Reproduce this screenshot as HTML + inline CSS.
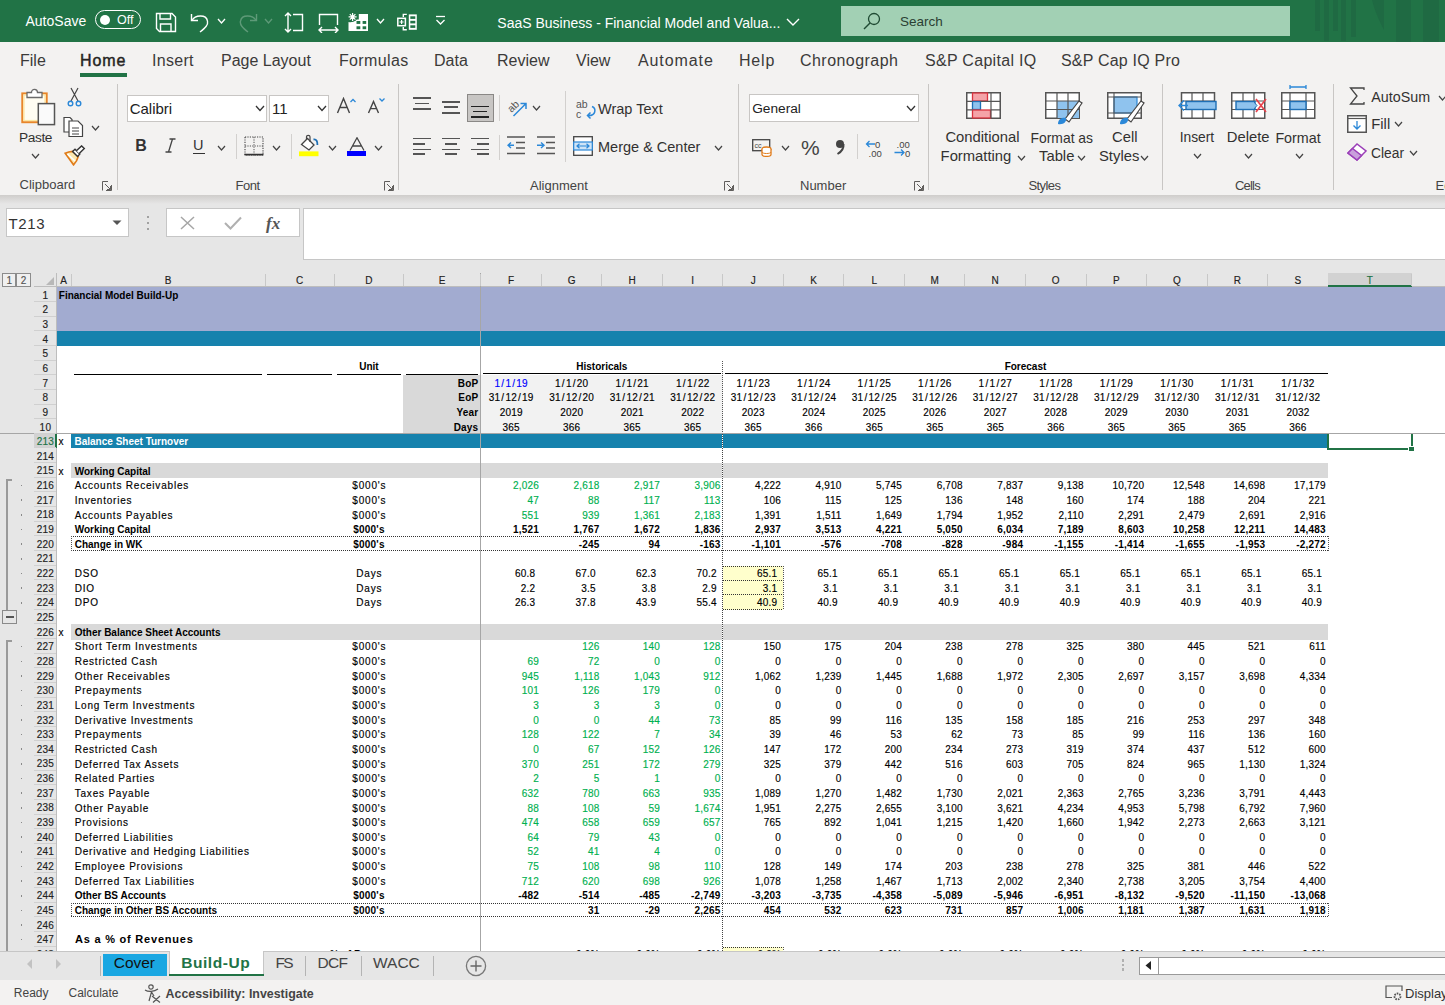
<!DOCTYPE html><html><head><meta charset="utf-8"><style>html,body{margin:0;padding:0;}body{width:1445px;height:1005px;overflow:hidden;position:relative;background:#e6e6e6;font-family:"Liberation Sans", sans-serif;}div{box-sizing:border-box;}</style></head><body>
<div style="position:absolute;left:0px;top:0px;width:1445px;height:42px;background:#217346;"></div>
<div style="position:absolute;left:25.5px;top:12.83px;font-size:14px;line-height:16.10px;color:#fff;font-weight:400;white-space:nowrap;">AutoSave</div>
<div style="position:absolute;left:95px;top:10px;width:46px;height:19px;border:1.3px solid #fff;border-radius:10px;"></div>
<div style="position:absolute;left:100px;top:14.5px;width:10px;height:10px;background:#fff;border-radius:50%;"></div>
<div style="position:absolute;left:117px;top:13.19px;font-size:12.5px;line-height:14.37px;color:#fff;font-weight:400;white-space:nowrap;">Off</div>
<svg style="position:absolute;left:155px;top:12px;" width="22" height="21" viewBox="0 0 22 21"><path d="M1.5 1.5 H17 L20.5 5 V19.5 H4.5 L1.5 16.5 Z" fill="none" stroke="#fff" stroke-width="1.4"/><path d="M5 1.5 V7 H15.5 V1.5" fill="none" stroke="#fff" stroke-width="1.4"/><path d="M5.5 19.5 V12 H16 V19.5" fill="none" stroke="#fff" stroke-width="1.4"/></svg>
<svg style="position:absolute;left:189px;top:12px;" width="22" height="21" viewBox="0 0 22 21"><path d="M2.5 2 V8.5 H9" fill="none" stroke="#fff" stroke-width="1.4"/><path d="M3 8.5 C6 3 17 2 18.5 9 C19.5 13 16 16 11 20" fill="none" stroke="#fff" stroke-width="1.4"/></svg>
<svg style="position:absolute;left:217px;top:18px;" width="9" height="6" viewBox="0 0 9 6"><path d="M1 1 L4.5 5 L8 1" fill="none" stroke="#fff" stroke-width="1.3"/></svg>
<svg style="position:absolute;left:237px;top:12px;" width="22" height="21" viewBox="0 0 22 21"><path d="M19.5 2 V8.5 H13" fill="none" stroke="#5e9a78" stroke-width="1.4"/><path d="M19 8.5 C16 3 5 2 3.5 9 C2.5 13 6 16 11 20" fill="none" stroke="#5e9a78" stroke-width="1.4"/></svg>
<svg style="position:absolute;left:264px;top:18px;" width="9" height="6" viewBox="0 0 9 6"><path d="M1 1 L4.5 5 L8 1" fill="none" stroke="#5e9a78" stroke-width="1.3"/></svg>
<svg style="position:absolute;left:283px;top:12px;" width="22" height="21" viewBox="0 0 22 21"><path d="M5 1 V20 M2 4 L5 1 L8 4 M2 17 L5 20 L8 17" fill="none" stroke="#fff" stroke-width="1.4"/><path d="M10 2.5 H19.5 V18.5 H10" fill="none" stroke="#fff" stroke-width="1.4"/></svg>
<svg style="position:absolute;left:318px;top:12px;" width="21" height="21" viewBox="0 0 21 21"><path d="M1.5 13 V2.5 H19.5 V13" fill="none" stroke="#fff" stroke-width="1.4"/><path d="M1 18 H20 M4 15 L1 18 L4 21 M17 15 L20 18 L17 21" fill="none" stroke="#fff" stroke-width="1.4"/></svg>
<svg style="position:absolute;left:348px;top:12px;" width="21" height="21" viewBox="0 0 21 21"><path d="M10.8 1.9 H20 V19 H0.5 V9.9 C3 10.5 6 10 7.5 7.5 H10.8 Z" fill="#fff"/><rect x="8.5" y="9" width="3.8" height="2.9" fill="#217346"/><rect x="14.6" y="9" width="3.6" height="2.9" fill="#217346"/><rect x="8.5" y="14.3" width="3.8" height="2.9" fill="#217346"/><rect x="14.6" y="14.3" width="3.6" height="2.9" fill="#217346"/><circle cx="4.6" cy="4.9" r="4.8" fill="#217346"/><path d="M4.6 0.9 V8.9 M0.6 4.9 H8.6 M1.8 2.1 L7.4 7.7 M7.4 2.1 L1.8 7.7" stroke="#fff" stroke-width="1.2"/></svg>
<svg style="position:absolute;left:376px;top:18px;" width="9" height="6" viewBox="0 0 9 6"><path d="M1 1 L4.5 5 L8 1" fill="none" stroke="#fff" stroke-width="1.3"/></svg>
<svg style="position:absolute;left:397px;top:12px;" width="21" height="21" viewBox="0 0 21 21"><rect x="0.8" y="6.3" width="7.6" height="7.4" fill="none" stroke="#fff" stroke-width="1.5"/><path d="M4.6 8 V12 M2.6 10 H6.6" stroke="#fff" stroke-width="1.2"/><path d="M9.8 2.4 H6.3 V5 M9.8 17.8 H6.3 V15" fill="none" stroke="#fff" stroke-width="1.4"/><rect x="11.8" y="2.4" width="8" height="15.4" fill="#fff"/><rect x="13.3" y="4.3" width="5" height="2.6" fill="#217346"/><rect x="13.3" y="8.8" width="5" height="2.6" fill="#217346"/><rect x="13.3" y="13.3" width="5" height="2.6" fill="#217346"/></svg>
<svg style="position:absolute;left:435px;top:15px;" width="11" height="12" viewBox="0 0 11 12"><path d="M1 1.5 H10" stroke="#fff" stroke-width="1.3"/><path d="M1.5 5 L5.5 9 L9.5 5" fill="none" stroke="#fff" stroke-width="1.3"/></svg>
<div style="position:absolute;left:497.3px;top:14.93px;font-size:14px;line-height:16.10px;color:#fff;font-weight:400;white-space:nowrap;">SaaS Business - Financial Model and Valua...</div>
<svg style="position:absolute;left:786px;top:18px;" width="14" height="8" viewBox="0 0 14 8"><path d="M1 1 L7.0 7 L13 1" fill="none" stroke="#fff" stroke-width="1.4"/></svg>
<div style="position:absolute;left:841px;top:6px;width:449px;height:30px;background:#a2d0b4;"></div>
<svg style="position:absolute;left:862px;top:12px;" width="20" height="18" viewBox="0 0 20 18"><circle cx="12" cy="7" r="5.5" fill="none" stroke="#1f4a33" stroke-width="1.3"/><path d="M8 11 L2 17" stroke="#1f4a33" stroke-width="1.4"/></svg>
<div style="position:absolute;left:900px;top:14.38px;font-size:13.5px;line-height:15.52px;color:#2a3f33;font-weight:400;white-space:nowrap;">Search</div>
<div style="position:absolute;left:1314.8px;top:0px;width:5.2000000000000455px;height:30.8px;background:#1f6a43;"></div>
<div style="position:absolute;left:1324px;top:0px;width:5px;height:40.5px;background:#1f6a43;"></div>
<div style="position:absolute;left:1332.8px;top:0px;width:4.900000000000091px;height:30.8px;background:#1f6a43;"></div>
<div style="position:absolute;left:1340.8px;top:0px;width:5.2000000000000455px;height:41px;background:#1f6a43;"></div>
<div style="position:absolute;left:1350.6px;top:0px;width:5.0px;height:37px;background:#1f6a43;"></div>
<div style="position:absolute;left:1396px;top:0px;width:15px;height:42px;background:#1f6a43;"></div>
<div style="position:absolute;left:1423px;top:0px;width:16px;height:42px;background:#1f6a43;"></div>
<svg style="position:absolute;left:1370px;top:0px;" width="16" height="31" viewBox="0 0 16 31"><path d="M2 0 H14 V30 C10 22 5 12 2 0 Z" fill="#1f6a43"/></svg>
<div style="position:absolute;left:0px;top:42px;width:1445px;height:153px;background:#f3f2f1;"></div>
<div style="position:absolute;left:20px;top:52.02px;font-size:16px;line-height:18.40px;color:#3b3a39;font-weight:400;white-space:nowrap;">File</div>
<div style="position:absolute;left:80px;top:52.02px;font-size:16px;line-height:18.40px;color:#252423;font-weight:400;white-space:nowrap;letter-spacing:0.9px;-webkit-text-stroke:0.45px;">Home</div>
<div style="position:absolute;left:152px;top:52.02px;font-size:16px;line-height:18.40px;color:#3b3a39;font-weight:400;white-space:nowrap;letter-spacing:0.3px;">Insert</div>
<div style="position:absolute;left:221px;top:52.02px;font-size:16px;line-height:18.40px;color:#3b3a39;font-weight:400;white-space:nowrap;">Page Layout</div>
<div style="position:absolute;left:339px;top:52.02px;font-size:16px;line-height:18.40px;color:#3b3a39;font-weight:400;white-space:nowrap;letter-spacing:0.35px;">Formulas</div>
<div style="position:absolute;left:434px;top:52.02px;font-size:16px;line-height:18.40px;color:#3b3a39;font-weight:400;white-space:nowrap;">Data</div>
<div style="position:absolute;left:497px;top:52.02px;font-size:16px;line-height:18.40px;color:#3b3a39;font-weight:400;white-space:nowrap;">Review</div>
<div style="position:absolute;left:576px;top:52.02px;font-size:16px;line-height:18.40px;color:#3b3a39;font-weight:400;white-space:nowrap;">View</div>
<div style="position:absolute;left:638px;top:52.02px;font-size:16px;line-height:18.40px;color:#3b3a39;font-weight:400;white-space:nowrap;letter-spacing:0.9px;">Automate</div>
<div style="position:absolute;left:739px;top:52.02px;font-size:16px;line-height:18.40px;color:#3b3a39;font-weight:400;white-space:nowrap;letter-spacing:0.8px;">Help</div>
<div style="position:absolute;left:800px;top:52.02px;font-size:16px;line-height:18.40px;color:#3b3a39;font-weight:400;white-space:nowrap;letter-spacing:0.45px;">Chronograph</div>
<div style="position:absolute;left:925px;top:52.02px;font-size:16px;line-height:18.40px;color:#3b3a39;font-weight:400;white-space:nowrap;letter-spacing:0.3px;">S&amp;P Capital IQ</div>
<div style="position:absolute;left:1061px;top:52.02px;font-size:16px;line-height:18.40px;color:#3b3a39;font-weight:400;white-space:nowrap;letter-spacing:0.2px;">S&amp;P Cap IQ Pro</div>
<div style="position:absolute;left:80px;top:73px;width:47px;height:4px;background:#217346;"></div>
<div style="position:absolute;left:116.6px;top:84px;width:1px;height:106px;background:#c8c6c4;"></div>
<div style="position:absolute;left:398px;top:84px;width:1px;height:106px;background:#c8c6c4;"></div>
<div style="position:absolute;left:738.4px;top:84px;width:1px;height:106px;background:#c8c6c4;"></div>
<div style="position:absolute;left:928px;top:84px;width:1px;height:106px;background:#c8c6c4;"></div>
<div style="position:absolute;left:1161.6px;top:84px;width:1px;height:106px;background:#c8c6c4;"></div>
<div style="position:absolute;left:1333px;top:84px;width:1px;height:106px;background:#c8c6c4;"></div>
<svg style="position:absolute;left:20px;top:87px;" width="36" height="40" viewBox="0 0 36 40"><rect x="2.3" y="6.4" width="24.4" height="28.8" fill="#fffdf2" stroke="#e8862a" stroke-width="2"/><rect x="4" y="8" width="21" height="25.5" fill="none" stroke="#fde7a0" stroke-width="1.2"/><path d="M7 10.5 V5.5 H11.5 C11.5 1.3 17.5 1.3 17.5 5.5 H22 V10.5 Z" fill="#fff" stroke="#6b6b6b" stroke-width="1.3"/><rect x="18.3" y="16.6" width="16.2" height="21" fill="#fafafa" stroke="#555" stroke-width="1.5"/></svg>
<div style="position:absolute;left:19px;top:129.60px;font-size:13.7px;line-height:15.75px;color:#323130;font-weight:400;white-space:nowrap;letter-spacing:-0.4px;">Paste</div>
<svg style="position:absolute;left:31px;top:153px;" width="9" height="6" viewBox="0 0 9 6"><path d="M1 1 L4.5 5 L8 1" fill="none" stroke="#444" stroke-width="1.2"/></svg>
<svg style="position:absolute;left:67px;top:87px;" width="15" height="21" viewBox="0 0 15 21"><path d="M4 1 L11 14 M11 1 L4 14" stroke="#444" stroke-width="1.2"/><circle cx="3.5" cy="16.5" r="2.3" fill="none" stroke="#2b88d8" stroke-width="1.4"/><circle cx="11.5" cy="16.5" r="2.3" fill="none" stroke="#2b88d8" stroke-width="1.4"/></svg>
<svg style="position:absolute;left:63px;top:116px;" width="22" height="22" viewBox="0 0 22 22"><path d="M1 1.5 H7 L9 3.5 V16 H1 Z" fill="#fff" stroke="#444" stroke-width="1.2"/><path d="M6 5 H15 L19.5 9.5 V20.5 H6 Z" fill="#fff" stroke="#444" stroke-width="1.2"/><path d="M9 12 H16 M9 15 H16 M9 18 H16" stroke="#444" stroke-width="1"/></svg>
<svg style="position:absolute;left:91px;top:125px;" width="9" height="6" viewBox="0 0 9 6"><path d="M1 1 L4.5 5 L8 1" fill="none" stroke="#444" stroke-width="1.2"/></svg>
<svg style="position:absolute;left:64px;top:145px;" width="22" height="21" viewBox="0 0 22 21"><path d="M1.2 8.2 C4 7 6.5 6.6 8.8 6.4 L14.2 11.6 C13.5 14.5 11.8 17.5 9.5 19.8 Z" fill="#fde9b0" stroke="#e07b1a" stroke-width="1.7"/><path d="M3.5 9 L11 16" stroke="#fff" stroke-width="1.6"/><path d="M8.6 6.4 L11 4.2 L15.8 9 L13.6 11.4 Z" fill="#fff" stroke="#333" stroke-width="1.4"/><path d="M12.4 5.8 L17.6 0.9 L20.3 3.6 L15.2 8.6" fill="#fff" stroke="#333" stroke-width="1.4"/></svg>
<div style="position:absolute;left:19.6px;top:177.83px;font-size:13px;line-height:14.95px;color:#444;font-weight:400;white-space:nowrap;">Clipboard</div>
<svg style="position:absolute;left:102px;top:180.5px;" width="10" height="10" viewBox="0 0 10 10"><path d="M0.5 9.5 V0.5 H6 M9.5 4 V9.5 H4 M3 3 L8.5 8.5 M8.5 5 V8.5 H5" fill="none" stroke="#605e5c" stroke-width="1"/></svg>
<div style="position:absolute;left:127px;top:94.5px;width:140px;height:27px;background:#fff;border:1px solid #c8c6c4;"></div>
<div style="position:absolute;left:129.7px;top:99.62px;font-size:15px;line-height:17.25px;color:#222;font-weight:400;white-space:nowrap;">Calibri</div>
<svg style="position:absolute;left:255px;top:105px;" width="10" height="6.5" viewBox="0 0 10 6.5"><path d="M1 1 L5.0 5.5 L9 1" fill="none" stroke="#333" stroke-width="1.3"/></svg>
<div style="position:absolute;left:269.4px;top:94.5px;width:60px;height:27px;background:#fff;border:1px solid #c8c6c4;"></div>
<div style="position:absolute;left:272px;top:99.62px;font-size:15px;line-height:17.25px;color:#222;font-weight:400;white-space:nowrap;">11</div>
<svg style="position:absolute;left:317px;top:105px;" width="10" height="6.5" viewBox="0 0 10 6.5"><path d="M1 1 L5.0 5.5 L9 1" fill="none" stroke="#333" stroke-width="1.3"/></svg>
<svg style="position:absolute;left:336px;top:97px;" width="22" height="17" viewBox="0 0 22 17"><path d="M1.5 16 L7.5 1.5 L13.5 16 M3.8 10.5 H11.2" fill="none" stroke="#444" stroke-width="1.4"/><path d="M14.5 5 L17 2.5 L19.5 5" fill="none" stroke="#2b88d8" stroke-width="1.3"/></svg>
<svg style="position:absolute;left:367px;top:97px;" width="20" height="17" viewBox="0 0 20 17"><path d="M1.5 16 L6.5 4.5 L11.5 16 M3.4 11.6 H9.6" fill="none" stroke="#444" stroke-width="1.4"/><path d="M12.5 1.5 L15 4 L17.5 1.5" fill="none" stroke="#2b88d8" stroke-width="1.3"/></svg>
<div style="position:absolute;left:135.3px;top:136.92px;font-size:16px;line-height:18.40px;color:#333;font-weight:700;white-space:nowrap;">B</div>
<svg style="position:absolute;left:165px;top:138px;" width="11" height="15" viewBox="0 0 11 15"><path d="M4.5 1 H10.5 M0.5 14 H6.5 M7.5 1 L3.5 14" fill="none" stroke="#444" stroke-width="1.3"/></svg>
<div style="position:absolute;left:193px;top:137.38px;font-size:14.5px;line-height:16.67px;color:#333;font-weight:400;white-space:nowrap;">U</div>
<div style="position:absolute;left:193px;top:152.5px;width:11.5px;height:1.3px;background:#333;"></div>
<svg style="position:absolute;left:217px;top:145px;" width="9" height="6" viewBox="0 0 9 6"><path d="M1 1 L4.5 5 L8 1" fill="none" stroke="#444" stroke-width="1.2"/></svg>
<div style="position:absolute;left:235.6px;top:134.4px;width:1px;height:24.599999999999994px;background:#d2d0ce;"></div>
<svg style="position:absolute;left:244px;top:136px;" width="20" height="20" viewBox="0 0 20 20"><path d="M1 1 H19 V19 H1 Z" fill="none" stroke="#444" stroke-width="1.1" stroke-dasharray="1.2 1.2"/><path d="M10 1 V19 M1 10 H19" stroke="#555" stroke-width="1" stroke-dasharray="1.2 1.2"/><path d="M0.5 18.6 H19.5" stroke="#333" stroke-width="1.7"/></svg>
<svg style="position:absolute;left:272px;top:145px;" width="9" height="6" viewBox="0 0 9 6"><path d="M1 1 L4.5 5 L8 1" fill="none" stroke="#444" stroke-width="1.2"/></svg>
<div style="position:absolute;left:290.6px;top:134.4px;width:1px;height:24.599999999999994px;background:#d2d0ce;"></div>
<svg style="position:absolute;left:299px;top:134px;" width="20" height="24" viewBox="0 0 20 24"><path d="M2.5 10.5 L8.5 4.5 L15 11 L10 16 Z" fill="#fff" stroke="#444" stroke-width="1.3"/><path d="M7.5 5.5 V2.8 C7.5 0.8 11 0.8 11 2.8 V8" fill="none" stroke="#444" stroke-width="1.2"/><path d="M14.5 5.5 C17.5 5 18.6 7.5 18.4 11" fill="none" stroke="#1f6fb5" stroke-width="1.8"/><rect x="0" y="17.4" width="19.5" height="4.8" fill="#ffff00"/></svg>
<svg style="position:absolute;left:328px;top:145px;" width="9" height="6" viewBox="0 0 9 6"><path d="M1 1 L4.5 5 L8 1" fill="none" stroke="#444" stroke-width="1.2"/></svg>
<svg style="position:absolute;left:346.5px;top:136.5px;" width="20" height="14" viewBox="0 0 20 14"><path d="M3 13.5 L10 0.8 L17 13.5 M5.8 9 H14.2" fill="none" stroke="#444" stroke-width="1.3"/></svg>
<div style="position:absolute;left:346.7px;top:151px;width:19.5px;height:5px;background:#0000ff;"></div>
<svg style="position:absolute;left:374px;top:145px;" width="9" height="6" viewBox="0 0 9 6"><path d="M1 1 L4.5 5 L8 1" fill="none" stroke="#444" stroke-width="1.2"/></svg>
<div style="position:absolute;left:235.6px;top:178.94px;font-size:13px;line-height:14.95px;color:#444;font-weight:400;white-space:nowrap;letter-spacing:-0.5px;">Font</div>
<svg style="position:absolute;left:384px;top:180.7px;" width="10" height="10" viewBox="0 0 10 10"><path d="M0.5 9.5 V0.5 H6 M9.5 4 V9.5 H4 M3 3 L8.5 8.5 M8.5 5 V8.5 H5" fill="none" stroke="#605e5c" stroke-width="1"/></svg>
<div style="position:absolute;left:413px;top:97px;width:18px;height:1.6px;background:#555;"></div>
<div style="position:absolute;left:415px;top:102.6px;width:14px;height:1.6px;background:#555;"></div>
<div style="position:absolute;left:413px;top:108.2px;width:18px;height:1.6px;background:#555;"></div>
<div style="position:absolute;left:442px;top:101px;width:18px;height:1.6px;background:#555;"></div>
<div style="position:absolute;left:444px;top:106.4px;width:14px;height:1.6px;background:#555;"></div>
<div style="position:absolute;left:442px;top:112px;width:18px;height:1.6px;background:#555;"></div>
<div style="position:absolute;left:467px;top:94px;width:27px;height:27.7px;background:#c8c6c4;border:1px solid #8a8886;"></div>
<div style="position:absolute;left:471px;top:105.8px;width:18px;height:1.6px;background:#222;"></div>
<div style="position:absolute;left:473px;top:110.9px;width:14px;height:1.6px;background:#222;"></div>
<div style="position:absolute;left:471px;top:116px;width:18px;height:1.6px;background:#222;"></div>
<div style="position:absolute;left:498.6px;top:95px;width:1px;height:25.700000000000003px;background:#d2d0ce;"></div>
<svg style="position:absolute;left:505px;top:95px;" width="24" height="24" viewBox="0 0 24 24"><text x="2" y="15" font-size="10.5" font-family="Liberation Sans" fill="#555" transform="rotate(-45 8 11)">ab</text><path d="M8.5 21 L21 8.5 M15.5 8.5 H21 V14" fill="none" stroke="#2b88d8" stroke-width="1.5"/></svg>
<svg style="position:absolute;left:532px;top:105px;" width="9" height="6" viewBox="0 0 9 6"><path d="M1 1 L4.5 5 L8 1" fill="none" stroke="#444" stroke-width="1.2"/></svg>
<div style="position:absolute;left:564.5px;top:91px;width:1px;height:71px;background:#d2d0ce;"></div>
<svg style="position:absolute;left:575px;top:99px;" width="22" height="21" viewBox="0 0 22 21"><text x="1" y="9" font-size="10.5" font-family="Liberation Sans" fill="#555">ab</text><text x="1" y="19" font-size="10.5" font-family="Liberation Sans" fill="#555">c</text><path d="M17 7.5 C21.5 9.5 21 17 13 16.5 M15.5 13.5 L12.5 16.5 L15.5 19.5" fill="none" stroke="#2b88d8" stroke-width="1.5"/></svg>
<div style="position:absolute;left:598px;top:101.08px;font-size:14.5px;line-height:16.67px;color:#323130;font-weight:400;white-space:nowrap;">Wrap Text</div>
<div style="position:absolute;left:413px;top:137.5px;width:18px;height:1.6px;background:#555;"></div>
<div style="position:absolute;left:413px;top:143px;width:12px;height:1.6px;background:#555;"></div>
<div style="position:absolute;left:413px;top:148.5px;width:18px;height:1.6px;background:#555;"></div>
<div style="position:absolute;left:413px;top:153px;width:12px;height:1.6px;background:#555;"></div>
<div style="position:absolute;left:442px;top:137.5px;width:18px;height:1.6px;background:#555;"></div>
<div style="position:absolute;left:445px;top:143px;width:12px;height:1.6px;background:#555;"></div>
<div style="position:absolute;left:442px;top:148.5px;width:18px;height:1.6px;background:#555;"></div>
<div style="position:absolute;left:445px;top:153px;width:12px;height:1.6px;background:#555;"></div>
<div style="position:absolute;left:471px;top:137.5px;width:18px;height:1.6px;background:#555;"></div>
<div style="position:absolute;left:477px;top:143px;width:12px;height:1.6px;background:#555;"></div>
<div style="position:absolute;left:471px;top:148.5px;width:18px;height:1.6px;background:#555;"></div>
<div style="position:absolute;left:477px;top:153px;width:12px;height:1.6px;background:#555;"></div>
<div style="position:absolute;left:498.6px;top:134.5px;width:1px;height:25.5px;background:#d2d0ce;"></div>
<svg style="position:absolute;left:507px;top:136px;" width="19" height="19" viewBox="0 0 19 19"><path d="M0 1 H18 M9 6.5 H18 M9 12 H18 M0 17.5 H18" stroke="#555" stroke-width="1.6"/><path d="M7 9.3 H1 M4 6.5 L1 9.3 L4 12" fill="none" stroke="#2b88d8" stroke-width="1.4"/></svg>
<svg style="position:absolute;left:536.5px;top:136px;" width="19" height="19" viewBox="0 0 19 19"><path d="M0 1 H18 M9 6.5 H18 M9 12 H18 M0 17.5 H18" stroke="#555" stroke-width="1.6"/><path d="M0 9.3 H7 M4 6.5 L7 9.3 L4 12" fill="none" stroke="#2b88d8" stroke-width="1.4"/></svg>
<svg style="position:absolute;left:573px;top:136px;" width="20" height="20" viewBox="0 0 20 20"><rect x="0.7" y="0.7" width="18.6" height="18.6" fill="#fff" stroke="#444" stroke-width="1.3"/><rect x="0.7" y="6" width="18.6" height="8" fill="#cfe4f7" stroke="#2b88d8" stroke-width="1.2"/><path d="M4 10 H16 M6.5 7.8 L4 10 L6.5 12.2 M13.5 7.8 L16 10 L13.5 12.2" fill="none" stroke="#2b88d8" stroke-width="1.2"/></svg>
<div style="position:absolute;left:598px;top:139.18px;font-size:14.5px;line-height:16.67px;color:#323130;font-weight:400;white-space:nowrap;">Merge &amp; Center</div>
<svg style="position:absolute;left:714px;top:145px;" width="9" height="6" viewBox="0 0 9 6"><path d="M1 1 L4.5 5 L8 1" fill="none" stroke="#444" stroke-width="1.2"/></svg>
<div style="position:absolute;left:530px;top:178.94px;font-size:13px;line-height:14.95px;color:#444;font-weight:400;white-space:nowrap;">Alignment</div>
<svg style="position:absolute;left:724px;top:180.7px;" width="10" height="10" viewBox="0 0 10 10"><path d="M0.5 9.5 V0.5 H6 M9.5 4 V9.5 H4 M3 3 L8.5 8.5 M8.5 5 V8.5 H5" fill="none" stroke="#605e5c" stroke-width="1"/></svg>
<div style="position:absolute;left:749.4px;top:94px;width:169.3px;height:27.5px;background:#fff;border:1px solid #c8c6c4;"></div>
<div style="position:absolute;left:752.2px;top:100.90px;font-size:13.7px;line-height:15.75px;color:#222;font-weight:400;white-space:nowrap;">General</div>
<svg style="position:absolute;left:906px;top:105px;" width="10" height="6.5" viewBox="0 0 10 6.5"><path d="M1 1 L5.0 5.5 L9 1" fill="none" stroke="#333" stroke-width="1.3"/></svg>
<svg style="position:absolute;left:752px;top:139px;" width="22" height="18" viewBox="0 0 22 18"><rect x="0.7" y="0.7" width="17" height="11" fill="none" stroke="#444" stroke-width="1.3"/><text x="2.5" y="9" font-size="7" font-family="Liberation Sans" fill="#444">cc</text><ellipse cx="14.5" cy="10" rx="4.5" ry="2" fill="#fff" stroke="#e07b1a" stroke-width="1.3"/><path d="M10 10 V15.5 C10 18 19 18 19 15.5 V10" fill="#fff" stroke="#e07b1a" stroke-width="1.3"/><path d="M10 13 C10 15 19 15 19 13" fill="none" stroke="#e07b1a" stroke-width="1"/></svg>
<svg style="position:absolute;left:781px;top:145px;" width="9" height="6" viewBox="0 0 9 6"><path d="M1 1 L4.5 5 L8 1" fill="none" stroke="#444" stroke-width="1.2"/></svg>
<div style="position:absolute;left:801px;top:135.50px;font-size:21px;line-height:24.15px;color:#444;font-weight:400;white-space:nowrap;">%</div>
<svg style="position:absolute;left:835px;top:139px;" width="11" height="16" viewBox="0 0 11 16"><circle cx="5" cy="5" r="4" fill="#444"/><path d="M8.5 5 C9 10 6 13 2.5 15" fill="none" stroke="#444" stroke-width="2"/></svg>
<div style="position:absolute;left:857.4px;top:134px;width:1px;height:25.400000000000006px;background:#d2d0ce;"></div>
<svg style="position:absolute;left:865px;top:140px;" width="21" height="17" viewBox="0 0 21 17"><text x="10" y="8" font-size="9.5" font-family="Liberation Sans" fill="#444">0</text><text x="3.5" y="16.5" font-size="9.5" font-family="Liberation Sans" fill="#444">.00</text><path d="M10 4 H1.5 M4.5 1 L1.5 4 L4.5 7" fill="none" stroke="#2b88d8" stroke-width="1.3"/></svg>
<svg style="position:absolute;left:894px;top:140px;" width="21" height="17" viewBox="0 0 21 17"><text x="2.5" y="8" font-size="9.5" font-family="Liberation Sans" fill="#444">.00</text><text x="11" y="16.5" font-size="9.5" font-family="Liberation Sans" fill="#444">0</text><path d="M0.5 12.5 H10 M7 9.5 L10 12.5 L7 15.5" fill="none" stroke="#2b88d8" stroke-width="1.3"/></svg>
<div style="position:absolute;left:800px;top:178.94px;font-size:13px;line-height:14.95px;color:#444;font-weight:400;white-space:nowrap;">Number</div>
<svg style="position:absolute;left:914px;top:180.7px;" width="10" height="10" viewBox="0 0 10 10"><path d="M0.5 9.5 V0.5 H6 M9.5 4 V9.5 H4 M3 3 L8.5 8.5 M8.5 5 V8.5 H5" fill="none" stroke="#605e5c" stroke-width="1"/></svg>
<svg style="position:absolute;left:966px;top:92px;" width="35" height="27" viewBox="0 0 35 27"><rect x="0.75" y="0.75" width="33.5" height="25.5" fill="#fff" stroke="#555" stroke-width="1.5"/><rect x="6.5" y="1" width="15" height="8" fill="#f4a3a8" stroke="#d9333f" stroke-width="1.3"/><rect x="6.5" y="9.5" width="8" height="8" fill="#8fc3ee" stroke="#1f6fb5" stroke-width="1.3"/><rect x="6.5" y="18" width="18" height="8" fill="#f4a3a8" stroke="#d9333f" stroke-width="1.3"/><path d="M25 1 V26 M1 9.3 H6.5 M1 17.8 H6.5 M14.5 9.3 H34 M25 17.8 H34" stroke="#555" stroke-width="1.2"/></svg>
<div style="position:absolute;left:945.4px;top:129.11px;font-size:14.8px;line-height:17.02px;color:#323130;font-weight:400;white-space:nowrap;">Conditional</div>
<div style="position:absolute;left:940.6px;top:148.11px;font-size:14.8px;line-height:17.02px;color:#323130;font-weight:400;white-space:nowrap;">Formatting</div>
<svg style="position:absolute;left:1016.5px;top:155px;" width="9" height="6" viewBox="0 0 9 6"><path d="M1 1 L4.5 5 L8 1" fill="none" stroke="#444" stroke-width="1.2"/></svg>
<svg style="position:absolute;left:1045px;top:92px;" width="38" height="33" viewBox="0 0 38 33"><rect x="0.75" y="0.75" width="33.5" height="25.5" fill="#fff" stroke="#555" stroke-width="1.5"/><rect x="12" y="9" width="22" height="17" fill="#8fc3ee"/><path d="M12 1 V26 M23 1 V26 M1 9 H34 M1 17.5 H34" stroke="#555" stroke-width="1.2"/><path d="M20 27 L34 9 L37 11 L24 30 Z" fill="#fff" stroke="#444" stroke-width="1.2"/><path d="M13 32 C13 27 17 25 21 26 C22 30 18 33 13 32 Z" fill="#2b88d8"/></svg>
<div style="position:absolute;left:1030.5px;top:129.92px;font-size:13.9px;line-height:15.98px;color:#323130;font-weight:400;white-space:nowrap;">Format as</div>
<div style="position:absolute;left:1039px;top:148.11px;font-size:14.8px;line-height:17.02px;color:#323130;font-weight:400;white-space:nowrap;">Table</div>
<svg style="position:absolute;left:1076.5px;top:155px;" width="9" height="6" viewBox="0 0 9 6"><path d="M1 1 L4.5 5 L8 1" fill="none" stroke="#444" stroke-width="1.2"/></svg>
<svg style="position:absolute;left:1106.7px;top:92px;" width="38" height="33" viewBox="0 0 38 33"><rect x="0.75" y="0.75" width="33.5" height="25.5" fill="#fff" stroke="#555" stroke-width="1.5"/><rect x="7" y="5" width="23" height="16" fill="#8fc3ee" stroke="#2b88d8" stroke-width="1.2"/><path d="M7 1 V26 M1 5 H34 M1 21 H34" stroke="#555" stroke-width="1.1"/><path d="M20 27 L34 9 L37 11 L24 30 Z" fill="#fff" stroke="#444" stroke-width="1.2"/><path d="M13 32 C13 27 17 25 21 26 C22 30 18 33 13 32 Z" fill="#2b88d8"/></svg>
<div style="position:absolute;left:1112px;top:129.11px;font-size:14.8px;line-height:17.02px;color:#323130;font-weight:400;white-space:nowrap;">Cell</div>
<div style="position:absolute;left:1099px;top:148.11px;font-size:14.8px;line-height:17.02px;color:#323130;font-weight:400;white-space:nowrap;">Styles</div>
<svg style="position:absolute;left:1139.5px;top:155px;" width="9" height="6" viewBox="0 0 9 6"><path d="M1 1 L4.5 5 L8 1" fill="none" stroke="#444" stroke-width="1.2"/></svg>
<div style="position:absolute;left:1028.5px;top:178.94px;font-size:13px;line-height:14.95px;color:#444;font-weight:400;white-space:nowrap;letter-spacing:-0.6px;">Styles</div>
<svg style="position:absolute;left:1178px;top:92px;" width="39" height="27" viewBox="0 0 39 27"><rect x="3.5" y="0.75" width="33" height="25.5" fill="#fff" stroke="#555" stroke-width="1.5"/><path d="M14 1 V26 M25 1 V26 M3 9 H37 M3 17.5 H37" stroke="#555" stroke-width="1.2"/><rect x="8" y="9.5" width="30" height="8" fill="#8fc3ee" stroke="#1f6fb5" stroke-width="1.4"/><path d="M10 13.5 H1.5 M6 8.5 L1 13.5 L6 18.5" fill="none" stroke="#2b88d8" stroke-width="1.4"/></svg>
<svg style="position:absolute;left:1231px;top:92px;" width="36" height="27" viewBox="0 0 36 27"><rect x="0.75" y="0.75" width="33" height="25.5" fill="#fff" stroke="#555" stroke-width="1.5"/><path d="M12 1 V26 M23 1 V26 M1 9 H34 M1 17.5 H34" stroke="#555" stroke-width="1.2"/><rect x="5" y="9.5" width="19" height="8" fill="#8fc3ee" stroke="#1f6fb5" stroke-width="1.4"/><path d="M22 9 L26 13.5 L22 18" fill="#8fc3ee" stroke="#1f6fb5" stroke-width="1"/><path d="M25 7 L35 20 M35 7 L25 20" stroke="#e8414b" stroke-width="1.6"/></svg>
<svg style="position:absolute;left:1281.4px;top:85px;" width="35" height="34" viewBox="0 0 35 34"><path d="M9 2 H25 M9 0 V4 M25 0 V4" stroke="#2b88d8" stroke-width="1.3"/><rect x="0.75" y="7.75" width="33" height="25.5" fill="#fff" stroke="#555" stroke-width="1.5"/><path d="M9 8 V33 M25 8 V33 M1 16 H34 M1 24.5 H34" stroke="#555" stroke-width="1.2"/><rect x="9" y="16.5" width="16" height="8" fill="#8fc3ee" stroke="#1f6fb5" stroke-width="1.4"/></svg>
<div style="position:absolute;left:1179.7px;top:130.11px;font-size:13.8px;line-height:15.87px;color:#323130;font-weight:400;white-space:nowrap;">Insert</div>
<div style="position:absolute;left:1226.8px;top:129.21px;font-size:14.8px;line-height:17.02px;color:#323130;font-weight:400;white-space:nowrap;">Delete</div>
<div style="position:absolute;left:1275.4px;top:129.66px;font-size:14.3px;line-height:16.45px;color:#323130;font-weight:400;white-space:nowrap;">Format</div>
<svg style="position:absolute;left:1192.5px;top:153px;" width="9" height="6" viewBox="0 0 9 6"><path d="M1 1 L4.5 5 L8 1" fill="none" stroke="#444" stroke-width="1.2"/></svg>
<svg style="position:absolute;left:1243.5px;top:153px;" width="9" height="6" viewBox="0 0 9 6"><path d="M1 1 L4.5 5 L8 1" fill="none" stroke="#444" stroke-width="1.2"/></svg>
<svg style="position:absolute;left:1294.5px;top:153px;" width="9" height="6" viewBox="0 0 9 6"><path d="M1 1 L4.5 5 L8 1" fill="none" stroke="#444" stroke-width="1.2"/></svg>
<div style="position:absolute;left:1235px;top:178.94px;font-size:13px;line-height:14.95px;color:#444;font-weight:400;white-space:nowrap;letter-spacing:-0.8px;">Cells</div>
<svg style="position:absolute;left:1349px;top:87px;" width="16" height="18" viewBox="0 0 16 18"><path d="M15 3 V1 H1.5 L8 9 L1.5 17 H15 V15" fill="none" stroke="#444" stroke-width="1.3"/></svg>
<div style="position:absolute;left:1371.3px;top:88.56px;font-size:14.3px;line-height:16.45px;color:#323130;font-weight:400;white-space:nowrap;">AutoSum</div>
<svg style="position:absolute;left:1438px;top:95px;" width="9" height="6" viewBox="0 0 9 6"><path d="M1 1 L4.5 5 L8 1" fill="none" stroke="#444" stroke-width="1.2"/></svg>
<svg style="position:absolute;left:1347px;top:115px;" width="20" height="18" viewBox="0 0 20 18"><rect x="0.75" y="0.75" width="18.5" height="16.5" fill="#fff" stroke="#555" stroke-width="1.5"/><path d="M1 3.5 H19" stroke="#555" stroke-width="1.2"/><path d="M10 6 V14 M6.5 10.5 L10 14 L13.5 10.5" fill="none" stroke="#2b88d8" stroke-width="1.3"/></svg>
<div style="position:absolute;left:1371.3px;top:115.91px;font-size:14.8px;line-height:17.02px;color:#323130;font-weight:400;white-space:nowrap;">Fill</div>
<svg style="position:absolute;left:1393.5px;top:121px;" width="9" height="6" viewBox="0 0 9 6"><path d="M1 1 L4.5 5 L8 1" fill="none" stroke="#444" stroke-width="1.2"/></svg>
<svg style="position:absolute;left:1347px;top:142px;" width="20" height="20" viewBox="0 0 20 20"><path d="M1 11 L10 2 L19 9 L10 18 Z" fill="#fff" stroke="#9b3fb8" stroke-width="1.5"/><path d="M1 11 L5.5 6.5 L14.5 13.5 L10 18 Z" fill="#c9a0dc" stroke="#9b3fb8" stroke-width="1.5"/></svg>
<div style="position:absolute;left:1371px;top:145.81px;font-size:13.8px;line-height:15.87px;color:#323130;font-weight:400;white-space:nowrap;">Clear</div>
<svg style="position:absolute;left:1409px;top:150px;" width="9" height="6" viewBox="0 0 9 6"><path d="M1 1 L4.5 5 L8 1" fill="none" stroke="#444" stroke-width="1.2"/></svg>
<div style="position:absolute;left:1435.5px;top:178.94px;font-size:13px;line-height:14.95px;color:#444;font-weight:400;white-space:nowrap;">Editing</div>
<div style="position:absolute;left:0px;top:194.8px;width:1445px;height:9px;background:linear-gradient(#cfcdcb,#e6e6e6);"></div>
<div style="position:absolute;left:6.2px;top:208.3px;width:123.3px;height:29px;background:#fff;border:1px solid #c6c6c6;"></div>
<div style="position:absolute;left:8.4px;top:214.73px;font-size:15px;line-height:17.25px;color:#333;font-weight:400;white-space:nowrap;letter-spacing:0.7px;">T213</div>
<svg style="position:absolute;left:112px;top:220px;" width="10" height="6" viewBox="0 0 10 6"><path d="M0.5 0.5 H9.5 L5 5 Z" fill="#555"/></svg>
<div style="position:absolute;left:147px;top:216px;width:2.2px;height:2.2px;background:#8a8a8a;border-radius:1px;"></div>
<div style="position:absolute;left:147px;top:222px;width:2.2px;height:2.2px;background:#8a8a8a;border-radius:1px;"></div>
<div style="position:absolute;left:147px;top:228px;width:2.2px;height:2.2px;background:#8a8a8a;border-radius:1px;"></div>
<div style="position:absolute;left:166px;top:208.3px;width:133.6px;height:29px;background:#fff;border:1px solid #c6c6c6;"></div>
<svg style="position:absolute;left:180px;top:216px;" width="15" height="14" viewBox="0 0 15 14"><path d="M1 1 L14 13 M14 1 L1 13" stroke="#a6a6a6" stroke-width="1.5"/></svg>
<svg style="position:absolute;left:224px;top:216px;" width="18" height="14" viewBox="0 0 18 14"><path d="M1 7 L6.5 12.5 L17 1.5" fill="none" stroke="#b0b0b0" stroke-width="2"/></svg>
<div style="position:absolute;left:266px;top:214.12px;font-size:17px;line-height:19.55px;color:#555;font-weight:700;white-space:nowrap;font-family:'Liberation Serif',serif;"><i>fx</i></div>
<div style="position:absolute;left:303px;top:208px;width:1160px;height:52.4px;background:#fff;border:1px solid #c6c6c6;"></div>
<div style="position:absolute;left:0;top:263px;width:1445px;height:688.2px;overflow:hidden;">
<div style="position:absolute;left:0px;top:9.5px;width:1445px;height:14.8px;background:#e6e6e6;"></div>
<div style="position:absolute;left:34.3px;top:23.30000000000001px;width:1445px;height:1px;background:#bdbdbd;"></div>
<div style="position:absolute;left:56px;top:9.5px;width:1px;height:678.5px;background:#bdbdbd;"></div>
<div style="position:absolute;left:57px;top:24.30000000000001px;width:1445px;height:663.7px;background:#fff;"></div>
<div style="position:absolute;left:57px;top:24.30000000000001px;width:1445px;height:43.95px;background:#a2abd0;"></div>
<div style="position:absolute;left:57px;top:68.25px;width:1445px;height:14.65px;background:#1682ad;"></div>
<div style="position:absolute;left:58.8px;top:26.75px;font-size:10px;line-height:11.50px;color:#000;font-weight:700;white-space:nowrap;">Financial Model Build-Up</div>
<div style="position:absolute;left:73.8px;top:110.60000000000002px;width:188.7px;height:1.5px;background:#000;"></div>
<div style="position:absolute;left:267.4px;top:110.60000000000002px;width:64.20000000000005px;height:1.5px;background:#000;"></div>
<div style="position:absolute;left:337.2px;top:110.60000000000002px;width:63.80000000000001px;height:1.5px;background:#000;"></div>
<div style="position:absolute;left:406px;top:110.60000000000002px;width:72.19999999999999px;height:1.5px;background:#000;"></div>
<div style="position:absolute;left:483px;top:110.10000000000002px;width:238.39999999999998px;height:1.3px;background:#000;"></div>
<div style="position:absolute;left:725px;top:110.10000000000002px;width:603.0999999999999px;height:1.3px;background:#000;"></div>
<div style="position:absolute;left:334.4px;top:98.00px;font-size:10px;line-height:11.50px;color:#000;font-weight:700;white-space:nowrap;width:69.0px;text-align:center;">Unit</div>
<div style="position:absolute;left:480.8px;top:98.00px;font-size:10px;line-height:11.50px;color:#000;font-weight:700;white-space:nowrap;width:242.1px;text-align:center;">Historicals</div>
<div style="position:absolute;left:722.9px;top:98.00px;font-size:10px;line-height:11.50px;color:#000;font-weight:700;white-space:nowrap;width:605.2px;text-align:center;">Forecast</div>
<div style="position:absolute;left:403.4px;top:112.20000000000005px;width:77.4px;height:58.6px;background:#d9d9d9;"></div>
<div style="position:absolute;left:480.8px;top:112.20000000000005px;width:242.1px;height:58.6px;background:#f2f2f2;"></div>
<div style="position:absolute;left:278.4px;top:114.65px;font-size:10px;line-height:11.50px;color:#000;font-weight:700;white-space:nowrap;letter-spacing:0.2px;width:200px;text-align:right;">BoP</div>
<div style="position:absolute;left:278.4px;top:129.30px;font-size:10px;line-height:11.50px;color:#000;font-weight:700;white-space:nowrap;letter-spacing:0.2px;width:200px;text-align:right;">EoP</div>
<div style="position:absolute;left:278.4px;top:143.95px;font-size:10px;line-height:11.50px;color:#000;font-weight:700;white-space:nowrap;letter-spacing:0.2px;width:200px;text-align:right;">Year</div>
<div style="position:absolute;left:278.4px;top:158.60px;font-size:10px;line-height:11.50px;color:#000;font-weight:700;white-space:nowrap;letter-spacing:0.2px;width:200px;text-align:right;">Days</div>
<div style="position:absolute;left:480.90000000000003px;top:114.65px;font-size:10px;line-height:11.50px;color:#0000ff;font-weight:400;white-space:nowrap;letter-spacing:0.2px;width:60.52000000000004px;text-align:center;-webkit-text-stroke:0.15px;">1<span style="margin:0 1.1px">/</span>1<span style="margin:0 1.1px">/</span>19</div>
<div style="position:absolute;left:480.90000000000003px;top:129.30px;font-size:10px;line-height:11.50px;color:#000;font-weight:400;white-space:nowrap;letter-spacing:0.2px;width:60.52000000000004px;text-align:center;-webkit-text-stroke:0.15px;">31<span style="margin:0 1.1px">/</span>12<span style="margin:0 1.1px">/</span>19</div>
<div style="position:absolute;left:480.90000000000003px;top:143.95px;font-size:10px;line-height:11.50px;color:#000;font-weight:400;white-space:nowrap;letter-spacing:0.2px;width:60.52000000000004px;text-align:center;-webkit-text-stroke:0.15px;">2019</div>
<div style="position:absolute;left:480.90000000000003px;top:158.60px;font-size:10px;line-height:11.50px;color:#000;font-weight:400;white-space:nowrap;letter-spacing:0.2px;width:60.52000000000004px;text-align:center;-webkit-text-stroke:0.15px;">365</div>
<div style="position:absolute;left:541.4200000000001px;top:114.65px;font-size:10px;line-height:11.50px;color:#000;font-weight:400;white-space:nowrap;letter-spacing:0.2px;width:60.51999999999998px;text-align:center;-webkit-text-stroke:0.15px;">1<span style="margin:0 1.1px">/</span>1<span style="margin:0 1.1px">/</span>20</div>
<div style="position:absolute;left:541.4200000000001px;top:129.30px;font-size:10px;line-height:11.50px;color:#000;font-weight:400;white-space:nowrap;letter-spacing:0.2px;width:60.51999999999998px;text-align:center;-webkit-text-stroke:0.15px;">31<span style="margin:0 1.1px">/</span>12<span style="margin:0 1.1px">/</span>20</div>
<div style="position:absolute;left:541.4200000000001px;top:143.95px;font-size:10px;line-height:11.50px;color:#000;font-weight:400;white-space:nowrap;letter-spacing:0.2px;width:60.51999999999998px;text-align:center;-webkit-text-stroke:0.15px;">2020</div>
<div style="position:absolute;left:541.4200000000001px;top:158.60px;font-size:10px;line-height:11.50px;color:#000;font-weight:400;white-space:nowrap;letter-spacing:0.2px;width:60.51999999999998px;text-align:center;-webkit-text-stroke:0.15px;">366</div>
<div style="position:absolute;left:601.94px;top:114.65px;font-size:10px;line-height:11.50px;color:#000;font-weight:400;white-space:nowrap;letter-spacing:0.2px;width:60.51999999999998px;text-align:center;-webkit-text-stroke:0.15px;">1<span style="margin:0 1.1px">/</span>1<span style="margin:0 1.1px">/</span>21</div>
<div style="position:absolute;left:601.94px;top:129.30px;font-size:10px;line-height:11.50px;color:#000;font-weight:400;white-space:nowrap;letter-spacing:0.2px;width:60.51999999999998px;text-align:center;-webkit-text-stroke:0.15px;">31<span style="margin:0 1.1px">/</span>12<span style="margin:0 1.1px">/</span>21</div>
<div style="position:absolute;left:601.94px;top:143.95px;font-size:10px;line-height:11.50px;color:#000;font-weight:400;white-space:nowrap;letter-spacing:0.2px;width:60.51999999999998px;text-align:center;-webkit-text-stroke:0.15px;">2021</div>
<div style="position:absolute;left:601.94px;top:158.60px;font-size:10px;line-height:11.50px;color:#000;font-weight:400;white-space:nowrap;letter-spacing:0.2px;width:60.51999999999998px;text-align:center;-webkit-text-stroke:0.15px;">365</div>
<div style="position:absolute;left:662.46px;top:114.65px;font-size:10px;line-height:11.50px;color:#000;font-weight:400;white-space:nowrap;letter-spacing:0.2px;width:60.51999999999998px;text-align:center;-webkit-text-stroke:0.15px;">1<span style="margin:0 1.1px">/</span>1<span style="margin:0 1.1px">/</span>22</div>
<div style="position:absolute;left:662.46px;top:129.30px;font-size:10px;line-height:11.50px;color:#000;font-weight:400;white-space:nowrap;letter-spacing:0.2px;width:60.51999999999998px;text-align:center;-webkit-text-stroke:0.15px;">31<span style="margin:0 1.1px">/</span>12<span style="margin:0 1.1px">/</span>22</div>
<div style="position:absolute;left:662.46px;top:143.95px;font-size:10px;line-height:11.50px;color:#000;font-weight:400;white-space:nowrap;letter-spacing:0.2px;width:60.51999999999998px;text-align:center;-webkit-text-stroke:0.15px;">2022</div>
<div style="position:absolute;left:662.46px;top:158.60px;font-size:10px;line-height:11.50px;color:#000;font-weight:400;white-space:nowrap;letter-spacing:0.2px;width:60.51999999999998px;text-align:center;-webkit-text-stroke:0.15px;">365</div>
<div style="position:absolute;left:722.98px;top:114.65px;font-size:10px;line-height:11.50px;color:#000;font-weight:400;white-space:nowrap;letter-spacing:0.2px;width:60.520000000000095px;text-align:center;-webkit-text-stroke:0.15px;">1<span style="margin:0 1.1px">/</span>1<span style="margin:0 1.1px">/</span>23</div>
<div style="position:absolute;left:722.98px;top:129.30px;font-size:10px;line-height:11.50px;color:#000;font-weight:400;white-space:nowrap;letter-spacing:0.2px;width:60.520000000000095px;text-align:center;-webkit-text-stroke:0.15px;">31<span style="margin:0 1.1px">/</span>12<span style="margin:0 1.1px">/</span>23</div>
<div style="position:absolute;left:722.98px;top:143.95px;font-size:10px;line-height:11.50px;color:#000;font-weight:400;white-space:nowrap;letter-spacing:0.2px;width:60.520000000000095px;text-align:center;-webkit-text-stroke:0.15px;">2023</div>
<div style="position:absolute;left:722.98px;top:158.60px;font-size:10px;line-height:11.50px;color:#000;font-weight:400;white-space:nowrap;letter-spacing:0.2px;width:60.520000000000095px;text-align:center;-webkit-text-stroke:0.15px;">365</div>
<div style="position:absolute;left:783.5000000000001px;top:114.65px;font-size:10px;line-height:11.50px;color:#000;font-weight:400;white-space:nowrap;letter-spacing:0.2px;width:60.51999999999998px;text-align:center;-webkit-text-stroke:0.15px;">1<span style="margin:0 1.1px">/</span>1<span style="margin:0 1.1px">/</span>24</div>
<div style="position:absolute;left:783.5000000000001px;top:129.30px;font-size:10px;line-height:11.50px;color:#000;font-weight:400;white-space:nowrap;letter-spacing:0.2px;width:60.51999999999998px;text-align:center;-webkit-text-stroke:0.15px;">31<span style="margin:0 1.1px">/</span>12<span style="margin:0 1.1px">/</span>24</div>
<div style="position:absolute;left:783.5000000000001px;top:143.95px;font-size:10px;line-height:11.50px;color:#000;font-weight:400;white-space:nowrap;letter-spacing:0.2px;width:60.51999999999998px;text-align:center;-webkit-text-stroke:0.15px;">2024</div>
<div style="position:absolute;left:783.5000000000001px;top:158.60px;font-size:10px;line-height:11.50px;color:#000;font-weight:400;white-space:nowrap;letter-spacing:0.2px;width:60.51999999999998px;text-align:center;-webkit-text-stroke:0.15px;">366</div>
<div style="position:absolute;left:844.0200000000001px;top:114.65px;font-size:10px;line-height:11.50px;color:#000;font-weight:400;white-space:nowrap;letter-spacing:0.2px;width:60.51999999999998px;text-align:center;-webkit-text-stroke:0.15px;">1<span style="margin:0 1.1px">/</span>1<span style="margin:0 1.1px">/</span>25</div>
<div style="position:absolute;left:844.0200000000001px;top:129.30px;font-size:10px;line-height:11.50px;color:#000;font-weight:400;white-space:nowrap;letter-spacing:0.2px;width:60.51999999999998px;text-align:center;-webkit-text-stroke:0.15px;">31<span style="margin:0 1.1px">/</span>12<span style="margin:0 1.1px">/</span>25</div>
<div style="position:absolute;left:844.0200000000001px;top:143.95px;font-size:10px;line-height:11.50px;color:#000;font-weight:400;white-space:nowrap;letter-spacing:0.2px;width:60.51999999999998px;text-align:center;-webkit-text-stroke:0.15px;">2025</div>
<div style="position:absolute;left:844.0200000000001px;top:158.60px;font-size:10px;line-height:11.50px;color:#000;font-weight:400;white-space:nowrap;letter-spacing:0.2px;width:60.51999999999998px;text-align:center;-webkit-text-stroke:0.15px;">365</div>
<div style="position:absolute;left:904.5400000000001px;top:114.65px;font-size:10px;line-height:11.50px;color:#000;font-weight:400;white-space:nowrap;letter-spacing:0.2px;width:60.51999999999998px;text-align:center;-webkit-text-stroke:0.15px;">1<span style="margin:0 1.1px">/</span>1<span style="margin:0 1.1px">/</span>26</div>
<div style="position:absolute;left:904.5400000000001px;top:129.30px;font-size:10px;line-height:11.50px;color:#000;font-weight:400;white-space:nowrap;letter-spacing:0.2px;width:60.51999999999998px;text-align:center;-webkit-text-stroke:0.15px;">31<span style="margin:0 1.1px">/</span>12<span style="margin:0 1.1px">/</span>26</div>
<div style="position:absolute;left:904.5400000000001px;top:143.95px;font-size:10px;line-height:11.50px;color:#000;font-weight:400;white-space:nowrap;letter-spacing:0.2px;width:60.51999999999998px;text-align:center;-webkit-text-stroke:0.15px;">2026</div>
<div style="position:absolute;left:904.5400000000001px;top:158.60px;font-size:10px;line-height:11.50px;color:#000;font-weight:400;white-space:nowrap;letter-spacing:0.2px;width:60.51999999999998px;text-align:center;-webkit-text-stroke:0.15px;">365</div>
<div style="position:absolute;left:965.0600000000001px;top:114.65px;font-size:10px;line-height:11.50px;color:#000;font-weight:400;white-space:nowrap;letter-spacing:0.2px;width:60.51999999999998px;text-align:center;-webkit-text-stroke:0.15px;">1<span style="margin:0 1.1px">/</span>1<span style="margin:0 1.1px">/</span>27</div>
<div style="position:absolute;left:965.0600000000001px;top:129.30px;font-size:10px;line-height:11.50px;color:#000;font-weight:400;white-space:nowrap;letter-spacing:0.2px;width:60.51999999999998px;text-align:center;-webkit-text-stroke:0.15px;">31<span style="margin:0 1.1px">/</span>12<span style="margin:0 1.1px">/</span>27</div>
<div style="position:absolute;left:965.0600000000001px;top:143.95px;font-size:10px;line-height:11.50px;color:#000;font-weight:400;white-space:nowrap;letter-spacing:0.2px;width:60.51999999999998px;text-align:center;-webkit-text-stroke:0.15px;">2027</div>
<div style="position:absolute;left:965.0600000000001px;top:158.60px;font-size:10px;line-height:11.50px;color:#000;font-weight:400;white-space:nowrap;letter-spacing:0.2px;width:60.51999999999998px;text-align:center;-webkit-text-stroke:0.15px;">365</div>
<div style="position:absolute;left:1025.58px;top:114.65px;font-size:10px;line-height:11.50px;color:#000;font-weight:400;white-space:nowrap;letter-spacing:0.2px;width:60.51999999999998px;text-align:center;-webkit-text-stroke:0.15px;">1<span style="margin:0 1.1px">/</span>1<span style="margin:0 1.1px">/</span>28</div>
<div style="position:absolute;left:1025.58px;top:129.30px;font-size:10px;line-height:11.50px;color:#000;font-weight:400;white-space:nowrap;letter-spacing:0.2px;width:60.51999999999998px;text-align:center;-webkit-text-stroke:0.15px;">31<span style="margin:0 1.1px">/</span>12<span style="margin:0 1.1px">/</span>28</div>
<div style="position:absolute;left:1025.58px;top:143.95px;font-size:10px;line-height:11.50px;color:#000;font-weight:400;white-space:nowrap;letter-spacing:0.2px;width:60.51999999999998px;text-align:center;-webkit-text-stroke:0.15px;">2028</div>
<div style="position:absolute;left:1025.58px;top:158.60px;font-size:10px;line-height:11.50px;color:#000;font-weight:400;white-space:nowrap;letter-spacing:0.2px;width:60.51999999999998px;text-align:center;-webkit-text-stroke:0.15px;">366</div>
<div style="position:absolute;left:1086.1px;top:114.65px;font-size:10px;line-height:11.50px;color:#000;font-weight:400;white-space:nowrap;letter-spacing:0.2px;width:60.51999999999998px;text-align:center;-webkit-text-stroke:0.15px;">1<span style="margin:0 1.1px">/</span>1<span style="margin:0 1.1px">/</span>29</div>
<div style="position:absolute;left:1086.1px;top:129.30px;font-size:10px;line-height:11.50px;color:#000;font-weight:400;white-space:nowrap;letter-spacing:0.2px;width:60.51999999999998px;text-align:center;-webkit-text-stroke:0.15px;">31<span style="margin:0 1.1px">/</span>12<span style="margin:0 1.1px">/</span>29</div>
<div style="position:absolute;left:1086.1px;top:143.95px;font-size:10px;line-height:11.50px;color:#000;font-weight:400;white-space:nowrap;letter-spacing:0.2px;width:60.51999999999998px;text-align:center;-webkit-text-stroke:0.15px;">2029</div>
<div style="position:absolute;left:1086.1px;top:158.60px;font-size:10px;line-height:11.50px;color:#000;font-weight:400;white-space:nowrap;letter-spacing:0.2px;width:60.51999999999998px;text-align:center;-webkit-text-stroke:0.15px;">365</div>
<div style="position:absolute;left:1146.62px;top:114.65px;font-size:10px;line-height:11.50px;color:#000;font-weight:400;white-space:nowrap;letter-spacing:0.2px;width:60.51999999999998px;text-align:center;-webkit-text-stroke:0.15px;">1<span style="margin:0 1.1px">/</span>1<span style="margin:0 1.1px">/</span>30</div>
<div style="position:absolute;left:1146.62px;top:129.30px;font-size:10px;line-height:11.50px;color:#000;font-weight:400;white-space:nowrap;letter-spacing:0.2px;width:60.51999999999998px;text-align:center;-webkit-text-stroke:0.15px;">31<span style="margin:0 1.1px">/</span>12<span style="margin:0 1.1px">/</span>30</div>
<div style="position:absolute;left:1146.62px;top:143.95px;font-size:10px;line-height:11.50px;color:#000;font-weight:400;white-space:nowrap;letter-spacing:0.2px;width:60.51999999999998px;text-align:center;-webkit-text-stroke:0.15px;">2030</div>
<div style="position:absolute;left:1146.62px;top:158.60px;font-size:10px;line-height:11.50px;color:#000;font-weight:400;white-space:nowrap;letter-spacing:0.2px;width:60.51999999999998px;text-align:center;-webkit-text-stroke:0.15px;">365</div>
<div style="position:absolute;left:1207.1399999999999px;top:114.65px;font-size:10px;line-height:11.50px;color:#000;font-weight:400;white-space:nowrap;letter-spacing:0.2px;width:60.51999999999998px;text-align:center;-webkit-text-stroke:0.15px;">1<span style="margin:0 1.1px">/</span>1<span style="margin:0 1.1px">/</span>31</div>
<div style="position:absolute;left:1207.1399999999999px;top:129.30px;font-size:10px;line-height:11.50px;color:#000;font-weight:400;white-space:nowrap;letter-spacing:0.2px;width:60.51999999999998px;text-align:center;-webkit-text-stroke:0.15px;">31<span style="margin:0 1.1px">/</span>12<span style="margin:0 1.1px">/</span>31</div>
<div style="position:absolute;left:1207.1399999999999px;top:143.95px;font-size:10px;line-height:11.50px;color:#000;font-weight:400;white-space:nowrap;letter-spacing:0.2px;width:60.51999999999998px;text-align:center;-webkit-text-stroke:0.15px;">2031</div>
<div style="position:absolute;left:1207.1399999999999px;top:158.60px;font-size:10px;line-height:11.50px;color:#000;font-weight:400;white-space:nowrap;letter-spacing:0.2px;width:60.51999999999998px;text-align:center;-webkit-text-stroke:0.15px;">365</div>
<div style="position:absolute;left:1267.6599999999999px;top:114.65px;font-size:10px;line-height:11.50px;color:#000;font-weight:400;white-space:nowrap;letter-spacing:0.2px;width:60.539999999999964px;text-align:center;-webkit-text-stroke:0.15px;">1<span style="margin:0 1.1px">/</span>1<span style="margin:0 1.1px">/</span>32</div>
<div style="position:absolute;left:1267.6599999999999px;top:129.30px;font-size:10px;line-height:11.50px;color:#000;font-weight:400;white-space:nowrap;letter-spacing:0.2px;width:60.539999999999964px;text-align:center;-webkit-text-stroke:0.15px;">31<span style="margin:0 1.1px">/</span>12<span style="margin:0 1.1px">/</span>32</div>
<div style="position:absolute;left:1267.6599999999999px;top:143.95px;font-size:10px;line-height:11.50px;color:#000;font-weight:400;white-space:nowrap;letter-spacing:0.2px;width:60.539999999999964px;text-align:center;-webkit-text-stroke:0.15px;">2032</div>
<div style="position:absolute;left:1267.6599999999999px;top:158.60px;font-size:10px;line-height:11.50px;color:#000;font-weight:400;white-space:nowrap;letter-spacing:0.2px;width:60.539999999999964px;text-align:center;-webkit-text-stroke:0.15px;">366</div>
<div style="position:absolute;left:722.4px;top:97.55000000000001px;width:1px;height:73.25px;background:repeating-linear-gradient(to bottom,#555 0,#555 1px,transparent 1px,transparent 2px);"></div>
<div style="position:absolute;left:58.6px;top:173.25px;font-size:10px;line-height:11.50px;color:#000;font-weight:400;white-space:nowrap;-webkit-text-stroke:0.15px;">x</div>
<div style="position:absolute;left:71.2px;top:170.8px;width:1256.8999999999999px;height:14.65px;background:#1682ad;"></div>
<div style="position:absolute;left:74.5px;top:173.25px;font-size:10px;line-height:11.50px;color:#fff;font-weight:700;white-space:nowrap;">Balance Sheet Turnover</div>
<div style="position:absolute;left:58.6px;top:202.55px;font-size:10px;line-height:11.50px;color:#000;font-weight:400;white-space:nowrap;-webkit-text-stroke:0.15px;">x</div>
<div style="position:absolute;left:71.2px;top:200.10000000000002px;width:1256.8999999999999px;height:15.35px;background:#d9d9d9;"></div>
<div style="position:absolute;left:74.7px;top:202.55px;font-size:10px;line-height:11.50px;color:#000;font-weight:700;white-space:nowrap;">Working Capital</div>
<div style="position:absolute;left:58.6px;top:363.70px;font-size:10px;line-height:11.50px;color:#000;font-weight:400;white-space:nowrap;-webkit-text-stroke:0.15px;">x</div>
<div style="position:absolute;left:71.2px;top:361.25px;width:1256.8999999999999px;height:15.35px;background:#d9d9d9;"></div>
<div style="position:absolute;left:74.7px;top:363.70px;font-size:10px;line-height:11.50px;color:#000;font-weight:700;white-space:nowrap;">Other Balance Sheet Accounts</div>
<div style="position:absolute;left:722.9px;top:302.65px;width:60.5px;height:43.95px;background:#ffffcc;"></div>
<div style="position:absolute;left:722.9px;top:302.65px;width:60.5px;height:1px;background:repeating-linear-gradient(to right,#333 0,#333 1px,transparent 1px,transparent 2px);"></div>
<div style="position:absolute;left:722.9px;top:316.79999999999995px;width:60.5px;height:1px;background:repeating-linear-gradient(to right,#333 0,#333 1px,transparent 1px,transparent 2px);"></div>
<div style="position:absolute;left:722.9px;top:331.44999999999993px;width:60.5px;height:1px;background:repeating-linear-gradient(to right,#333 0,#333 1px,transparent 1px,transparent 2px);"></div>
<div style="position:absolute;left:722.9px;top:346.1px;width:60.5px;height:1px;background:repeating-linear-gradient(to right,#333 0,#333 1px,transparent 1px,transparent 2px);"></div>
<div style="position:absolute;left:783.0px;top:302.65px;width:1px;height:43.950000000000045px;background:repeating-linear-gradient(to bottom,#555 0,#555 1px,transparent 1px,transparent 2px);"></div>
<div style="position:absolute;left:74.7px;top:217.20px;font-size:10px;line-height:11.50px;color:#000;font-weight:400;white-space:nowrap;letter-spacing:0.8px;-webkit-text-stroke:0.15px;">Accounts Receivables</div>
<div style="position:absolute;left:334.79999999999995px;top:217.20px;font-size:10px;line-height:11.50px;color:#000;font-weight:400;white-space:nowrap;letter-spacing:0.8px;width:69.0px;text-align:center;-webkit-text-stroke:0.15px;">$000's</div>
<div style="position:absolute;left:339.02000000000004px;top:217.20px;font-size:10px;line-height:11.50px;color:#00b050;font-weight:400;white-space:nowrap;letter-spacing:0.2px;width:200px;text-align:right;-webkit-text-stroke:0.15px;">2,026</div>
<div style="position:absolute;left:399.54px;top:217.20px;font-size:10px;line-height:11.50px;color:#00b050;font-weight:400;white-space:nowrap;letter-spacing:0.2px;width:200px;text-align:right;-webkit-text-stroke:0.15px;">2,618</div>
<div style="position:absolute;left:460.06px;top:217.20px;font-size:10px;line-height:11.50px;color:#00b050;font-weight:400;white-space:nowrap;letter-spacing:0.2px;width:200px;text-align:right;-webkit-text-stroke:0.15px;">2,917</div>
<div style="position:absolute;left:520.58px;top:217.20px;font-size:10px;line-height:11.50px;color:#00b050;font-weight:400;white-space:nowrap;letter-spacing:0.2px;width:200px;text-align:right;-webkit-text-stroke:0.15px;">3,906</div>
<div style="position:absolute;left:581.1000000000001px;top:217.20px;font-size:10px;line-height:11.50px;color:#000;font-weight:400;white-space:nowrap;letter-spacing:0.2px;width:200px;text-align:right;-webkit-text-stroke:0.15px;">4,222</div>
<div style="position:absolute;left:641.6200000000001px;top:217.20px;font-size:10px;line-height:11.50px;color:#000;font-weight:400;white-space:nowrap;letter-spacing:0.2px;width:200px;text-align:right;-webkit-text-stroke:0.15px;">4,910</div>
<div style="position:absolute;left:702.1400000000001px;top:217.20px;font-size:10px;line-height:11.50px;color:#000;font-weight:400;white-space:nowrap;letter-spacing:0.2px;width:200px;text-align:right;-webkit-text-stroke:0.15px;">5,745</div>
<div style="position:absolute;left:762.6600000000001px;top:217.20px;font-size:10px;line-height:11.50px;color:#000;font-weight:400;white-space:nowrap;letter-spacing:0.2px;width:200px;text-align:right;-webkit-text-stroke:0.15px;">6,708</div>
<div style="position:absolute;left:823.1800000000001px;top:217.20px;font-size:10px;line-height:11.50px;color:#000;font-weight:400;white-space:nowrap;letter-spacing:0.2px;width:200px;text-align:right;-webkit-text-stroke:0.15px;">7,837</div>
<div style="position:absolute;left:883.7px;top:217.20px;font-size:10px;line-height:11.50px;color:#000;font-weight:400;white-space:nowrap;letter-spacing:0.2px;width:200px;text-align:right;-webkit-text-stroke:0.15px;">9,138</div>
<div style="position:absolute;left:944.22px;top:217.20px;font-size:10px;line-height:11.50px;color:#000;font-weight:400;white-space:nowrap;letter-spacing:0.2px;width:200px;text-align:right;-webkit-text-stroke:0.15px;">10,720</div>
<div style="position:absolute;left:1004.74px;top:217.20px;font-size:10px;line-height:11.50px;color:#000;font-weight:400;white-space:nowrap;letter-spacing:0.2px;width:200px;text-align:right;-webkit-text-stroke:0.15px;">12,548</div>
<div style="position:absolute;left:1065.26px;top:217.20px;font-size:10px;line-height:11.50px;color:#000;font-weight:400;white-space:nowrap;letter-spacing:0.2px;width:200px;text-align:right;-webkit-text-stroke:0.15px;">14,698</div>
<div style="position:absolute;left:1125.8px;top:217.20px;font-size:10px;line-height:11.50px;color:#000;font-weight:400;white-space:nowrap;letter-spacing:0.2px;width:200px;text-align:right;-webkit-text-stroke:0.15px;">17,179</div>
<div style="position:absolute;left:74.7px;top:231.85px;font-size:10px;line-height:11.50px;color:#000;font-weight:400;white-space:nowrap;letter-spacing:0.8px;-webkit-text-stroke:0.15px;">Inventories</div>
<div style="position:absolute;left:334.79999999999995px;top:231.85px;font-size:10px;line-height:11.50px;color:#000;font-weight:400;white-space:nowrap;letter-spacing:0.8px;width:69.0px;text-align:center;-webkit-text-stroke:0.15px;">$000's</div>
<div style="position:absolute;left:339.02000000000004px;top:231.85px;font-size:10px;line-height:11.50px;color:#00b050;font-weight:400;white-space:nowrap;letter-spacing:0.2px;width:200px;text-align:right;-webkit-text-stroke:0.15px;">47</div>
<div style="position:absolute;left:399.54px;top:231.85px;font-size:10px;line-height:11.50px;color:#00b050;font-weight:400;white-space:nowrap;letter-spacing:0.2px;width:200px;text-align:right;-webkit-text-stroke:0.15px;">88</div>
<div style="position:absolute;left:460.06px;top:231.85px;font-size:10px;line-height:11.50px;color:#00b050;font-weight:400;white-space:nowrap;letter-spacing:0.2px;width:200px;text-align:right;-webkit-text-stroke:0.15px;">117</div>
<div style="position:absolute;left:520.58px;top:231.85px;font-size:10px;line-height:11.50px;color:#00b050;font-weight:400;white-space:nowrap;letter-spacing:0.2px;width:200px;text-align:right;-webkit-text-stroke:0.15px;">113</div>
<div style="position:absolute;left:581.1000000000001px;top:231.85px;font-size:10px;line-height:11.50px;color:#000;font-weight:400;white-space:nowrap;letter-spacing:0.2px;width:200px;text-align:right;-webkit-text-stroke:0.15px;">106</div>
<div style="position:absolute;left:641.6200000000001px;top:231.85px;font-size:10px;line-height:11.50px;color:#000;font-weight:400;white-space:nowrap;letter-spacing:0.2px;width:200px;text-align:right;-webkit-text-stroke:0.15px;">115</div>
<div style="position:absolute;left:702.1400000000001px;top:231.85px;font-size:10px;line-height:11.50px;color:#000;font-weight:400;white-space:nowrap;letter-spacing:0.2px;width:200px;text-align:right;-webkit-text-stroke:0.15px;">125</div>
<div style="position:absolute;left:762.6600000000001px;top:231.85px;font-size:10px;line-height:11.50px;color:#000;font-weight:400;white-space:nowrap;letter-spacing:0.2px;width:200px;text-align:right;-webkit-text-stroke:0.15px;">136</div>
<div style="position:absolute;left:823.1800000000001px;top:231.85px;font-size:10px;line-height:11.50px;color:#000;font-weight:400;white-space:nowrap;letter-spacing:0.2px;width:200px;text-align:right;-webkit-text-stroke:0.15px;">148</div>
<div style="position:absolute;left:883.7px;top:231.85px;font-size:10px;line-height:11.50px;color:#000;font-weight:400;white-space:nowrap;letter-spacing:0.2px;width:200px;text-align:right;-webkit-text-stroke:0.15px;">160</div>
<div style="position:absolute;left:944.22px;top:231.85px;font-size:10px;line-height:11.50px;color:#000;font-weight:400;white-space:nowrap;letter-spacing:0.2px;width:200px;text-align:right;-webkit-text-stroke:0.15px;">174</div>
<div style="position:absolute;left:1004.74px;top:231.85px;font-size:10px;line-height:11.50px;color:#000;font-weight:400;white-space:nowrap;letter-spacing:0.2px;width:200px;text-align:right;-webkit-text-stroke:0.15px;">188</div>
<div style="position:absolute;left:1065.26px;top:231.85px;font-size:10px;line-height:11.50px;color:#000;font-weight:400;white-space:nowrap;letter-spacing:0.2px;width:200px;text-align:right;-webkit-text-stroke:0.15px;">204</div>
<div style="position:absolute;left:1125.8px;top:231.85px;font-size:10px;line-height:11.50px;color:#000;font-weight:400;white-space:nowrap;letter-spacing:0.2px;width:200px;text-align:right;-webkit-text-stroke:0.15px;">221</div>
<div style="position:absolute;left:74.7px;top:246.50px;font-size:10px;line-height:11.50px;color:#000;font-weight:400;white-space:nowrap;letter-spacing:0.8px;-webkit-text-stroke:0.15px;">Accounts Payables</div>
<div style="position:absolute;left:334.79999999999995px;top:246.50px;font-size:10px;line-height:11.50px;color:#000;font-weight:400;white-space:nowrap;letter-spacing:0.8px;width:69.0px;text-align:center;-webkit-text-stroke:0.15px;">$000's</div>
<div style="position:absolute;left:339.02000000000004px;top:246.50px;font-size:10px;line-height:11.50px;color:#00b050;font-weight:400;white-space:nowrap;letter-spacing:0.2px;width:200px;text-align:right;-webkit-text-stroke:0.15px;">551</div>
<div style="position:absolute;left:399.54px;top:246.50px;font-size:10px;line-height:11.50px;color:#00b050;font-weight:400;white-space:nowrap;letter-spacing:0.2px;width:200px;text-align:right;-webkit-text-stroke:0.15px;">939</div>
<div style="position:absolute;left:460.06px;top:246.50px;font-size:10px;line-height:11.50px;color:#00b050;font-weight:400;white-space:nowrap;letter-spacing:0.2px;width:200px;text-align:right;-webkit-text-stroke:0.15px;">1,361</div>
<div style="position:absolute;left:520.58px;top:246.50px;font-size:10px;line-height:11.50px;color:#00b050;font-weight:400;white-space:nowrap;letter-spacing:0.2px;width:200px;text-align:right;-webkit-text-stroke:0.15px;">2,183</div>
<div style="position:absolute;left:581.1000000000001px;top:246.50px;font-size:10px;line-height:11.50px;color:#000;font-weight:400;white-space:nowrap;letter-spacing:0.2px;width:200px;text-align:right;-webkit-text-stroke:0.15px;">1,391</div>
<div style="position:absolute;left:641.6200000000001px;top:246.50px;font-size:10px;line-height:11.50px;color:#000;font-weight:400;white-space:nowrap;letter-spacing:0.2px;width:200px;text-align:right;-webkit-text-stroke:0.15px;">1,511</div>
<div style="position:absolute;left:702.1400000000001px;top:246.50px;font-size:10px;line-height:11.50px;color:#000;font-weight:400;white-space:nowrap;letter-spacing:0.2px;width:200px;text-align:right;-webkit-text-stroke:0.15px;">1,649</div>
<div style="position:absolute;left:762.6600000000001px;top:246.50px;font-size:10px;line-height:11.50px;color:#000;font-weight:400;white-space:nowrap;letter-spacing:0.2px;width:200px;text-align:right;-webkit-text-stroke:0.15px;">1,794</div>
<div style="position:absolute;left:823.1800000000001px;top:246.50px;font-size:10px;line-height:11.50px;color:#000;font-weight:400;white-space:nowrap;letter-spacing:0.2px;width:200px;text-align:right;-webkit-text-stroke:0.15px;">1,952</div>
<div style="position:absolute;left:883.7px;top:246.50px;font-size:10px;line-height:11.50px;color:#000;font-weight:400;white-space:nowrap;letter-spacing:0.2px;width:200px;text-align:right;-webkit-text-stroke:0.15px;">2,110</div>
<div style="position:absolute;left:944.22px;top:246.50px;font-size:10px;line-height:11.50px;color:#000;font-weight:400;white-space:nowrap;letter-spacing:0.2px;width:200px;text-align:right;-webkit-text-stroke:0.15px;">2,291</div>
<div style="position:absolute;left:1004.74px;top:246.50px;font-size:10px;line-height:11.50px;color:#000;font-weight:400;white-space:nowrap;letter-spacing:0.2px;width:200px;text-align:right;-webkit-text-stroke:0.15px;">2,479</div>
<div style="position:absolute;left:1065.26px;top:246.50px;font-size:10px;line-height:11.50px;color:#000;font-weight:400;white-space:nowrap;letter-spacing:0.2px;width:200px;text-align:right;-webkit-text-stroke:0.15px;">2,691</div>
<div style="position:absolute;left:1125.8px;top:246.50px;font-size:10px;line-height:11.50px;color:#000;font-weight:400;white-space:nowrap;letter-spacing:0.2px;width:200px;text-align:right;-webkit-text-stroke:0.15px;">2,916</div>
<div style="position:absolute;left:74.7px;top:261.15px;font-size:10px;line-height:11.50px;color:#000;font-weight:700;white-space:nowrap;">Working Capital</div>
<div style="position:absolute;left:334.5px;top:261.15px;font-size:10px;line-height:11.50px;color:#000;font-weight:700;white-space:nowrap;letter-spacing:0.2px;width:69.0px;text-align:center;">$000's</div>
<div style="position:absolute;left:339.02000000000004px;top:261.15px;font-size:10px;line-height:11.50px;color:#000;font-weight:700;white-space:nowrap;letter-spacing:0.2px;width:200px;text-align:right;">1,521</div>
<div style="position:absolute;left:399.54px;top:261.15px;font-size:10px;line-height:11.50px;color:#000;font-weight:700;white-space:nowrap;letter-spacing:0.2px;width:200px;text-align:right;">1,767</div>
<div style="position:absolute;left:460.06px;top:261.15px;font-size:10px;line-height:11.50px;color:#000;font-weight:700;white-space:nowrap;letter-spacing:0.2px;width:200px;text-align:right;">1,672</div>
<div style="position:absolute;left:520.58px;top:261.15px;font-size:10px;line-height:11.50px;color:#000;font-weight:700;white-space:nowrap;letter-spacing:0.2px;width:200px;text-align:right;">1,836</div>
<div style="position:absolute;left:581.1000000000001px;top:261.15px;font-size:10px;line-height:11.50px;color:#000;font-weight:700;white-space:nowrap;letter-spacing:0.2px;width:200px;text-align:right;">2,937</div>
<div style="position:absolute;left:641.6200000000001px;top:261.15px;font-size:10px;line-height:11.50px;color:#000;font-weight:700;white-space:nowrap;letter-spacing:0.2px;width:200px;text-align:right;">3,513</div>
<div style="position:absolute;left:702.1400000000001px;top:261.15px;font-size:10px;line-height:11.50px;color:#000;font-weight:700;white-space:nowrap;letter-spacing:0.2px;width:200px;text-align:right;">4,221</div>
<div style="position:absolute;left:762.6600000000001px;top:261.15px;font-size:10px;line-height:11.50px;color:#000;font-weight:700;white-space:nowrap;letter-spacing:0.2px;width:200px;text-align:right;">5,050</div>
<div style="position:absolute;left:823.1800000000001px;top:261.15px;font-size:10px;line-height:11.50px;color:#000;font-weight:700;white-space:nowrap;letter-spacing:0.2px;width:200px;text-align:right;">6,034</div>
<div style="position:absolute;left:883.7px;top:261.15px;font-size:10px;line-height:11.50px;color:#000;font-weight:700;white-space:nowrap;letter-spacing:0.2px;width:200px;text-align:right;">7,189</div>
<div style="position:absolute;left:944.22px;top:261.15px;font-size:10px;line-height:11.50px;color:#000;font-weight:700;white-space:nowrap;letter-spacing:0.2px;width:200px;text-align:right;">8,603</div>
<div style="position:absolute;left:1004.74px;top:261.15px;font-size:10px;line-height:11.50px;color:#000;font-weight:700;white-space:nowrap;letter-spacing:0.2px;width:200px;text-align:right;">10,258</div>
<div style="position:absolute;left:1065.26px;top:261.15px;font-size:10px;line-height:11.50px;color:#000;font-weight:700;white-space:nowrap;letter-spacing:0.2px;width:200px;text-align:right;">12,211</div>
<div style="position:absolute;left:1125.8px;top:261.15px;font-size:10px;line-height:11.50px;color:#000;font-weight:700;white-space:nowrap;letter-spacing:0.2px;width:200px;text-align:right;">14,483</div>
<div style="position:absolute;left:74.7px;top:275.80px;font-size:10px;line-height:11.50px;color:#000;font-weight:700;white-space:nowrap;">Change in WK</div>
<div style="position:absolute;left:334.5px;top:275.80px;font-size:10px;line-height:11.50px;color:#000;font-weight:700;white-space:nowrap;letter-spacing:0.2px;width:69.0px;text-align:center;">$000's</div>
<div style="position:absolute;left:399.54px;top:275.80px;font-size:10px;line-height:11.50px;color:#000;font-weight:700;white-space:nowrap;letter-spacing:0.2px;width:200px;text-align:right;">-245</div>
<div style="position:absolute;left:460.06px;top:275.80px;font-size:10px;line-height:11.50px;color:#000;font-weight:700;white-space:nowrap;letter-spacing:0.2px;width:200px;text-align:right;">94</div>
<div style="position:absolute;left:520.58px;top:275.80px;font-size:10px;line-height:11.50px;color:#000;font-weight:700;white-space:nowrap;letter-spacing:0.2px;width:200px;text-align:right;">-163</div>
<div style="position:absolute;left:581.1000000000001px;top:275.80px;font-size:10px;line-height:11.50px;color:#000;font-weight:700;white-space:nowrap;letter-spacing:0.2px;width:200px;text-align:right;">-1,101</div>
<div style="position:absolute;left:641.6200000000001px;top:275.80px;font-size:10px;line-height:11.50px;color:#000;font-weight:700;white-space:nowrap;letter-spacing:0.2px;width:200px;text-align:right;">-576</div>
<div style="position:absolute;left:702.1400000000001px;top:275.80px;font-size:10px;line-height:11.50px;color:#000;font-weight:700;white-space:nowrap;letter-spacing:0.2px;width:200px;text-align:right;">-708</div>
<div style="position:absolute;left:762.6600000000001px;top:275.80px;font-size:10px;line-height:11.50px;color:#000;font-weight:700;white-space:nowrap;letter-spacing:0.2px;width:200px;text-align:right;">-828</div>
<div style="position:absolute;left:823.1800000000001px;top:275.80px;font-size:10px;line-height:11.50px;color:#000;font-weight:700;white-space:nowrap;letter-spacing:0.2px;width:200px;text-align:right;">-984</div>
<div style="position:absolute;left:883.7px;top:275.80px;font-size:10px;line-height:11.50px;color:#000;font-weight:700;white-space:nowrap;letter-spacing:0.2px;width:200px;text-align:right;">-1,155</div>
<div style="position:absolute;left:944.22px;top:275.80px;font-size:10px;line-height:11.50px;color:#000;font-weight:700;white-space:nowrap;letter-spacing:0.2px;width:200px;text-align:right;">-1,414</div>
<div style="position:absolute;left:1004.74px;top:275.80px;font-size:10px;line-height:11.50px;color:#000;font-weight:700;white-space:nowrap;letter-spacing:0.2px;width:200px;text-align:right;">-1,655</div>
<div style="position:absolute;left:1065.26px;top:275.80px;font-size:10px;line-height:11.50px;color:#000;font-weight:700;white-space:nowrap;letter-spacing:0.2px;width:200px;text-align:right;">-1,953</div>
<div style="position:absolute;left:1125.8px;top:275.80px;font-size:10px;line-height:11.50px;color:#000;font-weight:700;white-space:nowrap;letter-spacing:0.2px;width:200px;text-align:right;">-2,272</div>
<div style="position:absolute;left:74.7px;top:305.10px;font-size:10px;line-height:11.50px;color:#000;font-weight:400;white-space:nowrap;letter-spacing:0.8px;-webkit-text-stroke:0.15px;">DSO</div>
<div style="position:absolute;left:334.79999999999995px;top:305.10px;font-size:10px;line-height:11.50px;color:#000;font-weight:400;white-space:nowrap;letter-spacing:0.8px;width:69.0px;text-align:center;-webkit-text-stroke:0.15px;">Days</div>
<div style="position:absolute;left:335.2200000000001px;top:305.10px;font-size:10px;line-height:11.50px;color:#000;font-weight:400;white-space:nowrap;letter-spacing:0.2px;width:200px;text-align:right;-webkit-text-stroke:0.15px;">60.8</div>
<div style="position:absolute;left:395.74000000000007px;top:305.10px;font-size:10px;line-height:11.50px;color:#000;font-weight:400;white-space:nowrap;letter-spacing:0.2px;width:200px;text-align:right;-webkit-text-stroke:0.15px;">67.0</div>
<div style="position:absolute;left:456.26000000000005px;top:305.10px;font-size:10px;line-height:11.50px;color:#000;font-weight:400;white-space:nowrap;letter-spacing:0.2px;width:200px;text-align:right;-webkit-text-stroke:0.15px;">62.3</div>
<div style="position:absolute;left:516.7800000000001px;top:305.10px;font-size:10px;line-height:11.50px;color:#000;font-weight:400;white-space:nowrap;letter-spacing:0.2px;width:200px;text-align:right;-webkit-text-stroke:0.15px;">70.2</div>
<div style="position:absolute;left:577.3000000000002px;top:305.10px;font-size:10px;line-height:11.50px;color:#000;font-weight:400;white-space:nowrap;letter-spacing:0.2px;width:200px;text-align:right;-webkit-text-stroke:0.15px;">65.1</div>
<div style="position:absolute;left:637.8200000000002px;top:305.10px;font-size:10px;line-height:11.50px;color:#000;font-weight:400;white-space:nowrap;letter-spacing:0.2px;width:200px;text-align:right;-webkit-text-stroke:0.15px;">65.1</div>
<div style="position:absolute;left:698.3400000000001px;top:305.10px;font-size:10px;line-height:11.50px;color:#000;font-weight:400;white-space:nowrap;letter-spacing:0.2px;width:200px;text-align:right;-webkit-text-stroke:0.15px;">65.1</div>
<div style="position:absolute;left:758.8600000000001px;top:305.10px;font-size:10px;line-height:11.50px;color:#000;font-weight:400;white-space:nowrap;letter-spacing:0.2px;width:200px;text-align:right;-webkit-text-stroke:0.15px;">65.1</div>
<div style="position:absolute;left:819.3800000000001px;top:305.10px;font-size:10px;line-height:11.50px;color:#000;font-weight:400;white-space:nowrap;letter-spacing:0.2px;width:200px;text-align:right;-webkit-text-stroke:0.15px;">65.1</div>
<div style="position:absolute;left:879.9000000000001px;top:305.10px;font-size:10px;line-height:11.50px;color:#000;font-weight:400;white-space:nowrap;letter-spacing:0.2px;width:200px;text-align:right;-webkit-text-stroke:0.15px;">65.1</div>
<div style="position:absolute;left:940.4200000000001px;top:305.10px;font-size:10px;line-height:11.50px;color:#000;font-weight:400;white-space:nowrap;letter-spacing:0.2px;width:200px;text-align:right;-webkit-text-stroke:0.15px;">65.1</div>
<div style="position:absolute;left:1000.94px;top:305.10px;font-size:10px;line-height:11.50px;color:#000;font-weight:400;white-space:nowrap;letter-spacing:0.2px;width:200px;text-align:right;-webkit-text-stroke:0.15px;">65.1</div>
<div style="position:absolute;left:1061.46px;top:305.10px;font-size:10px;line-height:11.50px;color:#000;font-weight:400;white-space:nowrap;letter-spacing:0.2px;width:200px;text-align:right;-webkit-text-stroke:0.15px;">65.1</div>
<div style="position:absolute;left:1122.0px;top:305.10px;font-size:10px;line-height:11.50px;color:#000;font-weight:400;white-space:nowrap;letter-spacing:0.2px;width:200px;text-align:right;-webkit-text-stroke:0.15px;">65.1</div>
<div style="position:absolute;left:74.7px;top:319.75px;font-size:10px;line-height:11.50px;color:#000;font-weight:400;white-space:nowrap;letter-spacing:0.8px;-webkit-text-stroke:0.15px;">DIO</div>
<div style="position:absolute;left:334.79999999999995px;top:319.75px;font-size:10px;line-height:11.50px;color:#000;font-weight:400;white-space:nowrap;letter-spacing:0.8px;width:69.0px;text-align:center;-webkit-text-stroke:0.15px;">Days</div>
<div style="position:absolute;left:335.2200000000001px;top:319.75px;font-size:10px;line-height:11.50px;color:#000;font-weight:400;white-space:nowrap;letter-spacing:0.2px;width:200px;text-align:right;-webkit-text-stroke:0.15px;">2.2</div>
<div style="position:absolute;left:395.74000000000007px;top:319.75px;font-size:10px;line-height:11.50px;color:#000;font-weight:400;white-space:nowrap;letter-spacing:0.2px;width:200px;text-align:right;-webkit-text-stroke:0.15px;">3.5</div>
<div style="position:absolute;left:456.26000000000005px;top:319.75px;font-size:10px;line-height:11.50px;color:#000;font-weight:400;white-space:nowrap;letter-spacing:0.2px;width:200px;text-align:right;-webkit-text-stroke:0.15px;">3.8</div>
<div style="position:absolute;left:516.7800000000001px;top:319.75px;font-size:10px;line-height:11.50px;color:#000;font-weight:400;white-space:nowrap;letter-spacing:0.2px;width:200px;text-align:right;-webkit-text-stroke:0.15px;">2.9</div>
<div style="position:absolute;left:577.3000000000002px;top:319.75px;font-size:10px;line-height:11.50px;color:#000;font-weight:400;white-space:nowrap;letter-spacing:0.2px;width:200px;text-align:right;-webkit-text-stroke:0.15px;">3.1</div>
<div style="position:absolute;left:637.8200000000002px;top:319.75px;font-size:10px;line-height:11.50px;color:#000;font-weight:400;white-space:nowrap;letter-spacing:0.2px;width:200px;text-align:right;-webkit-text-stroke:0.15px;">3.1</div>
<div style="position:absolute;left:698.3400000000001px;top:319.75px;font-size:10px;line-height:11.50px;color:#000;font-weight:400;white-space:nowrap;letter-spacing:0.2px;width:200px;text-align:right;-webkit-text-stroke:0.15px;">3.1</div>
<div style="position:absolute;left:758.8600000000001px;top:319.75px;font-size:10px;line-height:11.50px;color:#000;font-weight:400;white-space:nowrap;letter-spacing:0.2px;width:200px;text-align:right;-webkit-text-stroke:0.15px;">3.1</div>
<div style="position:absolute;left:819.3800000000001px;top:319.75px;font-size:10px;line-height:11.50px;color:#000;font-weight:400;white-space:nowrap;letter-spacing:0.2px;width:200px;text-align:right;-webkit-text-stroke:0.15px;">3.1</div>
<div style="position:absolute;left:879.9000000000001px;top:319.75px;font-size:10px;line-height:11.50px;color:#000;font-weight:400;white-space:nowrap;letter-spacing:0.2px;width:200px;text-align:right;-webkit-text-stroke:0.15px;">3.1</div>
<div style="position:absolute;left:940.4200000000001px;top:319.75px;font-size:10px;line-height:11.50px;color:#000;font-weight:400;white-space:nowrap;letter-spacing:0.2px;width:200px;text-align:right;-webkit-text-stroke:0.15px;">3.1</div>
<div style="position:absolute;left:1000.94px;top:319.75px;font-size:10px;line-height:11.50px;color:#000;font-weight:400;white-space:nowrap;letter-spacing:0.2px;width:200px;text-align:right;-webkit-text-stroke:0.15px;">3.1</div>
<div style="position:absolute;left:1061.46px;top:319.75px;font-size:10px;line-height:11.50px;color:#000;font-weight:400;white-space:nowrap;letter-spacing:0.2px;width:200px;text-align:right;-webkit-text-stroke:0.15px;">3.1</div>
<div style="position:absolute;left:1122.0px;top:319.75px;font-size:10px;line-height:11.50px;color:#000;font-weight:400;white-space:nowrap;letter-spacing:0.2px;width:200px;text-align:right;-webkit-text-stroke:0.15px;">3.1</div>
<div style="position:absolute;left:74.7px;top:334.40px;font-size:10px;line-height:11.50px;color:#000;font-weight:400;white-space:nowrap;letter-spacing:0.8px;-webkit-text-stroke:0.15px;">DPO</div>
<div style="position:absolute;left:334.79999999999995px;top:334.40px;font-size:10px;line-height:11.50px;color:#000;font-weight:400;white-space:nowrap;letter-spacing:0.8px;width:69.0px;text-align:center;-webkit-text-stroke:0.15px;">Days</div>
<div style="position:absolute;left:335.2200000000001px;top:334.40px;font-size:10px;line-height:11.50px;color:#000;font-weight:400;white-space:nowrap;letter-spacing:0.2px;width:200px;text-align:right;-webkit-text-stroke:0.15px;">26.3</div>
<div style="position:absolute;left:395.74000000000007px;top:334.40px;font-size:10px;line-height:11.50px;color:#000;font-weight:400;white-space:nowrap;letter-spacing:0.2px;width:200px;text-align:right;-webkit-text-stroke:0.15px;">37.8</div>
<div style="position:absolute;left:456.26000000000005px;top:334.40px;font-size:10px;line-height:11.50px;color:#000;font-weight:400;white-space:nowrap;letter-spacing:0.2px;width:200px;text-align:right;-webkit-text-stroke:0.15px;">43.9</div>
<div style="position:absolute;left:516.7800000000001px;top:334.40px;font-size:10px;line-height:11.50px;color:#000;font-weight:400;white-space:nowrap;letter-spacing:0.2px;width:200px;text-align:right;-webkit-text-stroke:0.15px;">55.4</div>
<div style="position:absolute;left:577.3000000000002px;top:334.40px;font-size:10px;line-height:11.50px;color:#000;font-weight:400;white-space:nowrap;letter-spacing:0.2px;width:200px;text-align:right;-webkit-text-stroke:0.15px;">40.9</div>
<div style="position:absolute;left:637.8200000000002px;top:334.40px;font-size:10px;line-height:11.50px;color:#000;font-weight:400;white-space:nowrap;letter-spacing:0.2px;width:200px;text-align:right;-webkit-text-stroke:0.15px;">40.9</div>
<div style="position:absolute;left:698.3400000000001px;top:334.40px;font-size:10px;line-height:11.50px;color:#000;font-weight:400;white-space:nowrap;letter-spacing:0.2px;width:200px;text-align:right;-webkit-text-stroke:0.15px;">40.9</div>
<div style="position:absolute;left:758.8600000000001px;top:334.40px;font-size:10px;line-height:11.50px;color:#000;font-weight:400;white-space:nowrap;letter-spacing:0.2px;width:200px;text-align:right;-webkit-text-stroke:0.15px;">40.9</div>
<div style="position:absolute;left:819.3800000000001px;top:334.40px;font-size:10px;line-height:11.50px;color:#000;font-weight:400;white-space:nowrap;letter-spacing:0.2px;width:200px;text-align:right;-webkit-text-stroke:0.15px;">40.9</div>
<div style="position:absolute;left:879.9000000000001px;top:334.40px;font-size:10px;line-height:11.50px;color:#000;font-weight:400;white-space:nowrap;letter-spacing:0.2px;width:200px;text-align:right;-webkit-text-stroke:0.15px;">40.9</div>
<div style="position:absolute;left:940.4200000000001px;top:334.40px;font-size:10px;line-height:11.50px;color:#000;font-weight:400;white-space:nowrap;letter-spacing:0.2px;width:200px;text-align:right;-webkit-text-stroke:0.15px;">40.9</div>
<div style="position:absolute;left:1000.94px;top:334.40px;font-size:10px;line-height:11.50px;color:#000;font-weight:400;white-space:nowrap;letter-spacing:0.2px;width:200px;text-align:right;-webkit-text-stroke:0.15px;">40.9</div>
<div style="position:absolute;left:1061.46px;top:334.40px;font-size:10px;line-height:11.50px;color:#000;font-weight:400;white-space:nowrap;letter-spacing:0.2px;width:200px;text-align:right;-webkit-text-stroke:0.15px;">40.9</div>
<div style="position:absolute;left:1122.0px;top:334.40px;font-size:10px;line-height:11.50px;color:#000;font-weight:400;white-space:nowrap;letter-spacing:0.2px;width:200px;text-align:right;-webkit-text-stroke:0.15px;">40.9</div>
<div style="position:absolute;left:74.7px;top:378.35px;font-size:10px;line-height:11.50px;color:#000;font-weight:400;white-space:nowrap;letter-spacing:0.8px;-webkit-text-stroke:0.15px;">Short Term Investments</div>
<div style="position:absolute;left:334.79999999999995px;top:378.35px;font-size:10px;line-height:11.50px;color:#000;font-weight:400;white-space:nowrap;letter-spacing:0.8px;width:69.0px;text-align:center;-webkit-text-stroke:0.15px;">$000's</div>
<div style="position:absolute;left:399.54px;top:378.35px;font-size:10px;line-height:11.50px;color:#00b050;font-weight:400;white-space:nowrap;letter-spacing:0.2px;width:200px;text-align:right;-webkit-text-stroke:0.15px;">126</div>
<div style="position:absolute;left:460.06px;top:378.35px;font-size:10px;line-height:11.50px;color:#00b050;font-weight:400;white-space:nowrap;letter-spacing:0.2px;width:200px;text-align:right;-webkit-text-stroke:0.15px;">140</div>
<div style="position:absolute;left:520.58px;top:378.35px;font-size:10px;line-height:11.50px;color:#00b050;font-weight:400;white-space:nowrap;letter-spacing:0.2px;width:200px;text-align:right;-webkit-text-stroke:0.15px;">128</div>
<div style="position:absolute;left:581.1000000000001px;top:378.35px;font-size:10px;line-height:11.50px;color:#000;font-weight:400;white-space:nowrap;letter-spacing:0.2px;width:200px;text-align:right;-webkit-text-stroke:0.15px;">150</div>
<div style="position:absolute;left:641.6200000000001px;top:378.35px;font-size:10px;line-height:11.50px;color:#000;font-weight:400;white-space:nowrap;letter-spacing:0.2px;width:200px;text-align:right;-webkit-text-stroke:0.15px;">175</div>
<div style="position:absolute;left:702.1400000000001px;top:378.35px;font-size:10px;line-height:11.50px;color:#000;font-weight:400;white-space:nowrap;letter-spacing:0.2px;width:200px;text-align:right;-webkit-text-stroke:0.15px;">204</div>
<div style="position:absolute;left:762.6600000000001px;top:378.35px;font-size:10px;line-height:11.50px;color:#000;font-weight:400;white-space:nowrap;letter-spacing:0.2px;width:200px;text-align:right;-webkit-text-stroke:0.15px;">238</div>
<div style="position:absolute;left:823.1800000000001px;top:378.35px;font-size:10px;line-height:11.50px;color:#000;font-weight:400;white-space:nowrap;letter-spacing:0.2px;width:200px;text-align:right;-webkit-text-stroke:0.15px;">278</div>
<div style="position:absolute;left:883.7px;top:378.35px;font-size:10px;line-height:11.50px;color:#000;font-weight:400;white-space:nowrap;letter-spacing:0.2px;width:200px;text-align:right;-webkit-text-stroke:0.15px;">325</div>
<div style="position:absolute;left:944.22px;top:378.35px;font-size:10px;line-height:11.50px;color:#000;font-weight:400;white-space:nowrap;letter-spacing:0.2px;width:200px;text-align:right;-webkit-text-stroke:0.15px;">380</div>
<div style="position:absolute;left:1004.74px;top:378.35px;font-size:10px;line-height:11.50px;color:#000;font-weight:400;white-space:nowrap;letter-spacing:0.2px;width:200px;text-align:right;-webkit-text-stroke:0.15px;">445</div>
<div style="position:absolute;left:1065.26px;top:378.35px;font-size:10px;line-height:11.50px;color:#000;font-weight:400;white-space:nowrap;letter-spacing:0.2px;width:200px;text-align:right;-webkit-text-stroke:0.15px;">521</div>
<div style="position:absolute;left:1125.8px;top:378.35px;font-size:10px;line-height:11.50px;color:#000;font-weight:400;white-space:nowrap;letter-spacing:0.2px;width:200px;text-align:right;-webkit-text-stroke:0.15px;">611</div>
<div style="position:absolute;left:74.7px;top:393.00px;font-size:10px;line-height:11.50px;color:#000;font-weight:400;white-space:nowrap;letter-spacing:0.8px;-webkit-text-stroke:0.15px;">Restricted Cash</div>
<div style="position:absolute;left:334.79999999999995px;top:393.00px;font-size:10px;line-height:11.50px;color:#000;font-weight:400;white-space:nowrap;letter-spacing:0.8px;width:69.0px;text-align:center;-webkit-text-stroke:0.15px;">$000's</div>
<div style="position:absolute;left:339.02000000000004px;top:393.00px;font-size:10px;line-height:11.50px;color:#00b050;font-weight:400;white-space:nowrap;letter-spacing:0.2px;width:200px;text-align:right;-webkit-text-stroke:0.15px;">69</div>
<div style="position:absolute;left:399.54px;top:393.00px;font-size:10px;line-height:11.50px;color:#00b050;font-weight:400;white-space:nowrap;letter-spacing:0.2px;width:200px;text-align:right;-webkit-text-stroke:0.15px;">72</div>
<div style="position:absolute;left:460.06px;top:393.00px;font-size:10px;line-height:11.50px;color:#00b050;font-weight:400;white-space:nowrap;letter-spacing:0.2px;width:200px;text-align:right;-webkit-text-stroke:0.15px;">0</div>
<div style="position:absolute;left:520.58px;top:393.00px;font-size:10px;line-height:11.50px;color:#00b050;font-weight:400;white-space:nowrap;letter-spacing:0.2px;width:200px;text-align:right;-webkit-text-stroke:0.15px;">0</div>
<div style="position:absolute;left:581.1000000000001px;top:393.00px;font-size:10px;line-height:11.50px;color:#000;font-weight:400;white-space:nowrap;letter-spacing:0.2px;width:200px;text-align:right;-webkit-text-stroke:0.15px;">0</div>
<div style="position:absolute;left:641.6200000000001px;top:393.00px;font-size:10px;line-height:11.50px;color:#000;font-weight:400;white-space:nowrap;letter-spacing:0.2px;width:200px;text-align:right;-webkit-text-stroke:0.15px;">0</div>
<div style="position:absolute;left:702.1400000000001px;top:393.00px;font-size:10px;line-height:11.50px;color:#000;font-weight:400;white-space:nowrap;letter-spacing:0.2px;width:200px;text-align:right;-webkit-text-stroke:0.15px;">0</div>
<div style="position:absolute;left:762.6600000000001px;top:393.00px;font-size:10px;line-height:11.50px;color:#000;font-weight:400;white-space:nowrap;letter-spacing:0.2px;width:200px;text-align:right;-webkit-text-stroke:0.15px;">0</div>
<div style="position:absolute;left:823.1800000000001px;top:393.00px;font-size:10px;line-height:11.50px;color:#000;font-weight:400;white-space:nowrap;letter-spacing:0.2px;width:200px;text-align:right;-webkit-text-stroke:0.15px;">0</div>
<div style="position:absolute;left:883.7px;top:393.00px;font-size:10px;line-height:11.50px;color:#000;font-weight:400;white-space:nowrap;letter-spacing:0.2px;width:200px;text-align:right;-webkit-text-stroke:0.15px;">0</div>
<div style="position:absolute;left:944.22px;top:393.00px;font-size:10px;line-height:11.50px;color:#000;font-weight:400;white-space:nowrap;letter-spacing:0.2px;width:200px;text-align:right;-webkit-text-stroke:0.15px;">0</div>
<div style="position:absolute;left:1004.74px;top:393.00px;font-size:10px;line-height:11.50px;color:#000;font-weight:400;white-space:nowrap;letter-spacing:0.2px;width:200px;text-align:right;-webkit-text-stroke:0.15px;">0</div>
<div style="position:absolute;left:1065.26px;top:393.00px;font-size:10px;line-height:11.50px;color:#000;font-weight:400;white-space:nowrap;letter-spacing:0.2px;width:200px;text-align:right;-webkit-text-stroke:0.15px;">0</div>
<div style="position:absolute;left:1125.8px;top:393.00px;font-size:10px;line-height:11.50px;color:#000;font-weight:400;white-space:nowrap;letter-spacing:0.2px;width:200px;text-align:right;-webkit-text-stroke:0.15px;">0</div>
<div style="position:absolute;left:74.7px;top:407.65px;font-size:10px;line-height:11.50px;color:#000;font-weight:400;white-space:nowrap;letter-spacing:0.8px;-webkit-text-stroke:0.15px;">Other Receivables</div>
<div style="position:absolute;left:334.79999999999995px;top:407.65px;font-size:10px;line-height:11.50px;color:#000;font-weight:400;white-space:nowrap;letter-spacing:0.8px;width:69.0px;text-align:center;-webkit-text-stroke:0.15px;">$000's</div>
<div style="position:absolute;left:339.02000000000004px;top:407.65px;font-size:10px;line-height:11.50px;color:#00b050;font-weight:400;white-space:nowrap;letter-spacing:0.2px;width:200px;text-align:right;-webkit-text-stroke:0.15px;">945</div>
<div style="position:absolute;left:399.54px;top:407.65px;font-size:10px;line-height:11.50px;color:#00b050;font-weight:400;white-space:nowrap;letter-spacing:0.2px;width:200px;text-align:right;-webkit-text-stroke:0.15px;">1,118</div>
<div style="position:absolute;left:460.06px;top:407.65px;font-size:10px;line-height:11.50px;color:#00b050;font-weight:400;white-space:nowrap;letter-spacing:0.2px;width:200px;text-align:right;-webkit-text-stroke:0.15px;">1,043</div>
<div style="position:absolute;left:520.58px;top:407.65px;font-size:10px;line-height:11.50px;color:#00b050;font-weight:400;white-space:nowrap;letter-spacing:0.2px;width:200px;text-align:right;-webkit-text-stroke:0.15px;">912</div>
<div style="position:absolute;left:581.1000000000001px;top:407.65px;font-size:10px;line-height:11.50px;color:#000;font-weight:400;white-space:nowrap;letter-spacing:0.2px;width:200px;text-align:right;-webkit-text-stroke:0.15px;">1,062</div>
<div style="position:absolute;left:641.6200000000001px;top:407.65px;font-size:10px;line-height:11.50px;color:#000;font-weight:400;white-space:nowrap;letter-spacing:0.2px;width:200px;text-align:right;-webkit-text-stroke:0.15px;">1,239</div>
<div style="position:absolute;left:702.1400000000001px;top:407.65px;font-size:10px;line-height:11.50px;color:#000;font-weight:400;white-space:nowrap;letter-spacing:0.2px;width:200px;text-align:right;-webkit-text-stroke:0.15px;">1,445</div>
<div style="position:absolute;left:762.6600000000001px;top:407.65px;font-size:10px;line-height:11.50px;color:#000;font-weight:400;white-space:nowrap;letter-spacing:0.2px;width:200px;text-align:right;-webkit-text-stroke:0.15px;">1,688</div>
<div style="position:absolute;left:823.1800000000001px;top:407.65px;font-size:10px;line-height:11.50px;color:#000;font-weight:400;white-space:nowrap;letter-spacing:0.2px;width:200px;text-align:right;-webkit-text-stroke:0.15px;">1,972</div>
<div style="position:absolute;left:883.7px;top:407.65px;font-size:10px;line-height:11.50px;color:#000;font-weight:400;white-space:nowrap;letter-spacing:0.2px;width:200px;text-align:right;-webkit-text-stroke:0.15px;">2,305</div>
<div style="position:absolute;left:944.22px;top:407.65px;font-size:10px;line-height:11.50px;color:#000;font-weight:400;white-space:nowrap;letter-spacing:0.2px;width:200px;text-align:right;-webkit-text-stroke:0.15px;">2,697</div>
<div style="position:absolute;left:1004.74px;top:407.65px;font-size:10px;line-height:11.50px;color:#000;font-weight:400;white-space:nowrap;letter-spacing:0.2px;width:200px;text-align:right;-webkit-text-stroke:0.15px;">3,157</div>
<div style="position:absolute;left:1065.26px;top:407.65px;font-size:10px;line-height:11.50px;color:#000;font-weight:400;white-space:nowrap;letter-spacing:0.2px;width:200px;text-align:right;-webkit-text-stroke:0.15px;">3,698</div>
<div style="position:absolute;left:1125.8px;top:407.65px;font-size:10px;line-height:11.50px;color:#000;font-weight:400;white-space:nowrap;letter-spacing:0.2px;width:200px;text-align:right;-webkit-text-stroke:0.15px;">4,334</div>
<div style="position:absolute;left:74.7px;top:422.30px;font-size:10px;line-height:11.50px;color:#000;font-weight:400;white-space:nowrap;letter-spacing:0.8px;-webkit-text-stroke:0.15px;">Prepayments</div>
<div style="position:absolute;left:334.79999999999995px;top:422.30px;font-size:10px;line-height:11.50px;color:#000;font-weight:400;white-space:nowrap;letter-spacing:0.8px;width:69.0px;text-align:center;-webkit-text-stroke:0.15px;">$000's</div>
<div style="position:absolute;left:339.02000000000004px;top:422.30px;font-size:10px;line-height:11.50px;color:#00b050;font-weight:400;white-space:nowrap;letter-spacing:0.2px;width:200px;text-align:right;-webkit-text-stroke:0.15px;">101</div>
<div style="position:absolute;left:399.54px;top:422.30px;font-size:10px;line-height:11.50px;color:#00b050;font-weight:400;white-space:nowrap;letter-spacing:0.2px;width:200px;text-align:right;-webkit-text-stroke:0.15px;">126</div>
<div style="position:absolute;left:460.06px;top:422.30px;font-size:10px;line-height:11.50px;color:#00b050;font-weight:400;white-space:nowrap;letter-spacing:0.2px;width:200px;text-align:right;-webkit-text-stroke:0.15px;">179</div>
<div style="position:absolute;left:520.58px;top:422.30px;font-size:10px;line-height:11.50px;color:#00b050;font-weight:400;white-space:nowrap;letter-spacing:0.2px;width:200px;text-align:right;-webkit-text-stroke:0.15px;">0</div>
<div style="position:absolute;left:581.1000000000001px;top:422.30px;font-size:10px;line-height:11.50px;color:#000;font-weight:400;white-space:nowrap;letter-spacing:0.2px;width:200px;text-align:right;-webkit-text-stroke:0.15px;">0</div>
<div style="position:absolute;left:641.6200000000001px;top:422.30px;font-size:10px;line-height:11.50px;color:#000;font-weight:400;white-space:nowrap;letter-spacing:0.2px;width:200px;text-align:right;-webkit-text-stroke:0.15px;">0</div>
<div style="position:absolute;left:702.1400000000001px;top:422.30px;font-size:10px;line-height:11.50px;color:#000;font-weight:400;white-space:nowrap;letter-spacing:0.2px;width:200px;text-align:right;-webkit-text-stroke:0.15px;">0</div>
<div style="position:absolute;left:762.6600000000001px;top:422.30px;font-size:10px;line-height:11.50px;color:#000;font-weight:400;white-space:nowrap;letter-spacing:0.2px;width:200px;text-align:right;-webkit-text-stroke:0.15px;">0</div>
<div style="position:absolute;left:823.1800000000001px;top:422.30px;font-size:10px;line-height:11.50px;color:#000;font-weight:400;white-space:nowrap;letter-spacing:0.2px;width:200px;text-align:right;-webkit-text-stroke:0.15px;">0</div>
<div style="position:absolute;left:883.7px;top:422.30px;font-size:10px;line-height:11.50px;color:#000;font-weight:400;white-space:nowrap;letter-spacing:0.2px;width:200px;text-align:right;-webkit-text-stroke:0.15px;">0</div>
<div style="position:absolute;left:944.22px;top:422.30px;font-size:10px;line-height:11.50px;color:#000;font-weight:400;white-space:nowrap;letter-spacing:0.2px;width:200px;text-align:right;-webkit-text-stroke:0.15px;">0</div>
<div style="position:absolute;left:1004.74px;top:422.30px;font-size:10px;line-height:11.50px;color:#000;font-weight:400;white-space:nowrap;letter-spacing:0.2px;width:200px;text-align:right;-webkit-text-stroke:0.15px;">0</div>
<div style="position:absolute;left:1065.26px;top:422.30px;font-size:10px;line-height:11.50px;color:#000;font-weight:400;white-space:nowrap;letter-spacing:0.2px;width:200px;text-align:right;-webkit-text-stroke:0.15px;">0</div>
<div style="position:absolute;left:1125.8px;top:422.30px;font-size:10px;line-height:11.50px;color:#000;font-weight:400;white-space:nowrap;letter-spacing:0.2px;width:200px;text-align:right;-webkit-text-stroke:0.15px;">0</div>
<div style="position:absolute;left:74.7px;top:436.95px;font-size:10px;line-height:11.50px;color:#000;font-weight:400;white-space:nowrap;letter-spacing:0.8px;-webkit-text-stroke:0.15px;">Long Term Investments</div>
<div style="position:absolute;left:334.79999999999995px;top:436.95px;font-size:10px;line-height:11.50px;color:#000;font-weight:400;white-space:nowrap;letter-spacing:0.8px;width:69.0px;text-align:center;-webkit-text-stroke:0.15px;">$000's</div>
<div style="position:absolute;left:339.02000000000004px;top:436.95px;font-size:10px;line-height:11.50px;color:#00b050;font-weight:400;white-space:nowrap;letter-spacing:0.2px;width:200px;text-align:right;-webkit-text-stroke:0.15px;">3</div>
<div style="position:absolute;left:399.54px;top:436.95px;font-size:10px;line-height:11.50px;color:#00b050;font-weight:400;white-space:nowrap;letter-spacing:0.2px;width:200px;text-align:right;-webkit-text-stroke:0.15px;">3</div>
<div style="position:absolute;left:460.06px;top:436.95px;font-size:10px;line-height:11.50px;color:#00b050;font-weight:400;white-space:nowrap;letter-spacing:0.2px;width:200px;text-align:right;-webkit-text-stroke:0.15px;">3</div>
<div style="position:absolute;left:520.58px;top:436.95px;font-size:10px;line-height:11.50px;color:#00b050;font-weight:400;white-space:nowrap;letter-spacing:0.2px;width:200px;text-align:right;-webkit-text-stroke:0.15px;">0</div>
<div style="position:absolute;left:581.1000000000001px;top:436.95px;font-size:10px;line-height:11.50px;color:#000;font-weight:400;white-space:nowrap;letter-spacing:0.2px;width:200px;text-align:right;-webkit-text-stroke:0.15px;">0</div>
<div style="position:absolute;left:641.6200000000001px;top:436.95px;font-size:10px;line-height:11.50px;color:#000;font-weight:400;white-space:nowrap;letter-spacing:0.2px;width:200px;text-align:right;-webkit-text-stroke:0.15px;">0</div>
<div style="position:absolute;left:702.1400000000001px;top:436.95px;font-size:10px;line-height:11.50px;color:#000;font-weight:400;white-space:nowrap;letter-spacing:0.2px;width:200px;text-align:right;-webkit-text-stroke:0.15px;">0</div>
<div style="position:absolute;left:762.6600000000001px;top:436.95px;font-size:10px;line-height:11.50px;color:#000;font-weight:400;white-space:nowrap;letter-spacing:0.2px;width:200px;text-align:right;-webkit-text-stroke:0.15px;">0</div>
<div style="position:absolute;left:823.1800000000001px;top:436.95px;font-size:10px;line-height:11.50px;color:#000;font-weight:400;white-space:nowrap;letter-spacing:0.2px;width:200px;text-align:right;-webkit-text-stroke:0.15px;">0</div>
<div style="position:absolute;left:883.7px;top:436.95px;font-size:10px;line-height:11.50px;color:#000;font-weight:400;white-space:nowrap;letter-spacing:0.2px;width:200px;text-align:right;-webkit-text-stroke:0.15px;">0</div>
<div style="position:absolute;left:944.22px;top:436.95px;font-size:10px;line-height:11.50px;color:#000;font-weight:400;white-space:nowrap;letter-spacing:0.2px;width:200px;text-align:right;-webkit-text-stroke:0.15px;">0</div>
<div style="position:absolute;left:1004.74px;top:436.95px;font-size:10px;line-height:11.50px;color:#000;font-weight:400;white-space:nowrap;letter-spacing:0.2px;width:200px;text-align:right;-webkit-text-stroke:0.15px;">0</div>
<div style="position:absolute;left:1065.26px;top:436.95px;font-size:10px;line-height:11.50px;color:#000;font-weight:400;white-space:nowrap;letter-spacing:0.2px;width:200px;text-align:right;-webkit-text-stroke:0.15px;">0</div>
<div style="position:absolute;left:1125.8px;top:436.95px;font-size:10px;line-height:11.50px;color:#000;font-weight:400;white-space:nowrap;letter-spacing:0.2px;width:200px;text-align:right;-webkit-text-stroke:0.15px;">0</div>
<div style="position:absolute;left:74.7px;top:451.60px;font-size:10px;line-height:11.50px;color:#000;font-weight:400;white-space:nowrap;letter-spacing:0.8px;-webkit-text-stroke:0.15px;">Derivative Investments</div>
<div style="position:absolute;left:334.79999999999995px;top:451.60px;font-size:10px;line-height:11.50px;color:#000;font-weight:400;white-space:nowrap;letter-spacing:0.8px;width:69.0px;text-align:center;-webkit-text-stroke:0.15px;">$000's</div>
<div style="position:absolute;left:339.02000000000004px;top:451.60px;font-size:10px;line-height:11.50px;color:#00b050;font-weight:400;white-space:nowrap;letter-spacing:0.2px;width:200px;text-align:right;-webkit-text-stroke:0.15px;">0</div>
<div style="position:absolute;left:399.54px;top:451.60px;font-size:10px;line-height:11.50px;color:#00b050;font-weight:400;white-space:nowrap;letter-spacing:0.2px;width:200px;text-align:right;-webkit-text-stroke:0.15px;">0</div>
<div style="position:absolute;left:460.06px;top:451.60px;font-size:10px;line-height:11.50px;color:#00b050;font-weight:400;white-space:nowrap;letter-spacing:0.2px;width:200px;text-align:right;-webkit-text-stroke:0.15px;">44</div>
<div style="position:absolute;left:520.58px;top:451.60px;font-size:10px;line-height:11.50px;color:#00b050;font-weight:400;white-space:nowrap;letter-spacing:0.2px;width:200px;text-align:right;-webkit-text-stroke:0.15px;">73</div>
<div style="position:absolute;left:581.1000000000001px;top:451.60px;font-size:10px;line-height:11.50px;color:#000;font-weight:400;white-space:nowrap;letter-spacing:0.2px;width:200px;text-align:right;-webkit-text-stroke:0.15px;">85</div>
<div style="position:absolute;left:641.6200000000001px;top:451.60px;font-size:10px;line-height:11.50px;color:#000;font-weight:400;white-space:nowrap;letter-spacing:0.2px;width:200px;text-align:right;-webkit-text-stroke:0.15px;">99</div>
<div style="position:absolute;left:702.1400000000001px;top:451.60px;font-size:10px;line-height:11.50px;color:#000;font-weight:400;white-space:nowrap;letter-spacing:0.2px;width:200px;text-align:right;-webkit-text-stroke:0.15px;">116</div>
<div style="position:absolute;left:762.6600000000001px;top:451.60px;font-size:10px;line-height:11.50px;color:#000;font-weight:400;white-space:nowrap;letter-spacing:0.2px;width:200px;text-align:right;-webkit-text-stroke:0.15px;">135</div>
<div style="position:absolute;left:823.1800000000001px;top:451.60px;font-size:10px;line-height:11.50px;color:#000;font-weight:400;white-space:nowrap;letter-spacing:0.2px;width:200px;text-align:right;-webkit-text-stroke:0.15px;">158</div>
<div style="position:absolute;left:883.7px;top:451.60px;font-size:10px;line-height:11.50px;color:#000;font-weight:400;white-space:nowrap;letter-spacing:0.2px;width:200px;text-align:right;-webkit-text-stroke:0.15px;">185</div>
<div style="position:absolute;left:944.22px;top:451.60px;font-size:10px;line-height:11.50px;color:#000;font-weight:400;white-space:nowrap;letter-spacing:0.2px;width:200px;text-align:right;-webkit-text-stroke:0.15px;">216</div>
<div style="position:absolute;left:1004.74px;top:451.60px;font-size:10px;line-height:11.50px;color:#000;font-weight:400;white-space:nowrap;letter-spacing:0.2px;width:200px;text-align:right;-webkit-text-stroke:0.15px;">253</div>
<div style="position:absolute;left:1065.26px;top:451.60px;font-size:10px;line-height:11.50px;color:#000;font-weight:400;white-space:nowrap;letter-spacing:0.2px;width:200px;text-align:right;-webkit-text-stroke:0.15px;">297</div>
<div style="position:absolute;left:1125.8px;top:451.60px;font-size:10px;line-height:11.50px;color:#000;font-weight:400;white-space:nowrap;letter-spacing:0.2px;width:200px;text-align:right;-webkit-text-stroke:0.15px;">348</div>
<div style="position:absolute;left:74.7px;top:466.25px;font-size:10px;line-height:11.50px;color:#000;font-weight:400;white-space:nowrap;letter-spacing:0.8px;-webkit-text-stroke:0.15px;">Prepayments</div>
<div style="position:absolute;left:334.79999999999995px;top:466.25px;font-size:10px;line-height:11.50px;color:#000;font-weight:400;white-space:nowrap;letter-spacing:0.8px;width:69.0px;text-align:center;-webkit-text-stroke:0.15px;">$000's</div>
<div style="position:absolute;left:339.02000000000004px;top:466.25px;font-size:10px;line-height:11.50px;color:#00b050;font-weight:400;white-space:nowrap;letter-spacing:0.2px;width:200px;text-align:right;-webkit-text-stroke:0.15px;">128</div>
<div style="position:absolute;left:399.54px;top:466.25px;font-size:10px;line-height:11.50px;color:#00b050;font-weight:400;white-space:nowrap;letter-spacing:0.2px;width:200px;text-align:right;-webkit-text-stroke:0.15px;">122</div>
<div style="position:absolute;left:460.06px;top:466.25px;font-size:10px;line-height:11.50px;color:#00b050;font-weight:400;white-space:nowrap;letter-spacing:0.2px;width:200px;text-align:right;-webkit-text-stroke:0.15px;">7</div>
<div style="position:absolute;left:520.58px;top:466.25px;font-size:10px;line-height:11.50px;color:#00b050;font-weight:400;white-space:nowrap;letter-spacing:0.2px;width:200px;text-align:right;-webkit-text-stroke:0.15px;">34</div>
<div style="position:absolute;left:581.1000000000001px;top:466.25px;font-size:10px;line-height:11.50px;color:#000;font-weight:400;white-space:nowrap;letter-spacing:0.2px;width:200px;text-align:right;-webkit-text-stroke:0.15px;">39</div>
<div style="position:absolute;left:641.6200000000001px;top:466.25px;font-size:10px;line-height:11.50px;color:#000;font-weight:400;white-space:nowrap;letter-spacing:0.2px;width:200px;text-align:right;-webkit-text-stroke:0.15px;">46</div>
<div style="position:absolute;left:702.1400000000001px;top:466.25px;font-size:10px;line-height:11.50px;color:#000;font-weight:400;white-space:nowrap;letter-spacing:0.2px;width:200px;text-align:right;-webkit-text-stroke:0.15px;">53</div>
<div style="position:absolute;left:762.6600000000001px;top:466.25px;font-size:10px;line-height:11.50px;color:#000;font-weight:400;white-space:nowrap;letter-spacing:0.2px;width:200px;text-align:right;-webkit-text-stroke:0.15px;">62</div>
<div style="position:absolute;left:823.1800000000001px;top:466.25px;font-size:10px;line-height:11.50px;color:#000;font-weight:400;white-space:nowrap;letter-spacing:0.2px;width:200px;text-align:right;-webkit-text-stroke:0.15px;">73</div>
<div style="position:absolute;left:883.7px;top:466.25px;font-size:10px;line-height:11.50px;color:#000;font-weight:400;white-space:nowrap;letter-spacing:0.2px;width:200px;text-align:right;-webkit-text-stroke:0.15px;">85</div>
<div style="position:absolute;left:944.22px;top:466.25px;font-size:10px;line-height:11.50px;color:#000;font-weight:400;white-space:nowrap;letter-spacing:0.2px;width:200px;text-align:right;-webkit-text-stroke:0.15px;">99</div>
<div style="position:absolute;left:1004.74px;top:466.25px;font-size:10px;line-height:11.50px;color:#000;font-weight:400;white-space:nowrap;letter-spacing:0.2px;width:200px;text-align:right;-webkit-text-stroke:0.15px;">116</div>
<div style="position:absolute;left:1065.26px;top:466.25px;font-size:10px;line-height:11.50px;color:#000;font-weight:400;white-space:nowrap;letter-spacing:0.2px;width:200px;text-align:right;-webkit-text-stroke:0.15px;">136</div>
<div style="position:absolute;left:1125.8px;top:466.25px;font-size:10px;line-height:11.50px;color:#000;font-weight:400;white-space:nowrap;letter-spacing:0.2px;width:200px;text-align:right;-webkit-text-stroke:0.15px;">160</div>
<div style="position:absolute;left:74.7px;top:480.90px;font-size:10px;line-height:11.50px;color:#000;font-weight:400;white-space:nowrap;letter-spacing:0.8px;-webkit-text-stroke:0.15px;">Restricted Cash</div>
<div style="position:absolute;left:334.79999999999995px;top:480.90px;font-size:10px;line-height:11.50px;color:#000;font-weight:400;white-space:nowrap;letter-spacing:0.8px;width:69.0px;text-align:center;-webkit-text-stroke:0.15px;">$000's</div>
<div style="position:absolute;left:339.02000000000004px;top:480.90px;font-size:10px;line-height:11.50px;color:#00b050;font-weight:400;white-space:nowrap;letter-spacing:0.2px;width:200px;text-align:right;-webkit-text-stroke:0.15px;">0</div>
<div style="position:absolute;left:399.54px;top:480.90px;font-size:10px;line-height:11.50px;color:#00b050;font-weight:400;white-space:nowrap;letter-spacing:0.2px;width:200px;text-align:right;-webkit-text-stroke:0.15px;">67</div>
<div style="position:absolute;left:460.06px;top:480.90px;font-size:10px;line-height:11.50px;color:#00b050;font-weight:400;white-space:nowrap;letter-spacing:0.2px;width:200px;text-align:right;-webkit-text-stroke:0.15px;">152</div>
<div style="position:absolute;left:520.58px;top:480.90px;font-size:10px;line-height:11.50px;color:#00b050;font-weight:400;white-space:nowrap;letter-spacing:0.2px;width:200px;text-align:right;-webkit-text-stroke:0.15px;">126</div>
<div style="position:absolute;left:581.1000000000001px;top:480.90px;font-size:10px;line-height:11.50px;color:#000;font-weight:400;white-space:nowrap;letter-spacing:0.2px;width:200px;text-align:right;-webkit-text-stroke:0.15px;">147</div>
<div style="position:absolute;left:641.6200000000001px;top:480.90px;font-size:10px;line-height:11.50px;color:#000;font-weight:400;white-space:nowrap;letter-spacing:0.2px;width:200px;text-align:right;-webkit-text-stroke:0.15px;">172</div>
<div style="position:absolute;left:702.1400000000001px;top:480.90px;font-size:10px;line-height:11.50px;color:#000;font-weight:400;white-space:nowrap;letter-spacing:0.2px;width:200px;text-align:right;-webkit-text-stroke:0.15px;">200</div>
<div style="position:absolute;left:762.6600000000001px;top:480.90px;font-size:10px;line-height:11.50px;color:#000;font-weight:400;white-space:nowrap;letter-spacing:0.2px;width:200px;text-align:right;-webkit-text-stroke:0.15px;">234</div>
<div style="position:absolute;left:823.1800000000001px;top:480.90px;font-size:10px;line-height:11.50px;color:#000;font-weight:400;white-space:nowrap;letter-spacing:0.2px;width:200px;text-align:right;-webkit-text-stroke:0.15px;">273</div>
<div style="position:absolute;left:883.7px;top:480.90px;font-size:10px;line-height:11.50px;color:#000;font-weight:400;white-space:nowrap;letter-spacing:0.2px;width:200px;text-align:right;-webkit-text-stroke:0.15px;">319</div>
<div style="position:absolute;left:944.22px;top:480.90px;font-size:10px;line-height:11.50px;color:#000;font-weight:400;white-space:nowrap;letter-spacing:0.2px;width:200px;text-align:right;-webkit-text-stroke:0.15px;">374</div>
<div style="position:absolute;left:1004.74px;top:480.90px;font-size:10px;line-height:11.50px;color:#000;font-weight:400;white-space:nowrap;letter-spacing:0.2px;width:200px;text-align:right;-webkit-text-stroke:0.15px;">437</div>
<div style="position:absolute;left:1065.26px;top:480.90px;font-size:10px;line-height:11.50px;color:#000;font-weight:400;white-space:nowrap;letter-spacing:0.2px;width:200px;text-align:right;-webkit-text-stroke:0.15px;">512</div>
<div style="position:absolute;left:1125.8px;top:480.90px;font-size:10px;line-height:11.50px;color:#000;font-weight:400;white-space:nowrap;letter-spacing:0.2px;width:200px;text-align:right;-webkit-text-stroke:0.15px;">600</div>
<div style="position:absolute;left:74.7px;top:495.55px;font-size:10px;line-height:11.50px;color:#000;font-weight:400;white-space:nowrap;letter-spacing:0.8px;-webkit-text-stroke:0.15px;">Deferred Tax Assets</div>
<div style="position:absolute;left:334.79999999999995px;top:495.55px;font-size:10px;line-height:11.50px;color:#000;font-weight:400;white-space:nowrap;letter-spacing:0.8px;width:69.0px;text-align:center;-webkit-text-stroke:0.15px;">$000's</div>
<div style="position:absolute;left:339.02000000000004px;top:495.55px;font-size:10px;line-height:11.50px;color:#00b050;font-weight:400;white-space:nowrap;letter-spacing:0.2px;width:200px;text-align:right;-webkit-text-stroke:0.15px;">370</div>
<div style="position:absolute;left:399.54px;top:495.55px;font-size:10px;line-height:11.50px;color:#00b050;font-weight:400;white-space:nowrap;letter-spacing:0.2px;width:200px;text-align:right;-webkit-text-stroke:0.15px;">251</div>
<div style="position:absolute;left:460.06px;top:495.55px;font-size:10px;line-height:11.50px;color:#00b050;font-weight:400;white-space:nowrap;letter-spacing:0.2px;width:200px;text-align:right;-webkit-text-stroke:0.15px;">172</div>
<div style="position:absolute;left:520.58px;top:495.55px;font-size:10px;line-height:11.50px;color:#00b050;font-weight:400;white-space:nowrap;letter-spacing:0.2px;width:200px;text-align:right;-webkit-text-stroke:0.15px;">279</div>
<div style="position:absolute;left:581.1000000000001px;top:495.55px;font-size:10px;line-height:11.50px;color:#000;font-weight:400;white-space:nowrap;letter-spacing:0.2px;width:200px;text-align:right;-webkit-text-stroke:0.15px;">325</div>
<div style="position:absolute;left:641.6200000000001px;top:495.55px;font-size:10px;line-height:11.50px;color:#000;font-weight:400;white-space:nowrap;letter-spacing:0.2px;width:200px;text-align:right;-webkit-text-stroke:0.15px;">379</div>
<div style="position:absolute;left:702.1400000000001px;top:495.55px;font-size:10px;line-height:11.50px;color:#000;font-weight:400;white-space:nowrap;letter-spacing:0.2px;width:200px;text-align:right;-webkit-text-stroke:0.15px;">442</div>
<div style="position:absolute;left:762.6600000000001px;top:495.55px;font-size:10px;line-height:11.50px;color:#000;font-weight:400;white-space:nowrap;letter-spacing:0.2px;width:200px;text-align:right;-webkit-text-stroke:0.15px;">516</div>
<div style="position:absolute;left:823.1800000000001px;top:495.55px;font-size:10px;line-height:11.50px;color:#000;font-weight:400;white-space:nowrap;letter-spacing:0.2px;width:200px;text-align:right;-webkit-text-stroke:0.15px;">603</div>
<div style="position:absolute;left:883.7px;top:495.55px;font-size:10px;line-height:11.50px;color:#000;font-weight:400;white-space:nowrap;letter-spacing:0.2px;width:200px;text-align:right;-webkit-text-stroke:0.15px;">705</div>
<div style="position:absolute;left:944.22px;top:495.55px;font-size:10px;line-height:11.50px;color:#000;font-weight:400;white-space:nowrap;letter-spacing:0.2px;width:200px;text-align:right;-webkit-text-stroke:0.15px;">824</div>
<div style="position:absolute;left:1004.74px;top:495.55px;font-size:10px;line-height:11.50px;color:#000;font-weight:400;white-space:nowrap;letter-spacing:0.2px;width:200px;text-align:right;-webkit-text-stroke:0.15px;">965</div>
<div style="position:absolute;left:1065.26px;top:495.55px;font-size:10px;line-height:11.50px;color:#000;font-weight:400;white-space:nowrap;letter-spacing:0.2px;width:200px;text-align:right;-webkit-text-stroke:0.15px;">1,130</div>
<div style="position:absolute;left:1125.8px;top:495.55px;font-size:10px;line-height:11.50px;color:#000;font-weight:400;white-space:nowrap;letter-spacing:0.2px;width:200px;text-align:right;-webkit-text-stroke:0.15px;">1,324</div>
<div style="position:absolute;left:74.7px;top:510.20px;font-size:10px;line-height:11.50px;color:#000;font-weight:400;white-space:nowrap;letter-spacing:0.8px;-webkit-text-stroke:0.15px;">Related Parties</div>
<div style="position:absolute;left:334.79999999999995px;top:510.20px;font-size:10px;line-height:11.50px;color:#000;font-weight:400;white-space:nowrap;letter-spacing:0.8px;width:69.0px;text-align:center;-webkit-text-stroke:0.15px;">$000's</div>
<div style="position:absolute;left:339.02000000000004px;top:510.20px;font-size:10px;line-height:11.50px;color:#00b050;font-weight:400;white-space:nowrap;letter-spacing:0.2px;width:200px;text-align:right;-webkit-text-stroke:0.15px;">2</div>
<div style="position:absolute;left:399.54px;top:510.20px;font-size:10px;line-height:11.50px;color:#00b050;font-weight:400;white-space:nowrap;letter-spacing:0.2px;width:200px;text-align:right;-webkit-text-stroke:0.15px;">5</div>
<div style="position:absolute;left:460.06px;top:510.20px;font-size:10px;line-height:11.50px;color:#00b050;font-weight:400;white-space:nowrap;letter-spacing:0.2px;width:200px;text-align:right;-webkit-text-stroke:0.15px;">1</div>
<div style="position:absolute;left:520.58px;top:510.20px;font-size:10px;line-height:11.50px;color:#00b050;font-weight:400;white-space:nowrap;letter-spacing:0.2px;width:200px;text-align:right;-webkit-text-stroke:0.15px;">0</div>
<div style="position:absolute;left:581.1000000000001px;top:510.20px;font-size:10px;line-height:11.50px;color:#000;font-weight:400;white-space:nowrap;letter-spacing:0.2px;width:200px;text-align:right;-webkit-text-stroke:0.15px;">0</div>
<div style="position:absolute;left:641.6200000000001px;top:510.20px;font-size:10px;line-height:11.50px;color:#000;font-weight:400;white-space:nowrap;letter-spacing:0.2px;width:200px;text-align:right;-webkit-text-stroke:0.15px;">0</div>
<div style="position:absolute;left:702.1400000000001px;top:510.20px;font-size:10px;line-height:11.50px;color:#000;font-weight:400;white-space:nowrap;letter-spacing:0.2px;width:200px;text-align:right;-webkit-text-stroke:0.15px;">0</div>
<div style="position:absolute;left:762.6600000000001px;top:510.20px;font-size:10px;line-height:11.50px;color:#000;font-weight:400;white-space:nowrap;letter-spacing:0.2px;width:200px;text-align:right;-webkit-text-stroke:0.15px;">0</div>
<div style="position:absolute;left:823.1800000000001px;top:510.20px;font-size:10px;line-height:11.50px;color:#000;font-weight:400;white-space:nowrap;letter-spacing:0.2px;width:200px;text-align:right;-webkit-text-stroke:0.15px;">0</div>
<div style="position:absolute;left:883.7px;top:510.20px;font-size:10px;line-height:11.50px;color:#000;font-weight:400;white-space:nowrap;letter-spacing:0.2px;width:200px;text-align:right;-webkit-text-stroke:0.15px;">0</div>
<div style="position:absolute;left:944.22px;top:510.20px;font-size:10px;line-height:11.50px;color:#000;font-weight:400;white-space:nowrap;letter-spacing:0.2px;width:200px;text-align:right;-webkit-text-stroke:0.15px;">0</div>
<div style="position:absolute;left:1004.74px;top:510.20px;font-size:10px;line-height:11.50px;color:#000;font-weight:400;white-space:nowrap;letter-spacing:0.2px;width:200px;text-align:right;-webkit-text-stroke:0.15px;">0</div>
<div style="position:absolute;left:1065.26px;top:510.20px;font-size:10px;line-height:11.50px;color:#000;font-weight:400;white-space:nowrap;letter-spacing:0.2px;width:200px;text-align:right;-webkit-text-stroke:0.15px;">0</div>
<div style="position:absolute;left:1125.8px;top:510.20px;font-size:10px;line-height:11.50px;color:#000;font-weight:400;white-space:nowrap;letter-spacing:0.2px;width:200px;text-align:right;-webkit-text-stroke:0.15px;">0</div>
<div style="position:absolute;left:74.7px;top:524.85px;font-size:10px;line-height:11.50px;color:#000;font-weight:400;white-space:nowrap;letter-spacing:0.8px;-webkit-text-stroke:0.15px;">Taxes Payable</div>
<div style="position:absolute;left:334.79999999999995px;top:524.85px;font-size:10px;line-height:11.50px;color:#000;font-weight:400;white-space:nowrap;letter-spacing:0.8px;width:69.0px;text-align:center;-webkit-text-stroke:0.15px;">$000's</div>
<div style="position:absolute;left:339.02000000000004px;top:524.85px;font-size:10px;line-height:11.50px;color:#00b050;font-weight:400;white-space:nowrap;letter-spacing:0.2px;width:200px;text-align:right;-webkit-text-stroke:0.15px;">632</div>
<div style="position:absolute;left:399.54px;top:524.85px;font-size:10px;line-height:11.50px;color:#00b050;font-weight:400;white-space:nowrap;letter-spacing:0.2px;width:200px;text-align:right;-webkit-text-stroke:0.15px;">780</div>
<div style="position:absolute;left:460.06px;top:524.85px;font-size:10px;line-height:11.50px;color:#00b050;font-weight:400;white-space:nowrap;letter-spacing:0.2px;width:200px;text-align:right;-webkit-text-stroke:0.15px;">663</div>
<div style="position:absolute;left:520.58px;top:524.85px;font-size:10px;line-height:11.50px;color:#00b050;font-weight:400;white-space:nowrap;letter-spacing:0.2px;width:200px;text-align:right;-webkit-text-stroke:0.15px;">935</div>
<div style="position:absolute;left:581.1000000000001px;top:524.85px;font-size:10px;line-height:11.50px;color:#000;font-weight:400;white-space:nowrap;letter-spacing:0.2px;width:200px;text-align:right;-webkit-text-stroke:0.15px;">1,089</div>
<div style="position:absolute;left:641.6200000000001px;top:524.85px;font-size:10px;line-height:11.50px;color:#000;font-weight:400;white-space:nowrap;letter-spacing:0.2px;width:200px;text-align:right;-webkit-text-stroke:0.15px;">1,270</div>
<div style="position:absolute;left:702.1400000000001px;top:524.85px;font-size:10px;line-height:11.50px;color:#000;font-weight:400;white-space:nowrap;letter-spacing:0.2px;width:200px;text-align:right;-webkit-text-stroke:0.15px;">1,482</div>
<div style="position:absolute;left:762.6600000000001px;top:524.85px;font-size:10px;line-height:11.50px;color:#000;font-weight:400;white-space:nowrap;letter-spacing:0.2px;width:200px;text-align:right;-webkit-text-stroke:0.15px;">1,730</div>
<div style="position:absolute;left:823.1800000000001px;top:524.85px;font-size:10px;line-height:11.50px;color:#000;font-weight:400;white-space:nowrap;letter-spacing:0.2px;width:200px;text-align:right;-webkit-text-stroke:0.15px;">2,021</div>
<div style="position:absolute;left:883.7px;top:524.85px;font-size:10px;line-height:11.50px;color:#000;font-weight:400;white-space:nowrap;letter-spacing:0.2px;width:200px;text-align:right;-webkit-text-stroke:0.15px;">2,363</div>
<div style="position:absolute;left:944.22px;top:524.85px;font-size:10px;line-height:11.50px;color:#000;font-weight:400;white-space:nowrap;letter-spacing:0.2px;width:200px;text-align:right;-webkit-text-stroke:0.15px;">2,765</div>
<div style="position:absolute;left:1004.74px;top:524.85px;font-size:10px;line-height:11.50px;color:#000;font-weight:400;white-space:nowrap;letter-spacing:0.2px;width:200px;text-align:right;-webkit-text-stroke:0.15px;">3,236</div>
<div style="position:absolute;left:1065.26px;top:524.85px;font-size:10px;line-height:11.50px;color:#000;font-weight:400;white-space:nowrap;letter-spacing:0.2px;width:200px;text-align:right;-webkit-text-stroke:0.15px;">3,791</div>
<div style="position:absolute;left:1125.8px;top:524.85px;font-size:10px;line-height:11.50px;color:#000;font-weight:400;white-space:nowrap;letter-spacing:0.2px;width:200px;text-align:right;-webkit-text-stroke:0.15px;">4,443</div>
<div style="position:absolute;left:74.7px;top:539.50px;font-size:10px;line-height:11.50px;color:#000;font-weight:400;white-space:nowrap;letter-spacing:0.8px;-webkit-text-stroke:0.15px;">Other Payable</div>
<div style="position:absolute;left:334.79999999999995px;top:539.50px;font-size:10px;line-height:11.50px;color:#000;font-weight:400;white-space:nowrap;letter-spacing:0.8px;width:69.0px;text-align:center;-webkit-text-stroke:0.15px;">$000's</div>
<div style="position:absolute;left:339.02000000000004px;top:539.50px;font-size:10px;line-height:11.50px;color:#00b050;font-weight:400;white-space:nowrap;letter-spacing:0.2px;width:200px;text-align:right;-webkit-text-stroke:0.15px;">88</div>
<div style="position:absolute;left:399.54px;top:539.50px;font-size:10px;line-height:11.50px;color:#00b050;font-weight:400;white-space:nowrap;letter-spacing:0.2px;width:200px;text-align:right;-webkit-text-stroke:0.15px;">108</div>
<div style="position:absolute;left:460.06px;top:539.50px;font-size:10px;line-height:11.50px;color:#00b050;font-weight:400;white-space:nowrap;letter-spacing:0.2px;width:200px;text-align:right;-webkit-text-stroke:0.15px;">59</div>
<div style="position:absolute;left:520.58px;top:539.50px;font-size:10px;line-height:11.50px;color:#00b050;font-weight:400;white-space:nowrap;letter-spacing:0.2px;width:200px;text-align:right;-webkit-text-stroke:0.15px;">1,674</div>
<div style="position:absolute;left:581.1000000000001px;top:539.50px;font-size:10px;line-height:11.50px;color:#000;font-weight:400;white-space:nowrap;letter-spacing:0.2px;width:200px;text-align:right;-webkit-text-stroke:0.15px;">1,951</div>
<div style="position:absolute;left:641.6200000000001px;top:539.50px;font-size:10px;line-height:11.50px;color:#000;font-weight:400;white-space:nowrap;letter-spacing:0.2px;width:200px;text-align:right;-webkit-text-stroke:0.15px;">2,275</div>
<div style="position:absolute;left:702.1400000000001px;top:539.50px;font-size:10px;line-height:11.50px;color:#000;font-weight:400;white-space:nowrap;letter-spacing:0.2px;width:200px;text-align:right;-webkit-text-stroke:0.15px;">2,655</div>
<div style="position:absolute;left:762.6600000000001px;top:539.50px;font-size:10px;line-height:11.50px;color:#000;font-weight:400;white-space:nowrap;letter-spacing:0.2px;width:200px;text-align:right;-webkit-text-stroke:0.15px;">3,100</div>
<div style="position:absolute;left:823.1800000000001px;top:539.50px;font-size:10px;line-height:11.50px;color:#000;font-weight:400;white-space:nowrap;letter-spacing:0.2px;width:200px;text-align:right;-webkit-text-stroke:0.15px;">3,621</div>
<div style="position:absolute;left:883.7px;top:539.50px;font-size:10px;line-height:11.50px;color:#000;font-weight:400;white-space:nowrap;letter-spacing:0.2px;width:200px;text-align:right;-webkit-text-stroke:0.15px;">4,234</div>
<div style="position:absolute;left:944.22px;top:539.50px;font-size:10px;line-height:11.50px;color:#000;font-weight:400;white-space:nowrap;letter-spacing:0.2px;width:200px;text-align:right;-webkit-text-stroke:0.15px;">4,953</div>
<div style="position:absolute;left:1004.74px;top:539.50px;font-size:10px;line-height:11.50px;color:#000;font-weight:400;white-space:nowrap;letter-spacing:0.2px;width:200px;text-align:right;-webkit-text-stroke:0.15px;">5,798</div>
<div style="position:absolute;left:1065.26px;top:539.50px;font-size:10px;line-height:11.50px;color:#000;font-weight:400;white-space:nowrap;letter-spacing:0.2px;width:200px;text-align:right;-webkit-text-stroke:0.15px;">6,792</div>
<div style="position:absolute;left:1125.8px;top:539.50px;font-size:10px;line-height:11.50px;color:#000;font-weight:400;white-space:nowrap;letter-spacing:0.2px;width:200px;text-align:right;-webkit-text-stroke:0.15px;">7,960</div>
<div style="position:absolute;left:74.7px;top:554.15px;font-size:10px;line-height:11.50px;color:#000;font-weight:400;white-space:nowrap;letter-spacing:0.8px;-webkit-text-stroke:0.15px;">Provisions</div>
<div style="position:absolute;left:334.79999999999995px;top:554.15px;font-size:10px;line-height:11.50px;color:#000;font-weight:400;white-space:nowrap;letter-spacing:0.8px;width:69.0px;text-align:center;-webkit-text-stroke:0.15px;">$000's</div>
<div style="position:absolute;left:339.02000000000004px;top:554.15px;font-size:10px;line-height:11.50px;color:#00b050;font-weight:400;white-space:nowrap;letter-spacing:0.2px;width:200px;text-align:right;-webkit-text-stroke:0.15px;">474</div>
<div style="position:absolute;left:399.54px;top:554.15px;font-size:10px;line-height:11.50px;color:#00b050;font-weight:400;white-space:nowrap;letter-spacing:0.2px;width:200px;text-align:right;-webkit-text-stroke:0.15px;">658</div>
<div style="position:absolute;left:460.06px;top:554.15px;font-size:10px;line-height:11.50px;color:#00b050;font-weight:400;white-space:nowrap;letter-spacing:0.2px;width:200px;text-align:right;-webkit-text-stroke:0.15px;">659</div>
<div style="position:absolute;left:520.58px;top:554.15px;font-size:10px;line-height:11.50px;color:#00b050;font-weight:400;white-space:nowrap;letter-spacing:0.2px;width:200px;text-align:right;-webkit-text-stroke:0.15px;">657</div>
<div style="position:absolute;left:581.1000000000001px;top:554.15px;font-size:10px;line-height:11.50px;color:#000;font-weight:400;white-space:nowrap;letter-spacing:0.2px;width:200px;text-align:right;-webkit-text-stroke:0.15px;">765</div>
<div style="position:absolute;left:641.6200000000001px;top:554.15px;font-size:10px;line-height:11.50px;color:#000;font-weight:400;white-space:nowrap;letter-spacing:0.2px;width:200px;text-align:right;-webkit-text-stroke:0.15px;">892</div>
<div style="position:absolute;left:702.1400000000001px;top:554.15px;font-size:10px;line-height:11.50px;color:#000;font-weight:400;white-space:nowrap;letter-spacing:0.2px;width:200px;text-align:right;-webkit-text-stroke:0.15px;">1,041</div>
<div style="position:absolute;left:762.6600000000001px;top:554.15px;font-size:10px;line-height:11.50px;color:#000;font-weight:400;white-space:nowrap;letter-spacing:0.2px;width:200px;text-align:right;-webkit-text-stroke:0.15px;">1,215</div>
<div style="position:absolute;left:823.1800000000001px;top:554.15px;font-size:10px;line-height:11.50px;color:#000;font-weight:400;white-space:nowrap;letter-spacing:0.2px;width:200px;text-align:right;-webkit-text-stroke:0.15px;">1,420</div>
<div style="position:absolute;left:883.7px;top:554.15px;font-size:10px;line-height:11.50px;color:#000;font-weight:400;white-space:nowrap;letter-spacing:0.2px;width:200px;text-align:right;-webkit-text-stroke:0.15px;">1,660</div>
<div style="position:absolute;left:944.22px;top:554.15px;font-size:10px;line-height:11.50px;color:#000;font-weight:400;white-space:nowrap;letter-spacing:0.2px;width:200px;text-align:right;-webkit-text-stroke:0.15px;">1,942</div>
<div style="position:absolute;left:1004.74px;top:554.15px;font-size:10px;line-height:11.50px;color:#000;font-weight:400;white-space:nowrap;letter-spacing:0.2px;width:200px;text-align:right;-webkit-text-stroke:0.15px;">2,273</div>
<div style="position:absolute;left:1065.26px;top:554.15px;font-size:10px;line-height:11.50px;color:#000;font-weight:400;white-space:nowrap;letter-spacing:0.2px;width:200px;text-align:right;-webkit-text-stroke:0.15px;">2,663</div>
<div style="position:absolute;left:1125.8px;top:554.15px;font-size:10px;line-height:11.50px;color:#000;font-weight:400;white-space:nowrap;letter-spacing:0.2px;width:200px;text-align:right;-webkit-text-stroke:0.15px;">3,121</div>
<div style="position:absolute;left:74.7px;top:568.80px;font-size:10px;line-height:11.50px;color:#000;font-weight:400;white-space:nowrap;letter-spacing:0.8px;-webkit-text-stroke:0.15px;">Deferred Liabilities</div>
<div style="position:absolute;left:334.79999999999995px;top:568.80px;font-size:10px;line-height:11.50px;color:#000;font-weight:400;white-space:nowrap;letter-spacing:0.8px;width:69.0px;text-align:center;-webkit-text-stroke:0.15px;">$000's</div>
<div style="position:absolute;left:339.02000000000004px;top:568.80px;font-size:10px;line-height:11.50px;color:#00b050;font-weight:400;white-space:nowrap;letter-spacing:0.2px;width:200px;text-align:right;-webkit-text-stroke:0.15px;">64</div>
<div style="position:absolute;left:399.54px;top:568.80px;font-size:10px;line-height:11.50px;color:#00b050;font-weight:400;white-space:nowrap;letter-spacing:0.2px;width:200px;text-align:right;-webkit-text-stroke:0.15px;">79</div>
<div style="position:absolute;left:460.06px;top:568.80px;font-size:10px;line-height:11.50px;color:#00b050;font-weight:400;white-space:nowrap;letter-spacing:0.2px;width:200px;text-align:right;-webkit-text-stroke:0.15px;">43</div>
<div style="position:absolute;left:520.58px;top:568.80px;font-size:10px;line-height:11.50px;color:#00b050;font-weight:400;white-space:nowrap;letter-spacing:0.2px;width:200px;text-align:right;-webkit-text-stroke:0.15px;">0</div>
<div style="position:absolute;left:581.1000000000001px;top:568.80px;font-size:10px;line-height:11.50px;color:#000;font-weight:400;white-space:nowrap;letter-spacing:0.2px;width:200px;text-align:right;-webkit-text-stroke:0.15px;">0</div>
<div style="position:absolute;left:641.6200000000001px;top:568.80px;font-size:10px;line-height:11.50px;color:#000;font-weight:400;white-space:nowrap;letter-spacing:0.2px;width:200px;text-align:right;-webkit-text-stroke:0.15px;">0</div>
<div style="position:absolute;left:702.1400000000001px;top:568.80px;font-size:10px;line-height:11.50px;color:#000;font-weight:400;white-space:nowrap;letter-spacing:0.2px;width:200px;text-align:right;-webkit-text-stroke:0.15px;">0</div>
<div style="position:absolute;left:762.6600000000001px;top:568.80px;font-size:10px;line-height:11.50px;color:#000;font-weight:400;white-space:nowrap;letter-spacing:0.2px;width:200px;text-align:right;-webkit-text-stroke:0.15px;">0</div>
<div style="position:absolute;left:823.1800000000001px;top:568.80px;font-size:10px;line-height:11.50px;color:#000;font-weight:400;white-space:nowrap;letter-spacing:0.2px;width:200px;text-align:right;-webkit-text-stroke:0.15px;">0</div>
<div style="position:absolute;left:883.7px;top:568.80px;font-size:10px;line-height:11.50px;color:#000;font-weight:400;white-space:nowrap;letter-spacing:0.2px;width:200px;text-align:right;-webkit-text-stroke:0.15px;">0</div>
<div style="position:absolute;left:944.22px;top:568.80px;font-size:10px;line-height:11.50px;color:#000;font-weight:400;white-space:nowrap;letter-spacing:0.2px;width:200px;text-align:right;-webkit-text-stroke:0.15px;">0</div>
<div style="position:absolute;left:1004.74px;top:568.80px;font-size:10px;line-height:11.50px;color:#000;font-weight:400;white-space:nowrap;letter-spacing:0.2px;width:200px;text-align:right;-webkit-text-stroke:0.15px;">0</div>
<div style="position:absolute;left:1065.26px;top:568.80px;font-size:10px;line-height:11.50px;color:#000;font-weight:400;white-space:nowrap;letter-spacing:0.2px;width:200px;text-align:right;-webkit-text-stroke:0.15px;">0</div>
<div style="position:absolute;left:1125.8px;top:568.80px;font-size:10px;line-height:11.50px;color:#000;font-weight:400;white-space:nowrap;letter-spacing:0.2px;width:200px;text-align:right;-webkit-text-stroke:0.15px;">0</div>
<div style="position:absolute;left:74.7px;top:583.45px;font-size:10px;line-height:11.50px;color:#000;font-weight:400;white-space:nowrap;letter-spacing:0.8px;-webkit-text-stroke:0.15px;">Derivative and Hedging Liabilities</div>
<div style="position:absolute;left:334.79999999999995px;top:583.45px;font-size:10px;line-height:11.50px;color:#000;font-weight:400;white-space:nowrap;letter-spacing:0.8px;width:69.0px;text-align:center;-webkit-text-stroke:0.15px;">$000's</div>
<div style="position:absolute;left:339.02000000000004px;top:583.45px;font-size:10px;line-height:11.50px;color:#00b050;font-weight:400;white-space:nowrap;letter-spacing:0.2px;width:200px;text-align:right;-webkit-text-stroke:0.15px;">52</div>
<div style="position:absolute;left:399.54px;top:583.45px;font-size:10px;line-height:11.50px;color:#00b050;font-weight:400;white-space:nowrap;letter-spacing:0.2px;width:200px;text-align:right;-webkit-text-stroke:0.15px;">41</div>
<div style="position:absolute;left:460.06px;top:583.45px;font-size:10px;line-height:11.50px;color:#00b050;font-weight:400;white-space:nowrap;letter-spacing:0.2px;width:200px;text-align:right;-webkit-text-stroke:0.15px;">4</div>
<div style="position:absolute;left:520.58px;top:583.45px;font-size:10px;line-height:11.50px;color:#00b050;font-weight:400;white-space:nowrap;letter-spacing:0.2px;width:200px;text-align:right;-webkit-text-stroke:0.15px;">0</div>
<div style="position:absolute;left:581.1000000000001px;top:583.45px;font-size:10px;line-height:11.50px;color:#000;font-weight:400;white-space:nowrap;letter-spacing:0.2px;width:200px;text-align:right;-webkit-text-stroke:0.15px;">0</div>
<div style="position:absolute;left:641.6200000000001px;top:583.45px;font-size:10px;line-height:11.50px;color:#000;font-weight:400;white-space:nowrap;letter-spacing:0.2px;width:200px;text-align:right;-webkit-text-stroke:0.15px;">0</div>
<div style="position:absolute;left:702.1400000000001px;top:583.45px;font-size:10px;line-height:11.50px;color:#000;font-weight:400;white-space:nowrap;letter-spacing:0.2px;width:200px;text-align:right;-webkit-text-stroke:0.15px;">0</div>
<div style="position:absolute;left:762.6600000000001px;top:583.45px;font-size:10px;line-height:11.50px;color:#000;font-weight:400;white-space:nowrap;letter-spacing:0.2px;width:200px;text-align:right;-webkit-text-stroke:0.15px;">0</div>
<div style="position:absolute;left:823.1800000000001px;top:583.45px;font-size:10px;line-height:11.50px;color:#000;font-weight:400;white-space:nowrap;letter-spacing:0.2px;width:200px;text-align:right;-webkit-text-stroke:0.15px;">0</div>
<div style="position:absolute;left:883.7px;top:583.45px;font-size:10px;line-height:11.50px;color:#000;font-weight:400;white-space:nowrap;letter-spacing:0.2px;width:200px;text-align:right;-webkit-text-stroke:0.15px;">0</div>
<div style="position:absolute;left:944.22px;top:583.45px;font-size:10px;line-height:11.50px;color:#000;font-weight:400;white-space:nowrap;letter-spacing:0.2px;width:200px;text-align:right;-webkit-text-stroke:0.15px;">0</div>
<div style="position:absolute;left:1004.74px;top:583.45px;font-size:10px;line-height:11.50px;color:#000;font-weight:400;white-space:nowrap;letter-spacing:0.2px;width:200px;text-align:right;-webkit-text-stroke:0.15px;">0</div>
<div style="position:absolute;left:1065.26px;top:583.45px;font-size:10px;line-height:11.50px;color:#000;font-weight:400;white-space:nowrap;letter-spacing:0.2px;width:200px;text-align:right;-webkit-text-stroke:0.15px;">0</div>
<div style="position:absolute;left:1125.8px;top:583.45px;font-size:10px;line-height:11.50px;color:#000;font-weight:400;white-space:nowrap;letter-spacing:0.2px;width:200px;text-align:right;-webkit-text-stroke:0.15px;">0</div>
<div style="position:absolute;left:74.7px;top:598.10px;font-size:10px;line-height:11.50px;color:#000;font-weight:400;white-space:nowrap;letter-spacing:0.8px;-webkit-text-stroke:0.15px;">Employee Provisions</div>
<div style="position:absolute;left:334.79999999999995px;top:598.10px;font-size:10px;line-height:11.50px;color:#000;font-weight:400;white-space:nowrap;letter-spacing:0.8px;width:69.0px;text-align:center;-webkit-text-stroke:0.15px;">$000's</div>
<div style="position:absolute;left:339.02000000000004px;top:598.10px;font-size:10px;line-height:11.50px;color:#00b050;font-weight:400;white-space:nowrap;letter-spacing:0.2px;width:200px;text-align:right;-webkit-text-stroke:0.15px;">75</div>
<div style="position:absolute;left:399.54px;top:598.10px;font-size:10px;line-height:11.50px;color:#00b050;font-weight:400;white-space:nowrap;letter-spacing:0.2px;width:200px;text-align:right;-webkit-text-stroke:0.15px;">108</div>
<div style="position:absolute;left:460.06px;top:598.10px;font-size:10px;line-height:11.50px;color:#00b050;font-weight:400;white-space:nowrap;letter-spacing:0.2px;width:200px;text-align:right;-webkit-text-stroke:0.15px;">98</div>
<div style="position:absolute;left:520.58px;top:598.10px;font-size:10px;line-height:11.50px;color:#00b050;font-weight:400;white-space:nowrap;letter-spacing:0.2px;width:200px;text-align:right;-webkit-text-stroke:0.15px;">110</div>
<div style="position:absolute;left:581.1000000000001px;top:598.10px;font-size:10px;line-height:11.50px;color:#000;font-weight:400;white-space:nowrap;letter-spacing:0.2px;width:200px;text-align:right;-webkit-text-stroke:0.15px;">128</div>
<div style="position:absolute;left:641.6200000000001px;top:598.10px;font-size:10px;line-height:11.50px;color:#000;font-weight:400;white-space:nowrap;letter-spacing:0.2px;width:200px;text-align:right;-webkit-text-stroke:0.15px;">149</div>
<div style="position:absolute;left:702.1400000000001px;top:598.10px;font-size:10px;line-height:11.50px;color:#000;font-weight:400;white-space:nowrap;letter-spacing:0.2px;width:200px;text-align:right;-webkit-text-stroke:0.15px;">174</div>
<div style="position:absolute;left:762.6600000000001px;top:598.10px;font-size:10px;line-height:11.50px;color:#000;font-weight:400;white-space:nowrap;letter-spacing:0.2px;width:200px;text-align:right;-webkit-text-stroke:0.15px;">203</div>
<div style="position:absolute;left:823.1800000000001px;top:598.10px;font-size:10px;line-height:11.50px;color:#000;font-weight:400;white-space:nowrap;letter-spacing:0.2px;width:200px;text-align:right;-webkit-text-stroke:0.15px;">238</div>
<div style="position:absolute;left:883.7px;top:598.10px;font-size:10px;line-height:11.50px;color:#000;font-weight:400;white-space:nowrap;letter-spacing:0.2px;width:200px;text-align:right;-webkit-text-stroke:0.15px;">278</div>
<div style="position:absolute;left:944.22px;top:598.10px;font-size:10px;line-height:11.50px;color:#000;font-weight:400;white-space:nowrap;letter-spacing:0.2px;width:200px;text-align:right;-webkit-text-stroke:0.15px;">325</div>
<div style="position:absolute;left:1004.74px;top:598.10px;font-size:10px;line-height:11.50px;color:#000;font-weight:400;white-space:nowrap;letter-spacing:0.2px;width:200px;text-align:right;-webkit-text-stroke:0.15px;">381</div>
<div style="position:absolute;left:1065.26px;top:598.10px;font-size:10px;line-height:11.50px;color:#000;font-weight:400;white-space:nowrap;letter-spacing:0.2px;width:200px;text-align:right;-webkit-text-stroke:0.15px;">446</div>
<div style="position:absolute;left:1125.8px;top:598.10px;font-size:10px;line-height:11.50px;color:#000;font-weight:400;white-space:nowrap;letter-spacing:0.2px;width:200px;text-align:right;-webkit-text-stroke:0.15px;">522</div>
<div style="position:absolute;left:74.7px;top:612.75px;font-size:10px;line-height:11.50px;color:#000;font-weight:400;white-space:nowrap;letter-spacing:0.8px;-webkit-text-stroke:0.15px;">Deferred Tax Liabilities</div>
<div style="position:absolute;left:334.79999999999995px;top:612.75px;font-size:10px;line-height:11.50px;color:#000;font-weight:400;white-space:nowrap;letter-spacing:0.8px;width:69.0px;text-align:center;-webkit-text-stroke:0.15px;">$000's</div>
<div style="position:absolute;left:339.02000000000004px;top:612.75px;font-size:10px;line-height:11.50px;color:#00b050;font-weight:400;white-space:nowrap;letter-spacing:0.2px;width:200px;text-align:right;-webkit-text-stroke:0.15px;">712</div>
<div style="position:absolute;left:399.54px;top:612.75px;font-size:10px;line-height:11.50px;color:#00b050;font-weight:400;white-space:nowrap;letter-spacing:0.2px;width:200px;text-align:right;-webkit-text-stroke:0.15px;">620</div>
<div style="position:absolute;left:460.06px;top:612.75px;font-size:10px;line-height:11.50px;color:#00b050;font-weight:400;white-space:nowrap;letter-spacing:0.2px;width:200px;text-align:right;-webkit-text-stroke:0.15px;">698</div>
<div style="position:absolute;left:520.58px;top:612.75px;font-size:10px;line-height:11.50px;color:#00b050;font-weight:400;white-space:nowrap;letter-spacing:0.2px;width:200px;text-align:right;-webkit-text-stroke:0.15px;">926</div>
<div style="position:absolute;left:581.1000000000001px;top:612.75px;font-size:10px;line-height:11.50px;color:#000;font-weight:400;white-space:nowrap;letter-spacing:0.2px;width:200px;text-align:right;-webkit-text-stroke:0.15px;">1,078</div>
<div style="position:absolute;left:641.6200000000001px;top:612.75px;font-size:10px;line-height:11.50px;color:#000;font-weight:400;white-space:nowrap;letter-spacing:0.2px;width:200px;text-align:right;-webkit-text-stroke:0.15px;">1,258</div>
<div style="position:absolute;left:702.1400000000001px;top:612.75px;font-size:10px;line-height:11.50px;color:#000;font-weight:400;white-space:nowrap;letter-spacing:0.2px;width:200px;text-align:right;-webkit-text-stroke:0.15px;">1,467</div>
<div style="position:absolute;left:762.6600000000001px;top:612.75px;font-size:10px;line-height:11.50px;color:#000;font-weight:400;white-space:nowrap;letter-spacing:0.2px;width:200px;text-align:right;-webkit-text-stroke:0.15px;">1,713</div>
<div style="position:absolute;left:823.1800000000001px;top:612.75px;font-size:10px;line-height:11.50px;color:#000;font-weight:400;white-space:nowrap;letter-spacing:0.2px;width:200px;text-align:right;-webkit-text-stroke:0.15px;">2,002</div>
<div style="position:absolute;left:883.7px;top:612.75px;font-size:10px;line-height:11.50px;color:#000;font-weight:400;white-space:nowrap;letter-spacing:0.2px;width:200px;text-align:right;-webkit-text-stroke:0.15px;">2,340</div>
<div style="position:absolute;left:944.22px;top:612.75px;font-size:10px;line-height:11.50px;color:#000;font-weight:400;white-space:nowrap;letter-spacing:0.2px;width:200px;text-align:right;-webkit-text-stroke:0.15px;">2,738</div>
<div style="position:absolute;left:1004.74px;top:612.75px;font-size:10px;line-height:11.50px;color:#000;font-weight:400;white-space:nowrap;letter-spacing:0.2px;width:200px;text-align:right;-webkit-text-stroke:0.15px;">3,205</div>
<div style="position:absolute;left:1065.26px;top:612.75px;font-size:10px;line-height:11.50px;color:#000;font-weight:400;white-space:nowrap;letter-spacing:0.2px;width:200px;text-align:right;-webkit-text-stroke:0.15px;">3,754</div>
<div style="position:absolute;left:1125.8px;top:612.75px;font-size:10px;line-height:11.50px;color:#000;font-weight:400;white-space:nowrap;letter-spacing:0.2px;width:200px;text-align:right;-webkit-text-stroke:0.15px;">4,400</div>
<div style="position:absolute;left:74.7px;top:627.40px;font-size:10px;line-height:11.50px;color:#000;font-weight:700;white-space:nowrap;">Other BS Accounts</div>
<div style="position:absolute;left:334.5px;top:627.40px;font-size:10px;line-height:11.50px;color:#000;font-weight:700;white-space:nowrap;letter-spacing:0.2px;width:69.0px;text-align:center;">$000's</div>
<div style="position:absolute;left:339.02000000000004px;top:627.40px;font-size:10px;line-height:11.50px;color:#000;font-weight:700;white-space:nowrap;letter-spacing:0.2px;width:200px;text-align:right;">-482</div>
<div style="position:absolute;left:399.54px;top:627.40px;font-size:10px;line-height:11.50px;color:#000;font-weight:700;white-space:nowrap;letter-spacing:0.2px;width:200px;text-align:right;">-514</div>
<div style="position:absolute;left:460.06px;top:627.40px;font-size:10px;line-height:11.50px;color:#000;font-weight:700;white-space:nowrap;letter-spacing:0.2px;width:200px;text-align:right;">-485</div>
<div style="position:absolute;left:520.58px;top:627.40px;font-size:10px;line-height:11.50px;color:#000;font-weight:700;white-space:nowrap;letter-spacing:0.2px;width:200px;text-align:right;">-2,749</div>
<div style="position:absolute;left:581.1000000000001px;top:627.40px;font-size:10px;line-height:11.50px;color:#000;font-weight:700;white-space:nowrap;letter-spacing:0.2px;width:200px;text-align:right;">-3,203</div>
<div style="position:absolute;left:641.6200000000001px;top:627.40px;font-size:10px;line-height:11.50px;color:#000;font-weight:700;white-space:nowrap;letter-spacing:0.2px;width:200px;text-align:right;">-3,735</div>
<div style="position:absolute;left:702.1400000000001px;top:627.40px;font-size:10px;line-height:11.50px;color:#000;font-weight:700;white-space:nowrap;letter-spacing:0.2px;width:200px;text-align:right;">-4,358</div>
<div style="position:absolute;left:762.6600000000001px;top:627.40px;font-size:10px;line-height:11.50px;color:#000;font-weight:700;white-space:nowrap;letter-spacing:0.2px;width:200px;text-align:right;">-5,089</div>
<div style="position:absolute;left:823.1800000000001px;top:627.40px;font-size:10px;line-height:11.50px;color:#000;font-weight:700;white-space:nowrap;letter-spacing:0.2px;width:200px;text-align:right;">-5,946</div>
<div style="position:absolute;left:883.7px;top:627.40px;font-size:10px;line-height:11.50px;color:#000;font-weight:700;white-space:nowrap;letter-spacing:0.2px;width:200px;text-align:right;">-6,951</div>
<div style="position:absolute;left:944.22px;top:627.40px;font-size:10px;line-height:11.50px;color:#000;font-weight:700;white-space:nowrap;letter-spacing:0.2px;width:200px;text-align:right;">-8,132</div>
<div style="position:absolute;left:1004.74px;top:627.40px;font-size:10px;line-height:11.50px;color:#000;font-weight:700;white-space:nowrap;letter-spacing:0.2px;width:200px;text-align:right;">-9,520</div>
<div style="position:absolute;left:1065.26px;top:627.40px;font-size:10px;line-height:11.50px;color:#000;font-weight:700;white-space:nowrap;letter-spacing:0.2px;width:200px;text-align:right;">-11,150</div>
<div style="position:absolute;left:1125.8px;top:627.40px;font-size:10px;line-height:11.50px;color:#000;font-weight:700;white-space:nowrap;letter-spacing:0.2px;width:200px;text-align:right;">-13,068</div>
<div style="position:absolute;left:74.7px;top:642.05px;font-size:10px;line-height:11.50px;color:#000;font-weight:700;white-space:nowrap;">Change in Other BS Accounts</div>
<div style="position:absolute;left:334.5px;top:642.05px;font-size:10px;line-height:11.50px;color:#000;font-weight:700;white-space:nowrap;letter-spacing:0.2px;width:69.0px;text-align:center;">$000's</div>
<div style="position:absolute;left:399.54px;top:642.05px;font-size:10px;line-height:11.50px;color:#000;font-weight:700;white-space:nowrap;letter-spacing:0.2px;width:200px;text-align:right;">31</div>
<div style="position:absolute;left:460.06px;top:642.05px;font-size:10px;line-height:11.50px;color:#000;font-weight:700;white-space:nowrap;letter-spacing:0.2px;width:200px;text-align:right;">-29</div>
<div style="position:absolute;left:520.58px;top:642.05px;font-size:10px;line-height:11.50px;color:#000;font-weight:700;white-space:nowrap;letter-spacing:0.2px;width:200px;text-align:right;">2,265</div>
<div style="position:absolute;left:581.1000000000001px;top:642.05px;font-size:10px;line-height:11.50px;color:#000;font-weight:700;white-space:nowrap;letter-spacing:0.2px;width:200px;text-align:right;">454</div>
<div style="position:absolute;left:641.6200000000001px;top:642.05px;font-size:10px;line-height:11.50px;color:#000;font-weight:700;white-space:nowrap;letter-spacing:0.2px;width:200px;text-align:right;">532</div>
<div style="position:absolute;left:702.1400000000001px;top:642.05px;font-size:10px;line-height:11.50px;color:#000;font-weight:700;white-space:nowrap;letter-spacing:0.2px;width:200px;text-align:right;">623</div>
<div style="position:absolute;left:762.6600000000001px;top:642.05px;font-size:10px;line-height:11.50px;color:#000;font-weight:700;white-space:nowrap;letter-spacing:0.2px;width:200px;text-align:right;">731</div>
<div style="position:absolute;left:823.1800000000001px;top:642.05px;font-size:10px;line-height:11.50px;color:#000;font-weight:700;white-space:nowrap;letter-spacing:0.2px;width:200px;text-align:right;">857</div>
<div style="position:absolute;left:883.7px;top:642.05px;font-size:10px;line-height:11.50px;color:#000;font-weight:700;white-space:nowrap;letter-spacing:0.2px;width:200px;text-align:right;">1,006</div>
<div style="position:absolute;left:944.22px;top:642.05px;font-size:10px;line-height:11.50px;color:#000;font-weight:700;white-space:nowrap;letter-spacing:0.2px;width:200px;text-align:right;">1,181</div>
<div style="position:absolute;left:1004.74px;top:642.05px;font-size:10px;line-height:11.50px;color:#000;font-weight:700;white-space:nowrap;letter-spacing:0.2px;width:200px;text-align:right;">1,387</div>
<div style="position:absolute;left:1065.26px;top:642.05px;font-size:10px;line-height:11.50px;color:#000;font-weight:700;white-space:nowrap;letter-spacing:0.2px;width:200px;text-align:right;">1,631</div>
<div style="position:absolute;left:1125.8px;top:642.05px;font-size:10px;line-height:11.50px;color:#000;font-weight:700;white-space:nowrap;letter-spacing:0.2px;width:200px;text-align:right;">1,918</div>
<div style="position:absolute;left:71.2px;top:273.35px;width:1256.8999999999999px;height:1px;background:repeating-linear-gradient(to right,#333 0,#333 1px,transparent 1px,transparent 2px);"></div>
<div style="position:absolute;left:71.2px;top:287.0px;width:1256.8999999999999px;height:1px;background:repeating-linear-gradient(to right,#333 0,#333 1px,transparent 1px,transparent 2px);"></div>
<div style="position:absolute;left:71.2px;top:273.35px;width:1px;height:14.649999999999977px;background:repeating-linear-gradient(to bottom,#555 0,#555 1px,transparent 1px,transparent 2px);"></div>
<div style="position:absolute;left:1327.6px;top:273.35px;width:1px;height:14.649999999999977px;background:repeating-linear-gradient(to bottom,#555 0,#555 1px,transparent 1px,transparent 2px);"></div>
<div style="position:absolute;left:71.2px;top:639.6px;width:1256.8999999999999px;height:1px;background:repeating-linear-gradient(to right,#333 0,#333 1px,transparent 1px,transparent 2px);"></div>
<div style="position:absolute;left:71.2px;top:653.25px;width:1256.8999999999999px;height:1px;background:repeating-linear-gradient(to right,#333 0,#333 1px,transparent 1px,transparent 2px);"></div>
<div style="position:absolute;left:71.2px;top:639.6px;width:1px;height:14.649999999999977px;background:repeating-linear-gradient(to bottom,#555 0,#555 1px,transparent 1px,transparent 2px);"></div>
<div style="position:absolute;left:1327.6px;top:639.6px;width:1px;height:14.649999999999977px;background:repeating-linear-gradient(to bottom,#555 0,#555 1px,transparent 1px,transparent 2px);"></div>
<div style="position:absolute;left:75px;top:670.45px;font-size:11px;line-height:12.65px;color:#000;font-weight:700;white-space:nowrap;letter-spacing:0.78px;">As a % of Revenues</div>
<div style="position:absolute;left:330px;top:686.00px;font-size:10px;line-height:11.50px;color:#000;font-weight:700;white-space:nowrap;">% of Rev</div>
<div style="position:absolute;left:399.54px;top:686.00px;font-size:10px;line-height:11.50px;color:#000;font-weight:700;white-space:nowrap;letter-spacing:0.2px;width:200px;text-align:right;">0.0%</div>
<div style="position:absolute;left:460.06px;top:686.00px;font-size:10px;line-height:11.50px;color:#000;font-weight:700;white-space:nowrap;letter-spacing:0.2px;width:200px;text-align:right;">0.0%</div>
<div style="position:absolute;left:520.58px;top:686.00px;font-size:10px;line-height:11.50px;color:#000;font-weight:700;white-space:nowrap;letter-spacing:0.2px;width:200px;text-align:right;">0.0%</div>
<div style="position:absolute;left:581.1000000000001px;top:686.00px;font-size:10px;line-height:11.50px;color:#000;font-weight:700;white-space:nowrap;letter-spacing:0.2px;width:200px;text-align:right;">0.0%</div>
<div style="position:absolute;left:641.6200000000001px;top:686.00px;font-size:10px;line-height:11.50px;color:#000;font-weight:700;white-space:nowrap;letter-spacing:0.2px;width:200px;text-align:right;">0.0%</div>
<div style="position:absolute;left:702.1400000000001px;top:686.00px;font-size:10px;line-height:11.50px;color:#000;font-weight:700;white-space:nowrap;letter-spacing:0.2px;width:200px;text-align:right;">0.0%</div>
<div style="position:absolute;left:762.6600000000001px;top:686.00px;font-size:10px;line-height:11.50px;color:#000;font-weight:700;white-space:nowrap;letter-spacing:0.2px;width:200px;text-align:right;">0.0%</div>
<div style="position:absolute;left:823.1800000000001px;top:686.00px;font-size:10px;line-height:11.50px;color:#000;font-weight:700;white-space:nowrap;letter-spacing:0.2px;width:200px;text-align:right;">0.0%</div>
<div style="position:absolute;left:883.7px;top:686.00px;font-size:10px;line-height:11.50px;color:#000;font-weight:700;white-space:nowrap;letter-spacing:0.2px;width:200px;text-align:right;">0.0%</div>
<div style="position:absolute;left:944.22px;top:686.00px;font-size:10px;line-height:11.50px;color:#000;font-weight:700;white-space:nowrap;letter-spacing:0.2px;width:200px;text-align:right;">0.0%</div>
<div style="position:absolute;left:1004.74px;top:686.00px;font-size:10px;line-height:11.50px;color:#000;font-weight:700;white-space:nowrap;letter-spacing:0.2px;width:200px;text-align:right;">0.0%</div>
<div style="position:absolute;left:1065.26px;top:686.00px;font-size:10px;line-height:11.50px;color:#000;font-weight:700;white-space:nowrap;letter-spacing:0.2px;width:200px;text-align:right;">0.0%</div>
<div style="position:absolute;left:1125.8px;top:686.00px;font-size:10px;line-height:11.50px;color:#000;font-weight:700;white-space:nowrap;letter-spacing:0.2px;width:200px;text-align:right;">0.0%</div>
<div style="position:absolute;left:722.9px;top:683.55px;width:60.5px;height:14.65px;background:#ffffcc;"></div>
<div style="position:absolute;left:722.9px;top:683.55px;width:60.5px;height:1px;background:repeating-linear-gradient(to right,#333 0,#333 1px,transparent 1px,transparent 2px);"></div>
<div style="position:absolute;left:783.0px;top:683.55px;width:1px;height:14.650000000000091px;background:repeating-linear-gradient(to bottom,#555 0,#555 1px,transparent 1px,transparent 2px);"></div>
<div style="position:absolute;left:581.1000000000001px;top:686.00px;font-size:10px;line-height:11.50px;color:#000;font-weight:400;white-space:nowrap;letter-spacing:0.2px;width:200px;text-align:right;-webkit-text-stroke:0.15px;">0.0%</div>
<div style="position:absolute;left:722.0px;top:170.8px;width:1.2px;height:517.2px;background:repeating-linear-gradient(to bottom,#444 0,#444 1px,#fff 1px,#fff 2px);"></div>
<div style="position:absolute;left:0px;top:170.3px;width:1445px;height:1.2px;background:#a6a6a6;"></div>
<div style="position:absolute;left:480.3px;top:9.5px;width:1.2px;height:678.5px;background:#a6a6a6;"></div>
<div style="position:absolute;left:70.7px;top:10.5px;width:1px;height:12.800000000000011px;background:#c8c8c8;"></div>
<div style="position:absolute;left:56.2px;top:11.65px;font-size:10px;line-height:11.50px;color:#222;font-weight:400;white-space:nowrap;width:15.0px;text-align:center;-webkit-text-stroke:0.15px;">A</div>
<div style="position:absolute;left:264.5px;top:10.5px;width:1px;height:12.800000000000011px;background:#c8c8c8;"></div>
<div style="position:absolute;left:71.2px;top:11.65px;font-size:10px;line-height:11.50px;color:#222;font-weight:400;white-space:nowrap;width:193.8px;text-align:center;-webkit-text-stroke:0.15px;">B</div>
<div style="position:absolute;left:333.9px;top:10.5px;width:1px;height:12.800000000000011px;background:#c8c8c8;"></div>
<div style="position:absolute;left:265.0px;top:11.65px;font-size:10px;line-height:11.50px;color:#222;font-weight:400;white-space:nowrap;width:69.39999999999998px;text-align:center;-webkit-text-stroke:0.15px;">C</div>
<div style="position:absolute;left:402.9px;top:10.5px;width:1px;height:12.800000000000011px;background:#c8c8c8;"></div>
<div style="position:absolute;left:334.4px;top:11.65px;font-size:10px;line-height:11.50px;color:#222;font-weight:400;white-space:nowrap;width:69.0px;text-align:center;-webkit-text-stroke:0.15px;">D</div>
<div style="position:absolute;left:480.3px;top:10.5px;width:1px;height:12.800000000000011px;background:#c8c8c8;"></div>
<div style="position:absolute;left:403.4px;top:11.65px;font-size:10px;line-height:11.50px;color:#222;font-weight:400;white-space:nowrap;width:77.40000000000003px;text-align:center;-webkit-text-stroke:0.15px;">E</div>
<div style="position:absolute;left:540.82px;top:10.5px;width:1px;height:12.800000000000011px;background:#c8c8c8;"></div>
<div style="position:absolute;left:480.8px;top:11.65px;font-size:10px;line-height:11.50px;color:#222;font-weight:400;white-space:nowrap;width:60.52000000000004px;text-align:center;-webkit-text-stroke:0.15px;">F</div>
<div style="position:absolute;left:601.34px;top:10.5px;width:1px;height:12.800000000000011px;background:#c8c8c8;"></div>
<div style="position:absolute;left:541.32px;top:11.65px;font-size:10px;line-height:11.50px;color:#222;font-weight:400;white-space:nowrap;width:60.51999999999998px;text-align:center;-webkit-text-stroke:0.15px;">G</div>
<div style="position:absolute;left:661.86px;top:10.5px;width:1px;height:12.800000000000011px;background:#c8c8c8;"></div>
<div style="position:absolute;left:601.84px;top:11.65px;font-size:10px;line-height:11.50px;color:#222;font-weight:400;white-space:nowrap;width:60.51999999999998px;text-align:center;-webkit-text-stroke:0.15px;">H</div>
<div style="position:absolute;left:722.38px;top:10.5px;width:1px;height:12.800000000000011px;background:#c8c8c8;"></div>
<div style="position:absolute;left:662.36px;top:11.65px;font-size:10px;line-height:11.50px;color:#222;font-weight:400;white-space:nowrap;width:60.51999999999998px;text-align:center;-webkit-text-stroke:0.15px;">I</div>
<div style="position:absolute;left:782.9000000000001px;top:10.5px;width:1px;height:12.800000000000011px;background:#c8c8c8;"></div>
<div style="position:absolute;left:722.88px;top:11.65px;font-size:10px;line-height:11.50px;color:#222;font-weight:400;white-space:nowrap;width:60.520000000000095px;text-align:center;-webkit-text-stroke:0.15px;">J</div>
<div style="position:absolute;left:843.4200000000001px;top:10.5px;width:1px;height:12.800000000000011px;background:#c8c8c8;"></div>
<div style="position:absolute;left:783.4000000000001px;top:11.65px;font-size:10px;line-height:11.50px;color:#222;font-weight:400;white-space:nowrap;width:60.51999999999998px;text-align:center;-webkit-text-stroke:0.15px;">K</div>
<div style="position:absolute;left:903.94px;top:10.5px;width:1px;height:12.800000000000011px;background:#c8c8c8;"></div>
<div style="position:absolute;left:843.9200000000001px;top:11.65px;font-size:10px;line-height:11.50px;color:#222;font-weight:400;white-space:nowrap;width:60.51999999999998px;text-align:center;-webkit-text-stroke:0.15px;">L</div>
<div style="position:absolute;left:964.46px;top:10.5px;width:1px;height:12.800000000000011px;background:#c8c8c8;"></div>
<div style="position:absolute;left:904.44px;top:11.65px;font-size:10px;line-height:11.50px;color:#222;font-weight:400;white-space:nowrap;width:60.51999999999998px;text-align:center;-webkit-text-stroke:0.15px;">M</div>
<div style="position:absolute;left:1024.98px;top:10.5px;width:1px;height:12.800000000000011px;background:#c8c8c8;"></div>
<div style="position:absolute;left:964.96px;top:11.65px;font-size:10px;line-height:11.50px;color:#222;font-weight:400;white-space:nowrap;width:60.51999999999998px;text-align:center;-webkit-text-stroke:0.15px;">N</div>
<div style="position:absolute;left:1085.5px;top:10.5px;width:1px;height:12.800000000000011px;background:#c8c8c8;"></div>
<div style="position:absolute;left:1025.48px;top:11.65px;font-size:10px;line-height:11.50px;color:#222;font-weight:400;white-space:nowrap;width:60.51999999999998px;text-align:center;-webkit-text-stroke:0.15px;">O</div>
<div style="position:absolute;left:1146.02px;top:10.5px;width:1px;height:12.800000000000011px;background:#c8c8c8;"></div>
<div style="position:absolute;left:1086.0px;top:11.65px;font-size:10px;line-height:11.50px;color:#222;font-weight:400;white-space:nowrap;width:60.51999999999998px;text-align:center;-webkit-text-stroke:0.15px;">P</div>
<div style="position:absolute;left:1206.54px;top:10.5px;width:1px;height:12.800000000000011px;background:#c8c8c8;"></div>
<div style="position:absolute;left:1146.52px;top:11.65px;font-size:10px;line-height:11.50px;color:#222;font-weight:400;white-space:nowrap;width:60.51999999999998px;text-align:center;-webkit-text-stroke:0.15px;">Q</div>
<div style="position:absolute;left:1267.06px;top:10.5px;width:1px;height:12.800000000000011px;background:#c8c8c8;"></div>
<div style="position:absolute;left:1207.04px;top:11.65px;font-size:10px;line-height:11.50px;color:#222;font-weight:400;white-space:nowrap;width:60.51999999999998px;text-align:center;-webkit-text-stroke:0.15px;">R</div>
<div style="position:absolute;left:1327.6px;top:10.5px;width:1px;height:12.800000000000011px;background:#c8c8c8;"></div>
<div style="position:absolute;left:1267.56px;top:11.65px;font-size:10px;line-height:11.50px;color:#222;font-weight:400;white-space:nowrap;width:60.539999999999964px;text-align:center;-webkit-text-stroke:0.15px;">S</div>
<div style="position:absolute;left:1328.1px;top:9.5px;width:83.5px;height:14.800000000000011px;background:#d2d2d2;"></div>
<div style="position:absolute;left:1328.1px;top:22.30000000000001px;width:83.5px;height:2px;background:#217346;"></div>
<div style="position:absolute;left:1411.1px;top:10.5px;width:1px;height:12.800000000000011px;background:#c8c8c8;"></div>
<div style="position:absolute;left:1328.1px;top:11.65px;font-size:10px;line-height:11.50px;color:#217346;font-weight:400;white-space:nowrap;width:83.5px;text-align:center;-webkit-text-stroke:0.15px;">T</div>
<svg style="position:absolute;left:45.5px;top:14px;" width="8" height="8" viewBox="0 0 8 8"><path d="M8 0 V8 H0 Z" fill="#b8b8b8"/></svg>
<div style="position:absolute;left:2.2px;top:9.699999999999989px;width:14.3px;height:14px;background:#f0f0f0;border:1.3px solid #8c8c8c;"></div>
<div style="position:absolute;left:2.2px;top:12.25px;font-size:10px;line-height:11.50px;color:#555;font-weight:400;white-space:nowrap;width:14.3px;text-align:center;-webkit-text-stroke:0.15px;">1</div>
<div style="position:absolute;left:16.4px;top:9.699999999999989px;width:14.3px;height:14px;background:#f0f0f0;border:1.3px solid #8c8c8c;"></div>
<div style="position:absolute;left:16.4px;top:12.25px;font-size:10px;line-height:11.50px;color:#555;font-weight:400;white-space:nowrap;width:14.3px;text-align:center;-webkit-text-stroke:0.15px;">2</div>
<div style="position:absolute;left:34.3px;top:37.94999999999999px;width:22px;height:1px;background:#d0d0d0;"></div>
<div style="position:absolute;left:34.449999999999996px;top:26.65px;font-size:10px;line-height:11.50px;color:#222;font-weight:400;white-space:nowrap;letter-spacing:0.3px;width:22px;text-align:center;-webkit-text-stroke:0.15px;">1</div>
<div style="position:absolute;left:34.3px;top:52.599999999999966px;width:22px;height:1px;background:#d0d0d0;"></div>
<div style="position:absolute;left:34.449999999999996px;top:41.30px;font-size:10px;line-height:11.50px;color:#222;font-weight:400;white-space:nowrap;letter-spacing:0.3px;width:22px;text-align:center;-webkit-text-stroke:0.15px;">2</div>
<div style="position:absolute;left:34.3px;top:67.25px;width:22px;height:1px;background:#d0d0d0;"></div>
<div style="position:absolute;left:34.449999999999996px;top:55.95px;font-size:10px;line-height:11.50px;color:#222;font-weight:400;white-space:nowrap;letter-spacing:0.3px;width:22px;text-align:center;-webkit-text-stroke:0.15px;">3</div>
<div style="position:absolute;left:34.3px;top:81.89999999999998px;width:22px;height:1px;background:#d0d0d0;"></div>
<div style="position:absolute;left:34.449999999999996px;top:70.60px;font-size:10px;line-height:11.50px;color:#222;font-weight:400;white-space:nowrap;letter-spacing:0.3px;width:22px;text-align:center;-webkit-text-stroke:0.15px;">4</div>
<div style="position:absolute;left:34.3px;top:96.55000000000001px;width:22px;height:1px;background:#d0d0d0;"></div>
<div style="position:absolute;left:34.449999999999996px;top:85.25px;font-size:10px;line-height:11.50px;color:#222;font-weight:400;white-space:nowrap;letter-spacing:0.3px;width:22px;text-align:center;-webkit-text-stroke:0.15px;">5</div>
<div style="position:absolute;left:34.3px;top:111.19999999999999px;width:22px;height:1px;background:#d0d0d0;"></div>
<div style="position:absolute;left:34.449999999999996px;top:99.90px;font-size:10px;line-height:11.50px;color:#222;font-weight:400;white-space:nowrap;letter-spacing:0.3px;width:22px;text-align:center;-webkit-text-stroke:0.15px;">6</div>
<div style="position:absolute;left:34.3px;top:125.85000000000002px;width:22px;height:1px;background:#d0d0d0;"></div>
<div style="position:absolute;left:34.449999999999996px;top:114.55px;font-size:10px;line-height:11.50px;color:#222;font-weight:400;white-space:nowrap;letter-spacing:0.3px;width:22px;text-align:center;-webkit-text-stroke:0.15px;">7</div>
<div style="position:absolute;left:34.3px;top:140.5px;width:22px;height:1px;background:#d0d0d0;"></div>
<div style="position:absolute;left:34.449999999999996px;top:129.20px;font-size:10px;line-height:11.50px;color:#222;font-weight:400;white-space:nowrap;letter-spacing:0.3px;width:22px;text-align:center;-webkit-text-stroke:0.15px;">8</div>
<div style="position:absolute;left:34.3px;top:155.14999999999998px;width:22px;height:1px;background:#d0d0d0;"></div>
<div style="position:absolute;left:34.449999999999996px;top:143.85px;font-size:10px;line-height:11.50px;color:#222;font-weight:400;white-space:nowrap;letter-spacing:0.3px;width:22px;text-align:center;-webkit-text-stroke:0.15px;">9</div>
<div style="position:absolute;left:34.3px;top:169.79999999999995px;width:22px;height:1px;background:#d0d0d0;"></div>
<div style="position:absolute;left:34.449999999999996px;top:158.50px;font-size:10px;line-height:11.50px;color:#222;font-weight:400;white-space:nowrap;letter-spacing:0.3px;width:22px;text-align:center;-webkit-text-stroke:0.15px;">10</div>
<div style="position:absolute;left:34.3px;top:170.8px;width:22px;height:14.65px;background:#d2d2d2;"></div>
<div style="position:absolute;left:54.6px;top:170.8px;width:2px;height:14.65px;background:#217346;"></div>
<div style="position:absolute;left:34.3px;top:184.45px;width:22px;height:1px;background:#d0d0d0;"></div>
<div style="position:absolute;left:34.449999999999996px;top:173.15px;font-size:10px;line-height:11.50px;color:#217346;font-weight:400;white-space:nowrap;letter-spacing:0.3px;width:22px;text-align:center;-webkit-text-stroke:0.15px;">213</div>
<div style="position:absolute;left:34.3px;top:199.09999999999997px;width:22px;height:1px;background:#d0d0d0;"></div>
<div style="position:absolute;left:34.449999999999996px;top:187.80px;font-size:10px;line-height:11.50px;color:#222;font-weight:400;white-space:nowrap;letter-spacing:0.3px;width:22px;text-align:center;-webkit-text-stroke:0.15px;">214</div>
<div style="position:absolute;left:34.3px;top:213.75px;width:22px;height:1px;background:#d0d0d0;"></div>
<div style="position:absolute;left:34.449999999999996px;top:202.45px;font-size:10px;line-height:11.50px;color:#222;font-weight:400;white-space:nowrap;letter-spacing:0.3px;width:22px;text-align:center;-webkit-text-stroke:0.15px;">215</div>
<div style="position:absolute;left:34.3px;top:228.39999999999998px;width:22px;height:1px;background:#d0d0d0;"></div>
<div style="position:absolute;left:34.449999999999996px;top:217.10px;font-size:10px;line-height:11.50px;color:#222;font-weight:400;white-space:nowrap;letter-spacing:0.3px;width:22px;text-align:center;-webkit-text-stroke:0.15px;">216</div>
<div style="position:absolute;left:34.3px;top:243.05px;width:22px;height:1px;background:#d0d0d0;"></div>
<div style="position:absolute;left:34.449999999999996px;top:231.75px;font-size:10px;line-height:11.50px;color:#222;font-weight:400;white-space:nowrap;letter-spacing:0.3px;width:22px;text-align:center;-webkit-text-stroke:0.15px;">217</div>
<div style="position:absolute;left:34.3px;top:257.70000000000005px;width:22px;height:1px;background:#d0d0d0;"></div>
<div style="position:absolute;left:34.449999999999996px;top:246.40px;font-size:10px;line-height:11.50px;color:#222;font-weight:400;white-space:nowrap;letter-spacing:0.3px;width:22px;text-align:center;-webkit-text-stroke:0.15px;">218</div>
<div style="position:absolute;left:34.3px;top:272.35px;width:22px;height:1px;background:#d0d0d0;"></div>
<div style="position:absolute;left:34.449999999999996px;top:261.05px;font-size:10px;line-height:11.50px;color:#222;font-weight:400;white-space:nowrap;letter-spacing:0.3px;width:22px;text-align:center;-webkit-text-stroke:0.15px;">219</div>
<div style="position:absolute;left:34.3px;top:287.0px;width:22px;height:1px;background:#d0d0d0;"></div>
<div style="position:absolute;left:34.449999999999996px;top:275.70px;font-size:10px;line-height:11.50px;color:#222;font-weight:400;white-space:nowrap;letter-spacing:0.3px;width:22px;text-align:center;-webkit-text-stroke:0.15px;">220</div>
<div style="position:absolute;left:34.3px;top:301.65px;width:22px;height:1px;background:#d0d0d0;"></div>
<div style="position:absolute;left:34.449999999999996px;top:290.35px;font-size:10px;line-height:11.50px;color:#222;font-weight:400;white-space:nowrap;letter-spacing:0.3px;width:22px;text-align:center;-webkit-text-stroke:0.15px;">221</div>
<div style="position:absolute;left:34.3px;top:316.29999999999995px;width:22px;height:1px;background:#d0d0d0;"></div>
<div style="position:absolute;left:34.449999999999996px;top:305.00px;font-size:10px;line-height:11.50px;color:#222;font-weight:400;white-space:nowrap;letter-spacing:0.3px;width:22px;text-align:center;-webkit-text-stroke:0.15px;">222</div>
<div style="position:absolute;left:34.3px;top:330.94999999999993px;width:22px;height:1px;background:#d0d0d0;"></div>
<div style="position:absolute;left:34.449999999999996px;top:319.65px;font-size:10px;line-height:11.50px;color:#222;font-weight:400;white-space:nowrap;letter-spacing:0.3px;width:22px;text-align:center;-webkit-text-stroke:0.15px;">223</div>
<div style="position:absolute;left:34.3px;top:345.6px;width:22px;height:1px;background:#d0d0d0;"></div>
<div style="position:absolute;left:34.449999999999996px;top:334.30px;font-size:10px;line-height:11.50px;color:#222;font-weight:400;white-space:nowrap;letter-spacing:0.3px;width:22px;text-align:center;-webkit-text-stroke:0.15px;">224</div>
<div style="position:absolute;left:34.3px;top:360.25px;width:22px;height:1px;background:#d0d0d0;"></div>
<div style="position:absolute;left:34.449999999999996px;top:348.95px;font-size:10px;line-height:11.50px;color:#222;font-weight:400;white-space:nowrap;letter-spacing:0.3px;width:22px;text-align:center;-webkit-text-stroke:0.15px;">225</div>
<div style="position:absolute;left:34.3px;top:374.9px;width:22px;height:1px;background:#d0d0d0;"></div>
<div style="position:absolute;left:34.449999999999996px;top:363.60px;font-size:10px;line-height:11.50px;color:#222;font-weight:400;white-space:nowrap;letter-spacing:0.3px;width:22px;text-align:center;-webkit-text-stroke:0.15px;">226</div>
<div style="position:absolute;left:34.3px;top:389.54999999999995px;width:22px;height:1px;background:#d0d0d0;"></div>
<div style="position:absolute;left:34.449999999999996px;top:378.25px;font-size:10px;line-height:11.50px;color:#222;font-weight:400;white-space:nowrap;letter-spacing:0.3px;width:22px;text-align:center;-webkit-text-stroke:0.15px;">227</div>
<div style="position:absolute;left:34.3px;top:404.19999999999993px;width:22px;height:1px;background:#d0d0d0;"></div>
<div style="position:absolute;left:34.449999999999996px;top:392.90px;font-size:10px;line-height:11.50px;color:#222;font-weight:400;white-space:nowrap;letter-spacing:0.3px;width:22px;text-align:center;-webkit-text-stroke:0.15px;">228</div>
<div style="position:absolute;left:34.3px;top:418.85px;width:22px;height:1px;background:#d0d0d0;"></div>
<div style="position:absolute;left:34.449999999999996px;top:407.55px;font-size:10px;line-height:11.50px;color:#222;font-weight:400;white-space:nowrap;letter-spacing:0.3px;width:22px;text-align:center;-webkit-text-stroke:0.15px;">229</div>
<div style="position:absolute;left:34.3px;top:433.5px;width:22px;height:1px;background:#d0d0d0;"></div>
<div style="position:absolute;left:34.449999999999996px;top:422.20px;font-size:10px;line-height:11.50px;color:#222;font-weight:400;white-space:nowrap;letter-spacing:0.3px;width:22px;text-align:center;-webkit-text-stroke:0.15px;">230</div>
<div style="position:absolute;left:34.3px;top:448.15px;width:22px;height:1px;background:#d0d0d0;"></div>
<div style="position:absolute;left:34.449999999999996px;top:436.85px;font-size:10px;line-height:11.50px;color:#222;font-weight:400;white-space:nowrap;letter-spacing:0.3px;width:22px;text-align:center;-webkit-text-stroke:0.15px;">231</div>
<div style="position:absolute;left:34.3px;top:462.80000000000007px;width:22px;height:1px;background:#d0d0d0;"></div>
<div style="position:absolute;left:34.449999999999996px;top:451.50px;font-size:10px;line-height:11.50px;color:#222;font-weight:400;white-space:nowrap;letter-spacing:0.3px;width:22px;text-align:center;-webkit-text-stroke:0.15px;">232</div>
<div style="position:absolute;left:34.3px;top:477.44999999999993px;width:22px;height:1px;background:#d0d0d0;"></div>
<div style="position:absolute;left:34.449999999999996px;top:466.15px;font-size:10px;line-height:11.50px;color:#222;font-weight:400;white-space:nowrap;letter-spacing:0.3px;width:22px;text-align:center;-webkit-text-stroke:0.15px;">233</div>
<div style="position:absolute;left:34.3px;top:492.1px;width:22px;height:1px;background:#d0d0d0;"></div>
<div style="position:absolute;left:34.449999999999996px;top:480.80px;font-size:10px;line-height:11.50px;color:#222;font-weight:400;white-space:nowrap;letter-spacing:0.3px;width:22px;text-align:center;-webkit-text-stroke:0.15px;">234</div>
<div style="position:absolute;left:34.3px;top:506.75px;width:22px;height:1px;background:#d0d0d0;"></div>
<div style="position:absolute;left:34.449999999999996px;top:495.45px;font-size:10px;line-height:11.50px;color:#222;font-weight:400;white-space:nowrap;letter-spacing:0.3px;width:22px;text-align:center;-webkit-text-stroke:0.15px;">235</div>
<div style="position:absolute;left:34.3px;top:521.4px;width:22px;height:1px;background:#d0d0d0;"></div>
<div style="position:absolute;left:34.449999999999996px;top:510.10px;font-size:10px;line-height:11.50px;color:#222;font-weight:400;white-space:nowrap;letter-spacing:0.3px;width:22px;text-align:center;-webkit-text-stroke:0.15px;">236</div>
<div style="position:absolute;left:34.3px;top:536.0500000000001px;width:22px;height:1px;background:#d0d0d0;"></div>
<div style="position:absolute;left:34.449999999999996px;top:524.75px;font-size:10px;line-height:11.50px;color:#222;font-weight:400;white-space:nowrap;letter-spacing:0.3px;width:22px;text-align:center;-webkit-text-stroke:0.15px;">237</div>
<div style="position:absolute;left:34.3px;top:550.6999999999999px;width:22px;height:1px;background:#d0d0d0;"></div>
<div style="position:absolute;left:34.449999999999996px;top:539.40px;font-size:10px;line-height:11.50px;color:#222;font-weight:400;white-space:nowrap;letter-spacing:0.3px;width:22px;text-align:center;-webkit-text-stroke:0.15px;">238</div>
<div style="position:absolute;left:34.3px;top:565.35px;width:22px;height:1px;background:#d0d0d0;"></div>
<div style="position:absolute;left:34.449999999999996px;top:554.05px;font-size:10px;line-height:11.50px;color:#222;font-weight:400;white-space:nowrap;letter-spacing:0.3px;width:22px;text-align:center;-webkit-text-stroke:0.15px;">239</div>
<div style="position:absolute;left:34.3px;top:580.0px;width:22px;height:1px;background:#d0d0d0;"></div>
<div style="position:absolute;left:34.449999999999996px;top:568.70px;font-size:10px;line-height:11.50px;color:#222;font-weight:400;white-space:nowrap;letter-spacing:0.3px;width:22px;text-align:center;-webkit-text-stroke:0.15px;">240</div>
<div style="position:absolute;left:34.3px;top:594.65px;width:22px;height:1px;background:#d0d0d0;"></div>
<div style="position:absolute;left:34.449999999999996px;top:583.35px;font-size:10px;line-height:11.50px;color:#222;font-weight:400;white-space:nowrap;letter-spacing:0.3px;width:22px;text-align:center;-webkit-text-stroke:0.15px;">241</div>
<div style="position:absolute;left:34.3px;top:609.3000000000001px;width:22px;height:1px;background:#d0d0d0;"></div>
<div style="position:absolute;left:34.449999999999996px;top:598.00px;font-size:10px;line-height:11.50px;color:#222;font-weight:400;white-space:nowrap;letter-spacing:0.3px;width:22px;text-align:center;-webkit-text-stroke:0.15px;">242</div>
<div style="position:absolute;left:34.3px;top:623.9499999999999px;width:22px;height:1px;background:#d0d0d0;"></div>
<div style="position:absolute;left:34.449999999999996px;top:612.65px;font-size:10px;line-height:11.50px;color:#222;font-weight:400;white-space:nowrap;letter-spacing:0.3px;width:22px;text-align:center;-webkit-text-stroke:0.15px;">243</div>
<div style="position:absolute;left:34.3px;top:638.6px;width:22px;height:1px;background:#d0d0d0;"></div>
<div style="position:absolute;left:34.449999999999996px;top:627.30px;font-size:10px;line-height:11.50px;color:#222;font-weight:400;white-space:nowrap;letter-spacing:0.3px;width:22px;text-align:center;-webkit-text-stroke:0.15px;">244</div>
<div style="position:absolute;left:34.3px;top:653.25px;width:22px;height:1px;background:#d0d0d0;"></div>
<div style="position:absolute;left:34.449999999999996px;top:641.95px;font-size:10px;line-height:11.50px;color:#222;font-weight:400;white-space:nowrap;letter-spacing:0.3px;width:22px;text-align:center;-webkit-text-stroke:0.15px;">245</div>
<div style="position:absolute;left:34.3px;top:667.9px;width:22px;height:1px;background:#d0d0d0;"></div>
<div style="position:absolute;left:34.449999999999996px;top:656.60px;font-size:10px;line-height:11.50px;color:#222;font-weight:400;white-space:nowrap;letter-spacing:0.3px;width:22px;text-align:center;-webkit-text-stroke:0.15px;">246</div>
<div style="position:absolute;left:34.3px;top:682.5500000000001px;width:22px;height:1px;background:#d0d0d0;"></div>
<div style="position:absolute;left:34.449999999999996px;top:671.25px;font-size:10px;line-height:11.50px;color:#222;font-weight:400;white-space:nowrap;letter-spacing:0.3px;width:22px;text-align:center;-webkit-text-stroke:0.15px;">247</div>
<div style="position:absolute;left:34.3px;top:697.1999999999999px;width:22px;height:1px;background:#d0d0d0;"></div>
<div style="position:absolute;left:34.449999999999996px;top:685.90px;font-size:10px;line-height:11.50px;color:#222;font-weight:400;white-space:nowrap;letter-spacing:0.3px;width:22px;text-align:center;-webkit-text-stroke:0.15px;">248</div>
<div style="position:absolute;left:6px;top:216.25px;width:1.6px;height:130.35000000000002px;background:#9a9a9a;"></div>
<div style="position:absolute;left:6px;top:216.25px;width:6.3px;height:1.6px;background:#9a9a9a;"></div>
<div style="position:absolute;left:20.5px;top:221.75px;width:1.6px;height:1.6px;background:#8a8a8a;"></div>
<div style="position:absolute;left:20.5px;top:236.40000000000003px;width:1.6px;height:1.6px;background:#8a8a8a;"></div>
<div style="position:absolute;left:20.5px;top:251.04999999999995px;width:1.6px;height:1.6px;background:#8a8a8a;"></div>
<div style="position:absolute;left:20.5px;top:265.70000000000005px;width:1.6px;height:1.6px;background:#8a8a8a;"></div>
<div style="position:absolute;left:20.5px;top:280.35px;width:1.6px;height:1.6px;background:#8a8a8a;"></div>
<div style="position:absolute;left:20.5px;top:295.0px;width:1.6px;height:1.6px;background:#8a8a8a;"></div>
<div style="position:absolute;left:20.5px;top:309.65px;width:1.6px;height:1.6px;background:#8a8a8a;"></div>
<div style="position:absolute;left:20.5px;top:324.29999999999995px;width:1.6px;height:1.6px;background:#8a8a8a;"></div>
<div style="position:absolute;left:20.5px;top:338.95000000000005px;width:1.6px;height:1.6px;background:#8a8a8a;"></div>
<div style="position:absolute;left:2.3px;top:347.1px;width:14.4px;height:14px;background:#e6e6e6;border:1.2px solid #8a8a8a;"></div>
<div style="position:absolute;left:5.5px;top:353.1px;width:8px;height:1.8px;background:#555;"></div>
<div style="position:absolute;left:6px;top:377.4px;width:1.6px;height:310.6px;background:#9a9a9a;"></div>
<div style="position:absolute;left:6px;top:377.4px;width:6.3px;height:1.6px;background:#9a9a9a;"></div>
<div style="position:absolute;left:20.5px;top:382.9px;width:1.6px;height:1.6px;background:#8a8a8a;"></div>
<div style="position:absolute;left:20.5px;top:397.54999999999995px;width:1.6px;height:1.6px;background:#8a8a8a;"></div>
<div style="position:absolute;left:20.5px;top:412.20000000000005px;width:1.6px;height:1.6px;background:#8a8a8a;"></div>
<div style="position:absolute;left:20.5px;top:426.85px;width:1.6px;height:1.6px;background:#8a8a8a;"></div>
<div style="position:absolute;left:20.5px;top:441.5px;width:1.6px;height:1.6px;background:#8a8a8a;"></div>
<div style="position:absolute;left:20.5px;top:456.1500000000001px;width:1.6px;height:1.6px;background:#8a8a8a;"></div>
<div style="position:absolute;left:20.5px;top:470.79999999999995px;width:1.6px;height:1.6px;background:#8a8a8a;"></div>
<div style="position:absolute;left:20.5px;top:485.45000000000005px;width:1.6px;height:1.6px;background:#8a8a8a;"></div>
<div style="position:absolute;left:20.5px;top:500.1px;width:1.6px;height:1.6px;background:#8a8a8a;"></div>
<div style="position:absolute;left:20.5px;top:514.75px;width:1.6px;height:1.6px;background:#8a8a8a;"></div>
<div style="position:absolute;left:20.5px;top:529.4000000000001px;width:1.6px;height:1.6px;background:#8a8a8a;"></div>
<div style="position:absolute;left:20.5px;top:544.05px;width:1.6px;height:1.6px;background:#8a8a8a;"></div>
<div style="position:absolute;left:20.5px;top:558.7px;width:1.6px;height:1.6px;background:#8a8a8a;"></div>
<div style="position:absolute;left:20.5px;top:573.35px;width:1.6px;height:1.6px;background:#8a8a8a;"></div>
<div style="position:absolute;left:20.5px;top:588.0px;width:1.6px;height:1.6px;background:#8a8a8a;"></div>
<div style="position:absolute;left:20.5px;top:602.6500000000001px;width:1.6px;height:1.6px;background:#8a8a8a;"></div>
<div style="position:absolute;left:20.5px;top:617.3px;width:1.6px;height:1.6px;background:#8a8a8a;"></div>
<div style="position:absolute;left:20.5px;top:631.95px;width:1.6px;height:1.6px;background:#8a8a8a;"></div>
<div style="position:absolute;left:20.5px;top:646.6px;width:1.6px;height:1.6px;background:#8a8a8a;"></div>
<div style="position:absolute;left:20.5px;top:661.25px;width:1.6px;height:1.6px;background:#8a8a8a;"></div>
<div style="position:absolute;left:20.5px;top:675.9000000000001px;width:1.6px;height:1.6px;background:#8a8a8a;"></div>
<div style="position:absolute;left:20.5px;top:690.55px;width:1.6px;height:1.6px;background:#8a8a8a;"></div>
<div style="position:absolute;left:1327.1px;top:171px;width:2px;height:16px;background:#217346;"></div>
<div style="position:absolute;left:1327.1px;top:185px;width:83px;height:2px;background:#217346;"></div>
<div style="position:absolute;left:1410.9px;top:171px;width:2px;height:11.5px;background:#217346;"></div>
<div style="position:absolute;left:1408.2px;top:182.60000000000002px;width:6.5px;height:6px;background:#217346;border:1px solid #fff;"></div>
</div>
<div style="position:absolute;left:0px;top:951px;width:1445px;height:1px;background:#c6c6c6;"></div>
<div style="position:absolute;left:0px;top:951.2px;width:1445px;height:29px;background:#e6e6e6;"></div>
<div style="position:absolute;left:0px;top:951.2px;width:1445px;height:1px;background:#c6c6c6;"></div>
<svg style="position:absolute;left:26px;top:958px;" width="8" height="12" viewBox="0 0 8 12"><path d="M6 1 L1 6 L6 11 Z" fill="#c2c2c2"/></svg>
<svg style="position:absolute;left:54px;top:958px;" width="8" height="12" viewBox="0 0 8 12"><path d="M2 1 L7 6 L2 11 Z" fill="#c2c2c2"/></svg>
<div style="position:absolute;left:100.3px;top:955.6px;width:1.2px;height:20px;background:#b4b4b4;"></div>
<div style="position:absolute;left:103.4px;top:954.2px;width:63.6px;height:22.1px;background:#1aa7e2;"></div>
<div style="position:absolute;left:113.7px;top:953.87px;font-size:15.5px;line-height:17.82px;color:#111;font-weight:400;white-space:nowrap;">Cover</div>
<div style="position:absolute;left:168.5px;top:951.2px;width:95px;height:25.1px;background:#fff;border:1px solid #c6c6c6;border-top:none;"></div>
<div style="position:absolute;left:168.5px;top:974.3px;width:95px;height:2px;background:#217346;"></div>
<div style="position:absolute;left:181.2px;top:953.87px;font-size:15.5px;line-height:17.82px;color:#217346;font-weight:700;white-space:nowrap;letter-spacing:0.55px;">Build-Up</div>
<div style="position:absolute;left:275.5px;top:953.87px;font-size:15.5px;line-height:17.82px;color:#444;font-weight:400;white-space:nowrap;letter-spacing:-1.8px;">FS</div>
<div style="position:absolute;left:304.8px;top:955.6px;width:1.2px;height:20px;background:#b4b4b4;"></div>
<div style="position:absolute;left:317.6px;top:953.87px;font-size:15.5px;line-height:17.82px;color:#444;font-weight:400;white-space:nowrap;letter-spacing:-0.8px;">DCF</div>
<div style="position:absolute;left:360.8px;top:955.6px;width:1.2px;height:20px;background:#b4b4b4;"></div>
<div style="position:absolute;left:373px;top:953.87px;font-size:15.5px;line-height:17.82px;color:#444;font-weight:400;white-space:nowrap;">WACC</div>
<div style="position:absolute;left:433px;top:955.6px;width:1.2px;height:20px;background:#b4b4b4;"></div>
<svg style="position:absolute;left:464.5px;top:954.5px;" width="22" height="22" viewBox="0 0 22 22"><circle cx="11" cy="11" r="9.6" fill="none" stroke="#777" stroke-width="1.3"/><path d="M11 5.5 V16.5 M5.5 11 H16.5" stroke="#666" stroke-width="1.4"/></svg>
<div style="position:absolute;left:1122px;top:959px;width:2.2px;height:2.6px;background:#b0b0b0;"></div>
<div style="position:absolute;left:1122px;top:963.5px;width:2.2px;height:2.6px;background:#b0b0b0;"></div>
<div style="position:absolute;left:1122px;top:968px;width:2.2px;height:2.6px;background:#b0b0b0;"></div>
<div style="position:absolute;left:1139.4px;top:956.7px;width:310px;height:18px;background:#fff;border:1px solid #9a9a9a;"></div>
<div style="position:absolute;left:1157.5px;top:957px;width:1.2px;height:17px;background:#9a9a9a;"></div>
<svg style="position:absolute;left:1144px;top:960px;" width="8" height="11" viewBox="0 0 8 11"><path d="M7 1 L1.5 5.5 L7 10 Z" fill="#222"/></svg>
<div style="position:absolute;left:0px;top:980px;width:1445px;height:25px;background:#f3f2f1;"></div>
<div style="position:absolute;left:13.8px;top:987.44px;font-size:12px;line-height:13.80px;color:#444;font-weight:400;white-space:nowrap;">Ready</div>
<div style="position:absolute;left:68.5px;top:987.44px;font-size:12px;line-height:13.80px;color:#444;font-weight:400;white-space:nowrap;">Calculate</div>
<svg style="position:absolute;left:143px;top:984px;" width="19" height="19" viewBox="0 0 19 19"><circle cx="8" cy="3" r="2.2" fill="none" stroke="#555" stroke-width="1.2"/><path d="M2 6 C5 8 11 8 15 5 M8.5 8 L6 17 M8.5 8 L11 12 M9 12 L17 18.5 M17 12 L10 18.5" fill="none" stroke="#555" stroke-width="1.2"/></svg>
<div style="position:absolute;left:165.6px;top:987.08px;font-size:12.4px;line-height:14.26px;color:#444;font-weight:700;white-space:nowrap;">Accessibility: Investigate</div>
<svg style="position:absolute;left:1384.6px;top:985px;" width="19" height="17" viewBox="0 0 19 17"><path d="M7 12.5 H1 V1 H17 V6" fill="none" stroke="#555" stroke-width="1.2"/><circle cx="12.5" cy="11.5" r="3" fill="none" stroke="#555" stroke-width="1.8" stroke-dasharray="1.6 1"/></svg>
<div style="position:absolute;left:1405px;top:986.53px;font-size:13px;line-height:14.95px;color:#333;font-weight:400;white-space:nowrap;">Display</div>
</body></html>
